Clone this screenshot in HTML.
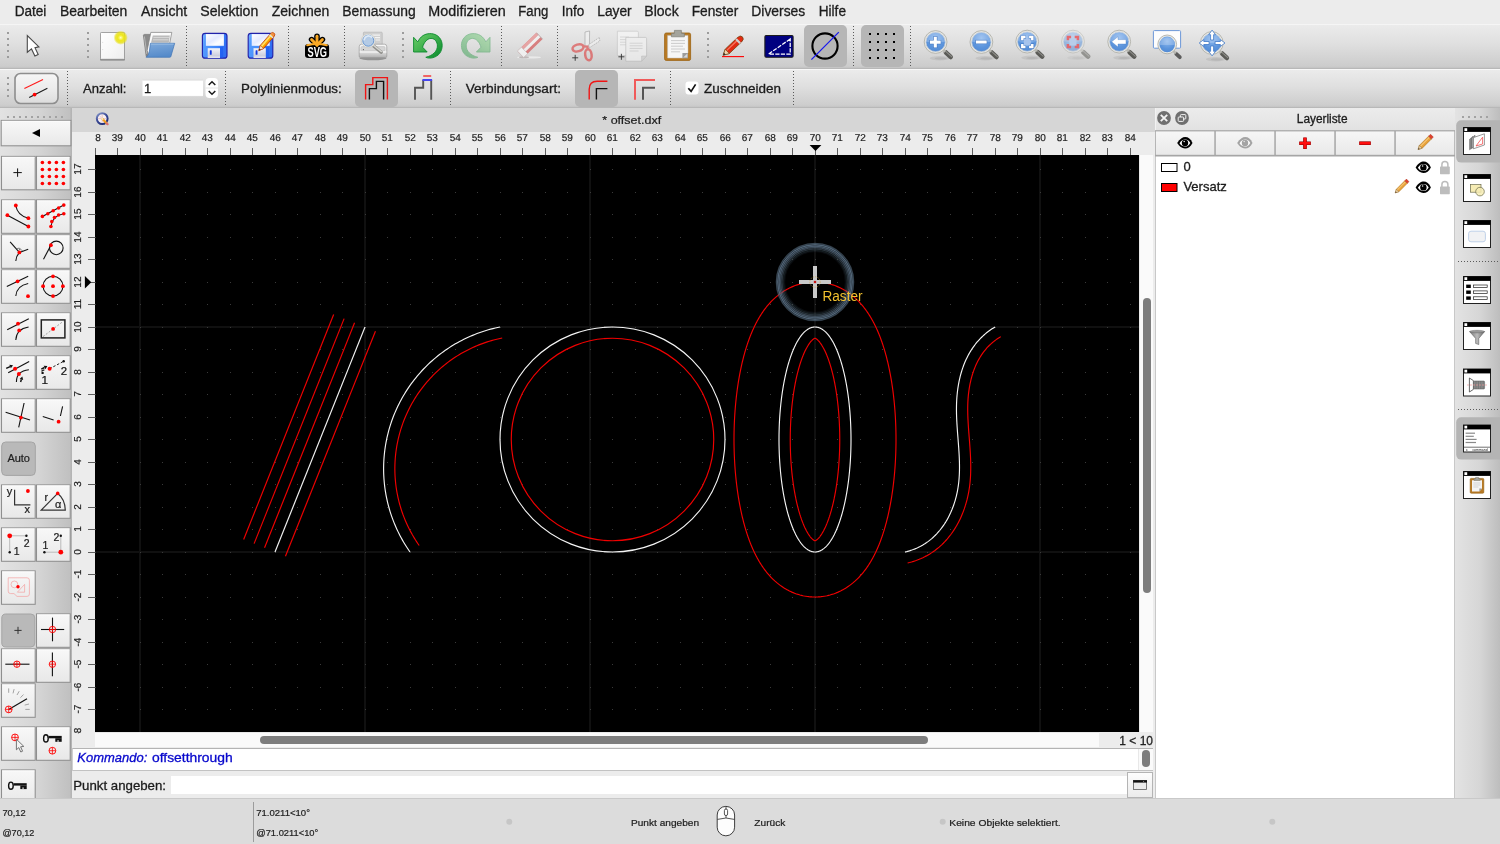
<!DOCTYPE html>
<html><head><meta charset="utf-8"><title>QCAD</title>
<style>
html,body{margin:0;padding:0}
body{width:1500px;height:844px;position:relative;overflow:hidden;background:#ececec;font-family:"Liberation Sans",sans-serif;color:#262626}
div{position:absolute;box-sizing:border-box}
svg{position:absolute;overflow:visible;will-change:transform}
#menubar{left:0;top:0;width:1500px;height:24px;background:#ececec}
#tb1{left:0;top:24px;width:1500px;height:45px;background:linear-gradient(#ebebeb,#dfdfdf 45%,#cccccc 96%,#c2c2c2);border-top:1px solid #f5f5f5;border-bottom:1px solid #b8b8b8}
#tb2{left:0;top:69px;width:1500px;height:39px;background:linear-gradient(#ebebeb,#dfdfdf 45%,#cdcdcd 95%,#c4c4c4);border-top:1px solid #f8f8f8;border-bottom:1px solid #b8b8b8}
#leftbar{left:0;top:108px;width:72px;height:690px;background:linear-gradient(90deg,#e2e2e2,#d4d4d4 55%,#bfbfbf)}
#leftedge{left:70px;top:108px;width:2px;height:690px;background:linear-gradient(90deg,#bcbcbc,#b2b2b2)}
#tabbar{left:72px;top:108px;width:1083px;height:24px;background:#d6d6d6}
#rulerbg{left:72px;top:132px;width:1083px;height:616px;background:#ececec}
#canvasbg{left:95px;top:155px;width:1044px;height:577px;background:#000}
#vscroll{left:1139px;top:155px;width:14px;height:577px;background:#fafafa;border-left:1px solid #e8e8e8}
#hscroll{left:95px;top:732px;width:1004px;height:15px;background:#fafafa;border-top:1px solid #e8e8e8}
.thumb{background:#7d7d7d;border-radius:4px}
#zoomlbl{left:1099px;top:732px;width:54px;height:16px;background:#ececec}
#cmdarea{left:72px;top:748px;width:1083px;height:50px;background:#ececec}
#cmdhist{left:72px;top:748px;width:1081px;height:23px;background:#fff;border-top:1px solid #b4b4b4;border-bottom:1px solid #c2c2c2;border-left:1px solid #cfcfcf}
#cmdhistsb{left:1138px;top:749px;width:15px;height:21px;background:#fafafa;border-left:1px solid #e8e8e8}
#cmdline{left:171px;top:776px;width:956px;height:18px;background:#fff}
#cmdbtn{left:1127px;top:772px;width:26px;height:26px;background:linear-gradient(#fdfdfd,#ebebeb);border:1px solid #b4b4b4}
#layerpanel{left:1155px;top:108px;width:300px;height:690px;background:#fff;border-left:1px solid #c8c8c8;border-right:1px solid #c8c8c8}
#layerhdr{left:1155px;top:108px;width:300px;height:24px;background:linear-gradient(#ececec,#e1e1e1);border-left:1px solid #f2f2f2}
#rightbar{left:1455px;top:108px;width:45px;height:690px;background:linear-gradient(90deg,#e3e3e3,#d6d6d6 55%,#bdbdbd)}
#statusbar{left:0;top:798px;width:1500px;height:46px;background:#dcdcdc;border-top:1px solid #c9c9c9}
</style></head>
<body>
<div id="menubar"></div>
<div id="tb1"></div>
<div id="tb2"></div>
<div id="leftbar"></div>
<div id="tabbar"></div>
<div id="leftedge"></div>
<div id="rulerbg"></div>
<div id="canvasbg"></div>
<div id="vscroll"><div class="thumb" style="left:3px;top:143px;width:8px;height:295px"></div></div>
<div id="hscroll"><div class="thumb" style="left:165px;top:3px;width:668px;height:8px"></div></div>
<div id="zoomlbl"></div>
<div id="cmdarea"></div>
<div id="cmdhist"></div>
<div id="cmdhistsb"><div class="thumb" style="left:3px;top:1px;width:8px;height:17px"></div></div>
<div id="cmdline"></div>
<div id="cmdbtn"></div>
<div id="layerpanel"></div>
<div id="layerhdr"></div>
<div id="rightbar"></div>
<div id="statusbar"></div>

<svg id="cv" style="left:95px;top:155px" width="1044" height="577" viewBox="0 0 1044 577">
<defs><clipPath id="cvclip"><rect x="0" y="0" width="1044" height="577"/></clipPath>
<radialGradient id="ring" cx="50%" cy="50%" r="50%"><stop offset="0.70" stop-color="#5f7488" stop-opacity="0"/><stop offset="0.80" stop-color="#5f7488" stop-opacity="0.45"/><stop offset="0.90" stop-color="#647a8e" stop-opacity="0.9"/><stop offset="0.985" stop-color="#5a6e80" stop-opacity="0.95"/><stop offset="1" stop-color="#5a6e80" stop-opacity="0"/></radialGradient>
</defs><g clip-path="url(#cvclip)">
<rect x="44.0" y="0" width="2" height="577" fill="#101010"/>
<rect x="269.0" y="0" width="2" height="577" fill="#101010"/>
<rect x="494.0" y="0" width="2" height="577" fill="#101010"/>
<rect x="719.0" y="0" width="2" height="577" fill="#101010"/>
<rect x="944.0" y="0" width="2" height="577" fill="#101010"/>
<rect x="0" y="396.0" width="1044" height="2" fill="#101010"/>
<rect x="0" y="171.0" width="1044" height="2" fill="#101010"/>
<path d="M0 577h1v1h-1zM0 554h1v1h-1zM0 532h1v1h-1zM0 509h1v1h-1zM0 487h1v1h-1zM0 464h1v1h-1zM0 442h1v1h-1zM0 419h1v1h-1zM0 397h1v1h-1zM0 374h1v1h-1zM0 352h1v1h-1zM0 329h1v1h-1zM0 307h1v1h-1zM0 284h1v1h-1zM0 262h1v1h-1zM0 239h1v1h-1zM0 217h1v1h-1zM0 194h1v1h-1zM0 172h1v1h-1zM0 149h1v1h-1zM0 127h1v1h-1zM0 104h1v1h-1zM0 82h1v1h-1zM0 59h1v1h-1zM0 37h1v1h-1zM0 14h1v1h-1zM22 577h1v1h-1zM22 554h1v1h-1zM22 532h1v1h-1zM22 509h1v1h-1zM22 487h1v1h-1zM22 464h1v1h-1zM22 442h1v1h-1zM22 419h1v1h-1zM22 397h1v1h-1zM22 374h1v1h-1zM22 352h1v1h-1zM22 329h1v1h-1zM22 307h1v1h-1zM22 284h1v1h-1zM22 262h1v1h-1zM22 239h1v1h-1zM22 217h1v1h-1zM22 194h1v1h-1zM22 172h1v1h-1zM22 149h1v1h-1zM22 127h1v1h-1zM22 104h1v1h-1zM22 82h1v1h-1zM22 59h1v1h-1zM22 37h1v1h-1zM22 14h1v1h-1zM45 577h1v1h-1zM45 554h1v1h-1zM45 532h1v1h-1zM45 509h1v1h-1zM45 487h1v1h-1zM45 464h1v1h-1zM45 442h1v1h-1zM45 419h1v1h-1zM45 397h1v1h-1zM45 374h1v1h-1zM45 352h1v1h-1zM45 329h1v1h-1zM45 307h1v1h-1zM45 284h1v1h-1zM45 262h1v1h-1zM45 239h1v1h-1zM45 217h1v1h-1zM45 194h1v1h-1zM45 172h1v1h-1zM45 149h1v1h-1zM45 127h1v1h-1zM45 104h1v1h-1zM45 82h1v1h-1zM45 59h1v1h-1zM45 37h1v1h-1zM45 14h1v1h-1zM67 577h1v1h-1zM67 554h1v1h-1zM67 532h1v1h-1zM67 509h1v1h-1zM67 487h1v1h-1zM67 464h1v1h-1zM67 442h1v1h-1zM67 419h1v1h-1zM67 397h1v1h-1zM67 374h1v1h-1zM67 352h1v1h-1zM67 329h1v1h-1zM67 307h1v1h-1zM67 284h1v1h-1zM67 262h1v1h-1zM67 239h1v1h-1zM67 217h1v1h-1zM67 194h1v1h-1zM67 172h1v1h-1zM67 149h1v1h-1zM67 127h1v1h-1zM67 104h1v1h-1zM67 82h1v1h-1zM67 59h1v1h-1zM67 37h1v1h-1zM67 14h1v1h-1zM90 577h1v1h-1zM90 554h1v1h-1zM90 532h1v1h-1zM90 509h1v1h-1zM90 487h1v1h-1zM90 464h1v1h-1zM90 442h1v1h-1zM90 419h1v1h-1zM90 397h1v1h-1zM90 374h1v1h-1zM90 352h1v1h-1zM90 329h1v1h-1zM90 307h1v1h-1zM90 284h1v1h-1zM90 262h1v1h-1zM90 239h1v1h-1zM90 217h1v1h-1zM90 194h1v1h-1zM90 172h1v1h-1zM90 149h1v1h-1zM90 127h1v1h-1zM90 104h1v1h-1zM90 82h1v1h-1zM90 59h1v1h-1zM90 37h1v1h-1zM90 14h1v1h-1zM112 577h1v1h-1zM112 554h1v1h-1zM112 532h1v1h-1zM112 509h1v1h-1zM112 487h1v1h-1zM112 464h1v1h-1zM112 442h1v1h-1zM112 419h1v1h-1zM112 397h1v1h-1zM112 374h1v1h-1zM112 352h1v1h-1zM112 329h1v1h-1zM112 307h1v1h-1zM112 284h1v1h-1zM112 262h1v1h-1zM112 239h1v1h-1zM112 217h1v1h-1zM112 194h1v1h-1zM112 172h1v1h-1zM112 149h1v1h-1zM112 127h1v1h-1zM112 104h1v1h-1zM112 82h1v1h-1zM112 59h1v1h-1zM112 37h1v1h-1zM112 14h1v1h-1zM135 577h1v1h-1zM135 554h1v1h-1zM135 532h1v1h-1zM135 509h1v1h-1zM135 487h1v1h-1zM135 464h1v1h-1zM135 442h1v1h-1zM135 419h1v1h-1zM135 397h1v1h-1zM135 374h1v1h-1zM135 352h1v1h-1zM135 329h1v1h-1zM135 307h1v1h-1zM135 284h1v1h-1zM135 262h1v1h-1zM135 239h1v1h-1zM135 217h1v1h-1zM135 194h1v1h-1zM135 172h1v1h-1zM135 149h1v1h-1zM135 127h1v1h-1zM135 104h1v1h-1zM135 82h1v1h-1zM135 59h1v1h-1zM135 37h1v1h-1zM135 14h1v1h-1zM157 577h1v1h-1zM157 554h1v1h-1zM157 532h1v1h-1zM157 509h1v1h-1zM157 487h1v1h-1zM157 464h1v1h-1zM157 442h1v1h-1zM157 419h1v1h-1zM157 397h1v1h-1zM157 374h1v1h-1zM157 352h1v1h-1zM157 329h1v1h-1zM157 307h1v1h-1zM157 284h1v1h-1zM157 262h1v1h-1zM157 239h1v1h-1zM157 217h1v1h-1zM157 194h1v1h-1zM157 172h1v1h-1zM157 149h1v1h-1zM157 127h1v1h-1zM157 104h1v1h-1zM157 82h1v1h-1zM157 59h1v1h-1zM157 37h1v1h-1zM157 14h1v1h-1zM180 577h1v1h-1zM180 554h1v1h-1zM180 532h1v1h-1zM180 509h1v1h-1zM180 487h1v1h-1zM180 464h1v1h-1zM180 442h1v1h-1zM180 419h1v1h-1zM180 397h1v1h-1zM180 374h1v1h-1zM180 352h1v1h-1zM180 329h1v1h-1zM180 307h1v1h-1zM180 284h1v1h-1zM180 262h1v1h-1zM180 239h1v1h-1zM180 217h1v1h-1zM180 194h1v1h-1zM180 172h1v1h-1zM180 149h1v1h-1zM180 127h1v1h-1zM180 104h1v1h-1zM180 82h1v1h-1zM180 59h1v1h-1zM180 37h1v1h-1zM180 14h1v1h-1zM202 577h1v1h-1zM202 554h1v1h-1zM202 532h1v1h-1zM202 509h1v1h-1zM202 487h1v1h-1zM202 464h1v1h-1zM202 442h1v1h-1zM202 419h1v1h-1zM202 397h1v1h-1zM202 374h1v1h-1zM202 352h1v1h-1zM202 329h1v1h-1zM202 307h1v1h-1zM202 284h1v1h-1zM202 262h1v1h-1zM202 239h1v1h-1zM202 217h1v1h-1zM202 194h1v1h-1zM202 172h1v1h-1zM202 149h1v1h-1zM202 127h1v1h-1zM202 104h1v1h-1zM202 82h1v1h-1zM202 59h1v1h-1zM202 37h1v1h-1zM202 14h1v1h-1zM225 577h1v1h-1zM225 554h1v1h-1zM225 532h1v1h-1zM225 509h1v1h-1zM225 487h1v1h-1zM225 464h1v1h-1zM225 442h1v1h-1zM225 419h1v1h-1zM225 397h1v1h-1zM225 374h1v1h-1zM225 352h1v1h-1zM225 329h1v1h-1zM225 307h1v1h-1zM225 284h1v1h-1zM225 262h1v1h-1zM225 239h1v1h-1zM225 217h1v1h-1zM225 194h1v1h-1zM225 172h1v1h-1zM225 149h1v1h-1zM225 127h1v1h-1zM225 104h1v1h-1zM225 82h1v1h-1zM225 59h1v1h-1zM225 37h1v1h-1zM225 14h1v1h-1zM247 577h1v1h-1zM247 554h1v1h-1zM247 532h1v1h-1zM247 509h1v1h-1zM247 487h1v1h-1zM247 464h1v1h-1zM247 442h1v1h-1zM247 419h1v1h-1zM247 397h1v1h-1zM247 374h1v1h-1zM247 352h1v1h-1zM247 329h1v1h-1zM247 307h1v1h-1zM247 284h1v1h-1zM247 262h1v1h-1zM247 239h1v1h-1zM247 217h1v1h-1zM247 194h1v1h-1zM247 172h1v1h-1zM247 149h1v1h-1zM247 127h1v1h-1zM247 104h1v1h-1zM247 82h1v1h-1zM247 59h1v1h-1zM247 37h1v1h-1zM247 14h1v1h-1zM270 577h1v1h-1zM270 554h1v1h-1zM270 532h1v1h-1zM270 509h1v1h-1zM270 487h1v1h-1zM270 464h1v1h-1zM270 442h1v1h-1zM270 419h1v1h-1zM270 397h1v1h-1zM270 374h1v1h-1zM270 352h1v1h-1zM270 329h1v1h-1zM270 307h1v1h-1zM270 284h1v1h-1zM270 262h1v1h-1zM270 239h1v1h-1zM270 217h1v1h-1zM270 194h1v1h-1zM270 172h1v1h-1zM270 149h1v1h-1zM270 127h1v1h-1zM270 104h1v1h-1zM270 82h1v1h-1zM270 59h1v1h-1zM270 37h1v1h-1zM270 14h1v1h-1zM292 577h1v1h-1zM292 554h1v1h-1zM292 532h1v1h-1zM292 509h1v1h-1zM292 487h1v1h-1zM292 464h1v1h-1zM292 442h1v1h-1zM292 419h1v1h-1zM292 397h1v1h-1zM292 374h1v1h-1zM292 352h1v1h-1zM292 329h1v1h-1zM292 307h1v1h-1zM292 284h1v1h-1zM292 262h1v1h-1zM292 239h1v1h-1zM292 217h1v1h-1zM292 194h1v1h-1zM292 172h1v1h-1zM292 149h1v1h-1zM292 127h1v1h-1zM292 104h1v1h-1zM292 82h1v1h-1zM292 59h1v1h-1zM292 37h1v1h-1zM292 14h1v1h-1zM315 577h1v1h-1zM315 554h1v1h-1zM315 532h1v1h-1zM315 509h1v1h-1zM315 487h1v1h-1zM315 464h1v1h-1zM315 442h1v1h-1zM315 419h1v1h-1zM315 397h1v1h-1zM315 374h1v1h-1zM315 352h1v1h-1zM315 329h1v1h-1zM315 307h1v1h-1zM315 284h1v1h-1zM315 262h1v1h-1zM315 239h1v1h-1zM315 217h1v1h-1zM315 194h1v1h-1zM315 172h1v1h-1zM315 149h1v1h-1zM315 127h1v1h-1zM315 104h1v1h-1zM315 82h1v1h-1zM315 59h1v1h-1zM315 37h1v1h-1zM315 14h1v1h-1zM337 577h1v1h-1zM337 554h1v1h-1zM337 532h1v1h-1zM337 509h1v1h-1zM337 487h1v1h-1zM337 464h1v1h-1zM337 442h1v1h-1zM337 419h1v1h-1zM337 397h1v1h-1zM337 374h1v1h-1zM337 352h1v1h-1zM337 329h1v1h-1zM337 307h1v1h-1zM337 284h1v1h-1zM337 262h1v1h-1zM337 239h1v1h-1zM337 217h1v1h-1zM337 194h1v1h-1zM337 172h1v1h-1zM337 149h1v1h-1zM337 127h1v1h-1zM337 104h1v1h-1zM337 82h1v1h-1zM337 59h1v1h-1zM337 37h1v1h-1zM337 14h1v1h-1zM360 577h1v1h-1zM360 554h1v1h-1zM360 532h1v1h-1zM360 509h1v1h-1zM360 487h1v1h-1zM360 464h1v1h-1zM360 442h1v1h-1zM360 419h1v1h-1zM360 397h1v1h-1zM360 374h1v1h-1zM360 352h1v1h-1zM360 329h1v1h-1zM360 307h1v1h-1zM360 284h1v1h-1zM360 262h1v1h-1zM360 239h1v1h-1zM360 217h1v1h-1zM360 194h1v1h-1zM360 172h1v1h-1zM360 149h1v1h-1zM360 127h1v1h-1zM360 104h1v1h-1zM360 82h1v1h-1zM360 59h1v1h-1zM360 37h1v1h-1zM360 14h1v1h-1zM382 577h1v1h-1zM382 554h1v1h-1zM382 532h1v1h-1zM382 509h1v1h-1zM382 487h1v1h-1zM382 464h1v1h-1zM382 442h1v1h-1zM382 419h1v1h-1zM382 397h1v1h-1zM382 374h1v1h-1zM382 352h1v1h-1zM382 329h1v1h-1zM382 307h1v1h-1zM382 284h1v1h-1zM382 262h1v1h-1zM382 239h1v1h-1zM382 217h1v1h-1zM382 194h1v1h-1zM382 172h1v1h-1zM382 149h1v1h-1zM382 127h1v1h-1zM382 104h1v1h-1zM382 82h1v1h-1zM382 59h1v1h-1zM382 37h1v1h-1zM382 14h1v1h-1zM405 577h1v1h-1zM405 554h1v1h-1zM405 532h1v1h-1zM405 509h1v1h-1zM405 487h1v1h-1zM405 464h1v1h-1zM405 442h1v1h-1zM405 419h1v1h-1zM405 397h1v1h-1zM405 374h1v1h-1zM405 352h1v1h-1zM405 329h1v1h-1zM405 307h1v1h-1zM405 284h1v1h-1zM405 262h1v1h-1zM405 239h1v1h-1zM405 217h1v1h-1zM405 194h1v1h-1zM405 172h1v1h-1zM405 149h1v1h-1zM405 127h1v1h-1zM405 104h1v1h-1zM405 82h1v1h-1zM405 59h1v1h-1zM405 37h1v1h-1zM405 14h1v1h-1zM427 577h1v1h-1zM427 554h1v1h-1zM427 532h1v1h-1zM427 509h1v1h-1zM427 487h1v1h-1zM427 464h1v1h-1zM427 442h1v1h-1zM427 419h1v1h-1zM427 397h1v1h-1zM427 374h1v1h-1zM427 352h1v1h-1zM427 329h1v1h-1zM427 307h1v1h-1zM427 284h1v1h-1zM427 262h1v1h-1zM427 239h1v1h-1zM427 217h1v1h-1zM427 194h1v1h-1zM427 172h1v1h-1zM427 149h1v1h-1zM427 127h1v1h-1zM427 104h1v1h-1zM427 82h1v1h-1zM427 59h1v1h-1zM427 37h1v1h-1zM427 14h1v1h-1zM450 577h1v1h-1zM450 554h1v1h-1zM450 532h1v1h-1zM450 509h1v1h-1zM450 487h1v1h-1zM450 464h1v1h-1zM450 442h1v1h-1zM450 419h1v1h-1zM450 397h1v1h-1zM450 374h1v1h-1zM450 352h1v1h-1zM450 329h1v1h-1zM450 307h1v1h-1zM450 284h1v1h-1zM450 262h1v1h-1zM450 239h1v1h-1zM450 217h1v1h-1zM450 194h1v1h-1zM450 172h1v1h-1zM450 149h1v1h-1zM450 127h1v1h-1zM450 104h1v1h-1zM450 82h1v1h-1zM450 59h1v1h-1zM450 37h1v1h-1zM450 14h1v1h-1zM472 577h1v1h-1zM472 554h1v1h-1zM472 532h1v1h-1zM472 509h1v1h-1zM472 487h1v1h-1zM472 464h1v1h-1zM472 442h1v1h-1zM472 419h1v1h-1zM472 397h1v1h-1zM472 374h1v1h-1zM472 352h1v1h-1zM472 329h1v1h-1zM472 307h1v1h-1zM472 284h1v1h-1zM472 262h1v1h-1zM472 239h1v1h-1zM472 217h1v1h-1zM472 194h1v1h-1zM472 172h1v1h-1zM472 149h1v1h-1zM472 127h1v1h-1zM472 104h1v1h-1zM472 82h1v1h-1zM472 59h1v1h-1zM472 37h1v1h-1zM472 14h1v1h-1zM495 577h1v1h-1zM495 554h1v1h-1zM495 532h1v1h-1zM495 509h1v1h-1zM495 487h1v1h-1zM495 464h1v1h-1zM495 442h1v1h-1zM495 419h1v1h-1zM495 397h1v1h-1zM495 374h1v1h-1zM495 352h1v1h-1zM495 329h1v1h-1zM495 307h1v1h-1zM495 284h1v1h-1zM495 262h1v1h-1zM495 239h1v1h-1zM495 217h1v1h-1zM495 194h1v1h-1zM495 172h1v1h-1zM495 149h1v1h-1zM495 127h1v1h-1zM495 104h1v1h-1zM495 82h1v1h-1zM495 59h1v1h-1zM495 37h1v1h-1zM495 14h1v1h-1zM517 577h1v1h-1zM517 554h1v1h-1zM517 532h1v1h-1zM517 509h1v1h-1zM517 487h1v1h-1zM517 464h1v1h-1zM517 442h1v1h-1zM517 419h1v1h-1zM517 397h1v1h-1zM517 374h1v1h-1zM517 352h1v1h-1zM517 329h1v1h-1zM517 307h1v1h-1zM517 284h1v1h-1zM517 262h1v1h-1zM517 239h1v1h-1zM517 217h1v1h-1zM517 194h1v1h-1zM517 172h1v1h-1zM517 149h1v1h-1zM517 127h1v1h-1zM517 104h1v1h-1zM517 82h1v1h-1zM517 59h1v1h-1zM517 37h1v1h-1zM517 14h1v1h-1zM540 577h1v1h-1zM540 554h1v1h-1zM540 532h1v1h-1zM540 509h1v1h-1zM540 487h1v1h-1zM540 464h1v1h-1zM540 442h1v1h-1zM540 419h1v1h-1zM540 397h1v1h-1zM540 374h1v1h-1zM540 352h1v1h-1zM540 329h1v1h-1zM540 307h1v1h-1zM540 284h1v1h-1zM540 262h1v1h-1zM540 239h1v1h-1zM540 217h1v1h-1zM540 194h1v1h-1zM540 172h1v1h-1zM540 149h1v1h-1zM540 127h1v1h-1zM540 104h1v1h-1zM540 82h1v1h-1zM540 59h1v1h-1zM540 37h1v1h-1zM540 14h1v1h-1zM562 577h1v1h-1zM562 554h1v1h-1zM562 532h1v1h-1zM562 509h1v1h-1zM562 487h1v1h-1zM562 464h1v1h-1zM562 442h1v1h-1zM562 419h1v1h-1zM562 397h1v1h-1zM562 374h1v1h-1zM562 352h1v1h-1zM562 329h1v1h-1zM562 307h1v1h-1zM562 284h1v1h-1zM562 262h1v1h-1zM562 239h1v1h-1zM562 217h1v1h-1zM562 194h1v1h-1zM562 172h1v1h-1zM562 149h1v1h-1zM562 127h1v1h-1zM562 104h1v1h-1zM562 82h1v1h-1zM562 59h1v1h-1zM562 37h1v1h-1zM562 14h1v1h-1zM585 577h1v1h-1zM585 554h1v1h-1zM585 532h1v1h-1zM585 509h1v1h-1zM585 487h1v1h-1zM585 464h1v1h-1zM585 442h1v1h-1zM585 419h1v1h-1zM585 397h1v1h-1zM585 374h1v1h-1zM585 352h1v1h-1zM585 329h1v1h-1zM585 307h1v1h-1zM585 284h1v1h-1zM585 262h1v1h-1zM585 239h1v1h-1zM585 217h1v1h-1zM585 194h1v1h-1zM585 172h1v1h-1zM585 149h1v1h-1zM585 127h1v1h-1zM585 104h1v1h-1zM585 82h1v1h-1zM585 59h1v1h-1zM585 37h1v1h-1zM585 14h1v1h-1zM607 577h1v1h-1zM607 554h1v1h-1zM607 532h1v1h-1zM607 509h1v1h-1zM607 487h1v1h-1zM607 464h1v1h-1zM607 442h1v1h-1zM607 419h1v1h-1zM607 397h1v1h-1zM607 374h1v1h-1zM607 352h1v1h-1zM607 329h1v1h-1zM607 307h1v1h-1zM607 284h1v1h-1zM607 262h1v1h-1zM607 239h1v1h-1zM607 217h1v1h-1zM607 194h1v1h-1zM607 172h1v1h-1zM607 149h1v1h-1zM607 127h1v1h-1zM607 104h1v1h-1zM607 82h1v1h-1zM607 59h1v1h-1zM607 37h1v1h-1zM607 14h1v1h-1zM630 577h1v1h-1zM630 554h1v1h-1zM630 532h1v1h-1zM630 509h1v1h-1zM630 487h1v1h-1zM630 464h1v1h-1zM630 442h1v1h-1zM630 419h1v1h-1zM630 397h1v1h-1zM630 374h1v1h-1zM630 352h1v1h-1zM630 329h1v1h-1zM630 307h1v1h-1zM630 284h1v1h-1zM630 262h1v1h-1zM630 239h1v1h-1zM630 217h1v1h-1zM630 194h1v1h-1zM630 172h1v1h-1zM630 149h1v1h-1zM630 127h1v1h-1zM630 104h1v1h-1zM630 82h1v1h-1zM630 59h1v1h-1zM630 37h1v1h-1zM630 14h1v1h-1zM652 577h1v1h-1zM652 554h1v1h-1zM652 532h1v1h-1zM652 509h1v1h-1zM652 487h1v1h-1zM652 464h1v1h-1zM652 442h1v1h-1zM652 419h1v1h-1zM652 397h1v1h-1zM652 374h1v1h-1zM652 352h1v1h-1zM652 329h1v1h-1zM652 307h1v1h-1zM652 284h1v1h-1zM652 262h1v1h-1zM652 239h1v1h-1zM652 217h1v1h-1zM652 194h1v1h-1zM652 172h1v1h-1zM652 149h1v1h-1zM652 127h1v1h-1zM652 104h1v1h-1zM652 82h1v1h-1zM652 59h1v1h-1zM652 37h1v1h-1zM652 14h1v1h-1zM675 577h1v1h-1zM675 554h1v1h-1zM675 532h1v1h-1zM675 509h1v1h-1zM675 487h1v1h-1zM675 464h1v1h-1zM675 442h1v1h-1zM675 419h1v1h-1zM675 397h1v1h-1zM675 374h1v1h-1zM675 352h1v1h-1zM675 329h1v1h-1zM675 307h1v1h-1zM675 284h1v1h-1zM675 262h1v1h-1zM675 239h1v1h-1zM675 217h1v1h-1zM675 194h1v1h-1zM675 172h1v1h-1zM675 149h1v1h-1zM675 127h1v1h-1zM675 104h1v1h-1zM675 82h1v1h-1zM675 59h1v1h-1zM675 37h1v1h-1zM675 14h1v1h-1zM697 577h1v1h-1zM697 554h1v1h-1zM697 532h1v1h-1zM697 509h1v1h-1zM697 487h1v1h-1zM697 464h1v1h-1zM697 442h1v1h-1zM697 419h1v1h-1zM697 397h1v1h-1zM697 374h1v1h-1zM697 352h1v1h-1zM697 329h1v1h-1zM697 307h1v1h-1zM697 284h1v1h-1zM697 262h1v1h-1zM697 239h1v1h-1zM697 217h1v1h-1zM697 194h1v1h-1zM697 172h1v1h-1zM697 149h1v1h-1zM697 127h1v1h-1zM697 104h1v1h-1zM697 82h1v1h-1zM697 59h1v1h-1zM697 37h1v1h-1zM697 14h1v1h-1zM720 577h1v1h-1zM720 554h1v1h-1zM720 532h1v1h-1zM720 509h1v1h-1zM720 487h1v1h-1zM720 464h1v1h-1zM720 442h1v1h-1zM720 419h1v1h-1zM720 397h1v1h-1zM720 374h1v1h-1zM720 352h1v1h-1zM720 329h1v1h-1zM720 307h1v1h-1zM720 284h1v1h-1zM720 262h1v1h-1zM720 239h1v1h-1zM720 217h1v1h-1zM720 194h1v1h-1zM720 172h1v1h-1zM720 149h1v1h-1zM720 127h1v1h-1zM720 104h1v1h-1zM720 82h1v1h-1zM720 59h1v1h-1zM720 37h1v1h-1zM720 14h1v1h-1zM742 577h1v1h-1zM742 554h1v1h-1zM742 532h1v1h-1zM742 509h1v1h-1zM742 487h1v1h-1zM742 464h1v1h-1zM742 442h1v1h-1zM742 419h1v1h-1zM742 397h1v1h-1zM742 374h1v1h-1zM742 352h1v1h-1zM742 329h1v1h-1zM742 307h1v1h-1zM742 284h1v1h-1zM742 262h1v1h-1zM742 239h1v1h-1zM742 217h1v1h-1zM742 194h1v1h-1zM742 172h1v1h-1zM742 149h1v1h-1zM742 127h1v1h-1zM742 104h1v1h-1zM742 82h1v1h-1zM742 59h1v1h-1zM742 37h1v1h-1zM742 14h1v1h-1zM765 577h1v1h-1zM765 554h1v1h-1zM765 532h1v1h-1zM765 509h1v1h-1zM765 487h1v1h-1zM765 464h1v1h-1zM765 442h1v1h-1zM765 419h1v1h-1zM765 397h1v1h-1zM765 374h1v1h-1zM765 352h1v1h-1zM765 329h1v1h-1zM765 307h1v1h-1zM765 284h1v1h-1zM765 262h1v1h-1zM765 239h1v1h-1zM765 217h1v1h-1zM765 194h1v1h-1zM765 172h1v1h-1zM765 149h1v1h-1zM765 127h1v1h-1zM765 104h1v1h-1zM765 82h1v1h-1zM765 59h1v1h-1zM765 37h1v1h-1zM765 14h1v1h-1zM787 577h1v1h-1zM787 554h1v1h-1zM787 532h1v1h-1zM787 509h1v1h-1zM787 487h1v1h-1zM787 464h1v1h-1zM787 442h1v1h-1zM787 419h1v1h-1zM787 397h1v1h-1zM787 374h1v1h-1zM787 352h1v1h-1zM787 329h1v1h-1zM787 307h1v1h-1zM787 284h1v1h-1zM787 262h1v1h-1zM787 239h1v1h-1zM787 217h1v1h-1zM787 194h1v1h-1zM787 172h1v1h-1zM787 149h1v1h-1zM787 127h1v1h-1zM787 104h1v1h-1zM787 82h1v1h-1zM787 59h1v1h-1zM787 37h1v1h-1zM787 14h1v1h-1zM810 577h1v1h-1zM810 554h1v1h-1zM810 532h1v1h-1zM810 509h1v1h-1zM810 487h1v1h-1zM810 464h1v1h-1zM810 442h1v1h-1zM810 419h1v1h-1zM810 397h1v1h-1zM810 374h1v1h-1zM810 352h1v1h-1zM810 329h1v1h-1zM810 307h1v1h-1zM810 284h1v1h-1zM810 262h1v1h-1zM810 239h1v1h-1zM810 217h1v1h-1zM810 194h1v1h-1zM810 172h1v1h-1zM810 149h1v1h-1zM810 127h1v1h-1zM810 104h1v1h-1zM810 82h1v1h-1zM810 59h1v1h-1zM810 37h1v1h-1zM810 14h1v1h-1zM832 577h1v1h-1zM832 554h1v1h-1zM832 532h1v1h-1zM832 509h1v1h-1zM832 487h1v1h-1zM832 464h1v1h-1zM832 442h1v1h-1zM832 419h1v1h-1zM832 397h1v1h-1zM832 374h1v1h-1zM832 352h1v1h-1zM832 329h1v1h-1zM832 307h1v1h-1zM832 284h1v1h-1zM832 262h1v1h-1zM832 239h1v1h-1zM832 217h1v1h-1zM832 194h1v1h-1zM832 172h1v1h-1zM832 149h1v1h-1zM832 127h1v1h-1zM832 104h1v1h-1zM832 82h1v1h-1zM832 59h1v1h-1zM832 37h1v1h-1zM832 14h1v1h-1zM855 577h1v1h-1zM855 554h1v1h-1zM855 532h1v1h-1zM855 509h1v1h-1zM855 487h1v1h-1zM855 464h1v1h-1zM855 442h1v1h-1zM855 419h1v1h-1zM855 397h1v1h-1zM855 374h1v1h-1zM855 352h1v1h-1zM855 329h1v1h-1zM855 307h1v1h-1zM855 284h1v1h-1zM855 262h1v1h-1zM855 239h1v1h-1zM855 217h1v1h-1zM855 194h1v1h-1zM855 172h1v1h-1zM855 149h1v1h-1zM855 127h1v1h-1zM855 104h1v1h-1zM855 82h1v1h-1zM855 59h1v1h-1zM855 37h1v1h-1zM855 14h1v1h-1zM877 577h1v1h-1zM877 554h1v1h-1zM877 532h1v1h-1zM877 509h1v1h-1zM877 487h1v1h-1zM877 464h1v1h-1zM877 442h1v1h-1zM877 419h1v1h-1zM877 397h1v1h-1zM877 374h1v1h-1zM877 352h1v1h-1zM877 329h1v1h-1zM877 307h1v1h-1zM877 284h1v1h-1zM877 262h1v1h-1zM877 239h1v1h-1zM877 217h1v1h-1zM877 194h1v1h-1zM877 172h1v1h-1zM877 149h1v1h-1zM877 127h1v1h-1zM877 104h1v1h-1zM877 82h1v1h-1zM877 59h1v1h-1zM877 37h1v1h-1zM877 14h1v1h-1zM900 577h1v1h-1zM900 554h1v1h-1zM900 532h1v1h-1zM900 509h1v1h-1zM900 487h1v1h-1zM900 464h1v1h-1zM900 442h1v1h-1zM900 419h1v1h-1zM900 397h1v1h-1zM900 374h1v1h-1zM900 352h1v1h-1zM900 329h1v1h-1zM900 307h1v1h-1zM900 284h1v1h-1zM900 262h1v1h-1zM900 239h1v1h-1zM900 217h1v1h-1zM900 194h1v1h-1zM900 172h1v1h-1zM900 149h1v1h-1zM900 127h1v1h-1zM900 104h1v1h-1zM900 82h1v1h-1zM900 59h1v1h-1zM900 37h1v1h-1zM900 14h1v1h-1zM922 577h1v1h-1zM922 554h1v1h-1zM922 532h1v1h-1zM922 509h1v1h-1zM922 487h1v1h-1zM922 464h1v1h-1zM922 442h1v1h-1zM922 419h1v1h-1zM922 397h1v1h-1zM922 374h1v1h-1zM922 352h1v1h-1zM922 329h1v1h-1zM922 307h1v1h-1zM922 284h1v1h-1zM922 262h1v1h-1zM922 239h1v1h-1zM922 217h1v1h-1zM922 194h1v1h-1zM922 172h1v1h-1zM922 149h1v1h-1zM922 127h1v1h-1zM922 104h1v1h-1zM922 82h1v1h-1zM922 59h1v1h-1zM922 37h1v1h-1zM922 14h1v1h-1zM945 577h1v1h-1zM945 554h1v1h-1zM945 532h1v1h-1zM945 509h1v1h-1zM945 487h1v1h-1zM945 464h1v1h-1zM945 442h1v1h-1zM945 419h1v1h-1zM945 397h1v1h-1zM945 374h1v1h-1zM945 352h1v1h-1zM945 329h1v1h-1zM945 307h1v1h-1zM945 284h1v1h-1zM945 262h1v1h-1zM945 239h1v1h-1zM945 217h1v1h-1zM945 194h1v1h-1zM945 172h1v1h-1zM945 149h1v1h-1zM945 127h1v1h-1zM945 104h1v1h-1zM945 82h1v1h-1zM945 59h1v1h-1zM945 37h1v1h-1zM945 14h1v1h-1zM967 577h1v1h-1zM967 554h1v1h-1zM967 532h1v1h-1zM967 509h1v1h-1zM967 487h1v1h-1zM967 464h1v1h-1zM967 442h1v1h-1zM967 419h1v1h-1zM967 397h1v1h-1zM967 374h1v1h-1zM967 352h1v1h-1zM967 329h1v1h-1zM967 307h1v1h-1zM967 284h1v1h-1zM967 262h1v1h-1zM967 239h1v1h-1zM967 217h1v1h-1zM967 194h1v1h-1zM967 172h1v1h-1zM967 149h1v1h-1zM967 127h1v1h-1zM967 104h1v1h-1zM967 82h1v1h-1zM967 59h1v1h-1zM967 37h1v1h-1zM967 14h1v1h-1zM990 577h1v1h-1zM990 554h1v1h-1zM990 532h1v1h-1zM990 509h1v1h-1zM990 487h1v1h-1zM990 464h1v1h-1zM990 442h1v1h-1zM990 419h1v1h-1zM990 397h1v1h-1zM990 374h1v1h-1zM990 352h1v1h-1zM990 329h1v1h-1zM990 307h1v1h-1zM990 284h1v1h-1zM990 262h1v1h-1zM990 239h1v1h-1zM990 217h1v1h-1zM990 194h1v1h-1zM990 172h1v1h-1zM990 149h1v1h-1zM990 127h1v1h-1zM990 104h1v1h-1zM990 82h1v1h-1zM990 59h1v1h-1zM990 37h1v1h-1zM990 14h1v1h-1zM1012 577h1v1h-1zM1012 554h1v1h-1zM1012 532h1v1h-1zM1012 509h1v1h-1zM1012 487h1v1h-1zM1012 464h1v1h-1zM1012 442h1v1h-1zM1012 419h1v1h-1zM1012 397h1v1h-1zM1012 374h1v1h-1zM1012 352h1v1h-1zM1012 329h1v1h-1zM1012 307h1v1h-1zM1012 284h1v1h-1zM1012 262h1v1h-1zM1012 239h1v1h-1zM1012 217h1v1h-1zM1012 194h1v1h-1zM1012 172h1v1h-1zM1012 149h1v1h-1zM1012 127h1v1h-1zM1012 104h1v1h-1zM1012 82h1v1h-1zM1012 59h1v1h-1zM1012 37h1v1h-1zM1012 14h1v1h-1zM1035 577h1v1h-1zM1035 554h1v1h-1zM1035 532h1v1h-1zM1035 509h1v1h-1zM1035 487h1v1h-1zM1035 464h1v1h-1zM1035 442h1v1h-1zM1035 419h1v1h-1zM1035 397h1v1h-1zM1035 374h1v1h-1zM1035 352h1v1h-1zM1035 329h1v1h-1zM1035 307h1v1h-1zM1035 284h1v1h-1zM1035 262h1v1h-1zM1035 239h1v1h-1zM1035 217h1v1h-1zM1035 194h1v1h-1zM1035 172h1v1h-1zM1035 149h1v1h-1zM1035 127h1v1h-1zM1035 104h1v1h-1zM1035 82h1v1h-1zM1035 59h1v1h-1zM1035 37h1v1h-1zM1035 14h1v1h-1z" fill="#3a3a3a" shape-rendering="crispEdges"/>
<path d="M270.00 172.00 L180.00 397.00" stroke="#f4f4f4" fill="none" stroke-width="1.15" stroke-linecap="butt"/>
<path d="M280.45 176.18 L190.45 401.18" stroke="#f00000" fill="none" stroke-width="1.15" stroke-linecap="butt"/>
<path d="M259.55 167.82 L169.55 392.82" stroke="#f00000" fill="none" stroke-width="1.15" stroke-linecap="butt"/>
<path d="M249.11 163.64 L159.11 388.64" stroke="#f00000" fill="none" stroke-width="1.15" stroke-linecap="butt"/>
<path d="M238.66 159.47 L148.66 384.47" stroke="#f00000" fill="none" stroke-width="1.15" stroke-linecap="butt"/>
<path d="M405.00 172.00 L402.65 172.49 L400.32 173.01 L397.99 173.57 L395.67 174.17 L393.36 174.81 L391.07 175.49 L388.78 176.21 L386.51 176.96 L384.25 177.75 L382.00 178.58 L379.77 179.45 L377.55 180.35 L375.34 181.29 L373.16 182.27 L370.99 183.28 L368.83 184.33 L366.70 185.41 L364.58 186.53 L362.48 187.68 L360.40 188.87 L358.34 190.09 L356.30 191.35 L354.28 192.64 L352.29 193.96 L350.31 195.32 L348.36 196.71 L346.43 198.13 L344.53 199.58 L342.65 201.06 L340.79 202.58 L338.96 204.12 L337.16 205.70 L335.38 207.30 L333.63 208.94 L331.91 210.60 L330.21 212.29 L328.55 214.01 L326.91 215.76 L325.30 217.53 L323.72 219.33 L322.17 221.16 L320.65 223.01 L319.16 224.89 L317.70 226.79 L316.28 228.71 L314.89 230.66 L313.52 232.63 L312.20 234.63 L310.90 236.64 L309.64 238.68 L308.41 240.73 L307.22 242.81 L306.06 244.91 L304.94 247.02 L303.85 249.16 L302.80 251.31 L301.78 253.48 L300.80 255.66 L299.86 257.86 L298.95 260.08 L298.08 262.31 L297.24 264.56 L296.45 266.81 L295.69 269.09 L294.97 271.37 L294.28 273.67 L293.64 275.97 L293.03 278.29 L292.46 280.62 L291.93 282.95 L291.44 285.30 L290.99 287.65 L290.58 290.01 L290.20 292.37 L289.87 294.74 L289.57 297.12 L289.32 299.50 L289.10 301.89 L288.92 304.28 L288.79 306.67 L288.69 309.06 L288.63 311.45 L288.61 313.85 L288.63 316.24 L288.69 318.64 L288.80 321.03 L288.94 323.42 L289.12 325.81 L289.34 328.20 L289.59 330.58 L289.89 332.95 L290.23 335.32 L290.61 337.69 L291.02 340.05 L291.48 342.40 L291.97 344.74 L292.51 347.08 L293.08 349.40 L293.69 351.72 L294.34 354.03 L295.02 356.32 L295.75 358.60 L296.51 360.87 L297.31 363.13 L298.15 365.38 L299.02 367.61 L299.93 369.82 L300.88 372.02 L301.86 374.20 L302.88 376.37 L303.94 378.52 L305.03 380.65 L306.16 382.77 L307.32 384.86 L308.51 386.94 L309.74 388.99 L311.01 391.03 L312.31 393.04 L313.64 395.03 L315.00 397.00" stroke="#f4f4f4" fill="none" stroke-width="1.15" stroke-linecap="butt"/>
<path d="M407.19 183.03 L405.03 183.48 L402.87 183.97 L400.72 184.49 L398.59 185.04 L396.46 185.63 L394.34 186.26 L392.23 186.92 L390.14 187.61 L388.05 188.34 L385.98 189.10 L383.92 189.90 L381.87 190.74 L379.84 191.60 L377.83 192.50 L375.82 193.44 L373.84 194.40 L371.87 195.40 L369.92 196.43 L367.98 197.50 L366.06 198.59 L364.16 199.72 L362.28 200.88 L360.42 202.07 L358.58 203.29 L356.76 204.54 L354.96 205.82 L353.18 207.13 L351.43 208.47 L349.69 209.84 L347.98 211.23 L346.29 212.66 L344.63 214.11 L342.99 215.59 L341.38 217.10 L339.79 218.63 L338.22 220.19 L336.69 221.78 L335.18 223.39 L333.69 225.02 L332.24 226.68 L330.81 228.37 L329.41 230.08 L328.03 231.81 L326.69 233.56 L325.37 235.33 L324.09 237.13 L322.84 238.95 L321.61 240.79 L320.42 242.64 L319.25 244.52 L318.12 246.42 L317.02 248.33 L315.95 250.27 L314.92 252.22 L313.91 254.19 L312.94 256.17 L312.01 258.17 L311.10 260.18 L310.23 262.21 L309.39 264.26 L308.59 266.31 L307.82 268.39 L307.09 270.47 L306.39 272.56 L305.72 274.67 L305.09 276.79 L304.50 278.91 L303.94 281.05 L303.41 283.19 L302.92 285.35 L302.47 287.51 L302.05 289.68 L301.67 291.85 L301.33 294.04 L301.02 296.22 L300.75 298.42 L300.51 300.61 L300.31 302.81 L300.15 305.01 L300.02 307.22 L299.93 309.43 L299.88 311.63 L299.86 313.84 L299.88 316.05 L299.94 318.26 L300.03 320.46 L300.16 322.67 L300.33 324.87 L300.53 327.07 L300.77 329.27 L301.04 331.46 L301.36 333.65 L301.70 335.83 L302.09 338.00 L302.51 340.17 L302.96 342.33 L303.45 344.48 L303.98 346.63 L304.54 348.76 L305.14 350.89 L305.78 353.01 L306.44 355.11 L307.15 357.21 L307.88 359.29 L308.66 361.36 L309.46 363.41 L310.30 365.46 L311.18 367.48 L312.08 369.50 L313.02 371.50 L314.00 373.48 L315.00 375.44 L316.04 377.39 L317.11 379.33 L318.22 381.24 L319.35 383.13 L320.51 385.01 L321.71 386.87 L322.94 388.70 L324.20 390.52" stroke="#f00000" fill="none" stroke-width="1.15" stroke-linecap="butt"/>
<circle cx="517.50" cy="284.50" r="112.50" stroke="#f4f4f4" fill="none" stroke-width="1.15" stroke-linecap="butt"/>
<circle cx="517.50" cy="284.50" r="101.25" stroke="#f00000" fill="none" stroke-width="1.15" stroke-linecap="butt"/>
<path d="M756.00 284.50 L756.00 283.52 L755.99 282.54 L755.99 281.56 L755.98 280.57 L755.97 279.59 L755.95 278.61 L755.93 277.63 L755.91 276.65 L755.89 275.67 L755.86 274.69 L755.83 273.72 L755.80 272.74 L755.77 271.76 L755.73 270.79 L755.69 269.82 L755.65 268.84 L755.60 267.87 L755.56 266.90 L755.51 265.93 L755.45 264.96 L755.40 264.00 L755.34 263.03 L755.28 262.07 L755.21 261.11 L755.15 260.15 L755.08 259.19 L755.01 258.24 L754.93 257.28 L754.85 256.33 L754.77 255.38 L754.69 254.44 L754.61 253.49 L754.52 252.55 L754.43 251.61 L754.33 250.67 L754.24 249.74 L754.14 248.80 L754.04 247.87 L753.94 246.95 L753.83 246.02 L753.72 245.10 L753.61 244.18 L753.50 243.27 L753.38 242.36 L753.26 241.45 L753.14 240.54 L753.01 239.64 L752.89 238.74 L752.76 237.85 L752.63 236.96 L752.49 236.07 L752.36 235.18 L752.22 234.30 L752.08 233.43 L751.93 232.55 L751.79 231.68 L751.64 230.82 L751.49 229.96 L751.33 229.10 L751.18 228.25 L751.02 227.40 L750.86 226.56 L750.70 225.72 L750.53 224.88 L750.36 224.05 L750.19 223.23 L750.02 222.41 L749.85 221.59 L749.67 220.78 L749.49 219.97 L749.31 219.17 L749.12 218.37 L748.94 217.58 L748.75 216.80 L748.56 216.01 L748.37 215.24 L748.17 214.47 L747.98 213.70 L747.78 212.94 L747.58 212.19 L747.37 211.44 L747.17 210.69 L746.96 209.96 L746.75 209.22 L746.54 208.50 L746.33 207.78 L746.11 207.06 L745.90 206.35 L745.68 205.65 L745.46 204.95 L745.23 204.26 L745.01 203.57 L744.78 202.90 L744.55 202.22 L744.32 201.56 L744.09 200.90 L743.85 200.24 L743.62 199.60 L743.38 198.95 L743.14 198.32 L742.90 197.69 L742.66 197.07 L742.41 196.46 L742.16 195.85 L741.92 195.25 L741.67 194.65 L741.41 194.07 L741.16 193.49 L740.91 192.91 L740.65 192.35 L740.39 191.79 L740.13 191.23 L739.87 190.69 L739.61 190.15 L739.34 189.62 L739.08 189.09 L738.81 188.58 L738.54 188.07 L738.27 187.57 L738.00 187.07 L737.73 186.58 L737.45 186.11 L737.18 185.63 L736.90 185.17 L736.62 184.71 L736.34 184.26 L736.06 183.82 L735.78 183.39 L735.50 182.96 L735.21 182.54 L734.93 182.13 L734.64 181.73 L734.35 181.33 L734.07 180.94 L733.78 180.56 L733.49 180.19 L733.19 179.83 L732.90 179.47 L732.61 179.12 L732.31 178.78 L732.02 178.45 L731.72 178.13 L731.42 177.81 L731.12 177.51 L730.83 177.21 L730.53 176.92 L730.22 176.63 L729.92 176.36 L729.62 176.09 L729.32 175.83 L729.01 175.58 L728.71 175.34 L728.40 175.11 L728.10 174.88 L727.79 174.67 L727.48 174.46 L727.18 174.26 L726.87 174.07 L726.56 173.88 L726.25 173.71 L725.94 173.54 L725.63 173.39 L725.32 173.24 L725.01 173.09 L724.70 172.96 L724.39 172.84 L724.08 172.72 L723.76 172.62 L723.45 172.52 L723.14 172.43 L722.82 172.35 L722.51 172.27 L722.20 172.21 L721.88 172.15 L721.57 172.11 L721.26 172.07 L720.94 172.04 L720.63 172.02 L720.31 172.00 L720.00 172.00 L719.69 172.00 L719.37 172.02 L719.06 172.04 L718.74 172.07 L718.43 172.11 L718.12 172.15 L717.80 172.21 L717.49 172.27 L717.18 172.35 L716.86 172.43 L716.55 172.52 L716.24 172.62 L715.92 172.72 L715.61 172.84 L715.30 172.96 L714.99 173.09 L714.68 173.24 L714.37 173.39 L714.06 173.54 L713.75 173.71 L713.44 173.88 L713.13 174.07 L712.82 174.26 L712.52 174.46 L712.21 174.67 L711.90 174.88 L711.60 175.11 L711.29 175.34 L710.99 175.58 L710.68 175.83 L710.38 176.09 L710.08 176.36 L709.78 176.63 L709.47 176.92 L709.17 177.21 L708.88 177.51 L708.58 177.81 L708.28 178.13 L707.98 178.45 L707.69 178.78 L707.39 179.12 L707.10 179.47 L706.81 179.83 L706.51 180.19 L706.22 180.56 L705.93 180.94 L705.65 181.33 L705.36 181.73 L705.07 182.13 L704.79 182.54 L704.50 182.96 L704.22 183.39 L703.94 183.82 L703.66 184.26 L703.38 184.71 L703.10 185.17 L702.82 185.63 L702.55 186.11 L702.27 186.58 L702.00 187.07 L701.73 187.57 L701.46 188.07 L701.19 188.58 L700.92 189.09 L700.66 189.62 L700.39 190.15 L700.13 190.69 L699.87 191.23 L699.61 191.79 L699.35 192.35 L699.09 192.91 L698.84 193.49 L698.59 194.07 L698.33 194.65 L698.08 195.25 L697.84 195.85 L697.59 196.46 L697.34 197.07 L697.10 197.69 L696.86 198.32 L696.62 198.95 L696.38 199.60 L696.15 200.24 L695.91 200.90 L695.68 201.56 L695.45 202.22 L695.22 202.90 L694.99 203.57 L694.77 204.26 L694.54 204.95 L694.32 205.65 L694.10 206.35 L693.89 207.06 L693.67 207.78 L693.46 208.50 L693.25 209.22 L693.04 209.96 L692.83 210.69 L692.63 211.44 L692.42 212.19 L692.22 212.94 L692.02 213.70 L691.83 214.47 L691.63 215.24 L691.44 216.01 L691.25 216.80 L691.06 217.58 L690.88 218.37 L690.69 219.17 L690.51 219.97 L690.33 220.78 L690.15 221.59 L689.98 222.41 L689.81 223.23 L689.64 224.05 L689.47 224.88 L689.30 225.72 L689.14 226.56 L688.98 227.40 L688.82 228.25 L688.67 229.10 L688.51 229.96 L688.36 230.82 L688.21 231.68 L688.07 232.55 L687.92 233.43 L687.78 234.30 L687.64 235.18 L687.51 236.07 L687.37 236.96 L687.24 237.85 L687.11 238.74 L686.99 239.64 L686.86 240.54 L686.74 241.45 L686.62 242.36 L686.50 243.27 L686.39 244.18 L686.28 245.10 L686.17 246.02 L686.06 246.95 L685.96 247.87 L685.86 248.80 L685.76 249.74 L685.67 250.67 L685.57 251.61 L685.48 252.55 L685.39 253.49 L685.31 254.44 L685.23 255.38 L685.15 256.33 L685.07 257.28 L684.99 258.24 L684.92 259.19 L684.85 260.15 L684.79 261.11 L684.72 262.07 L684.66 263.03 L684.60 264.00 L684.55 264.96 L684.49 265.93 L684.44 266.90 L684.40 267.87 L684.35 268.84 L684.31 269.82 L684.27 270.79 L684.23 271.76 L684.20 272.74 L684.17 273.72 L684.14 274.69 L684.11 275.67 L684.09 276.65 L684.07 277.63 L684.05 278.61 L684.03 279.59 L684.02 280.57 L684.01 281.56 L684.01 282.54 L684.00 283.52 L684.00 284.50 L684.00 285.48 L684.01 286.46 L684.01 287.44 L684.02 288.43 L684.03 289.41 L684.05 290.39 L684.07 291.37 L684.09 292.35 L684.11 293.33 L684.14 294.31 L684.17 295.28 L684.20 296.26 L684.23 297.24 L684.27 298.21 L684.31 299.18 L684.35 300.16 L684.40 301.13 L684.44 302.10 L684.49 303.07 L684.55 304.04 L684.60 305.00 L684.66 305.97 L684.72 306.93 L684.79 307.89 L684.85 308.85 L684.92 309.81 L684.99 310.76 L685.07 311.72 L685.15 312.67 L685.23 313.62 L685.31 314.56 L685.39 315.51 L685.48 316.45 L685.57 317.39 L685.67 318.33 L685.76 319.26 L685.86 320.20 L685.96 321.13 L686.06 322.05 L686.17 322.98 L686.28 323.90 L686.39 324.82 L686.50 325.73 L686.62 326.64 L686.74 327.55 L686.86 328.46 L686.99 329.36 L687.11 330.26 L687.24 331.15 L687.37 332.04 L687.51 332.93 L687.64 333.82 L687.78 334.70 L687.92 335.57 L688.07 336.45 L688.21 337.32 L688.36 338.18 L688.51 339.04 L688.67 339.90 L688.82 340.75 L688.98 341.60 L689.14 342.44 L689.30 343.28 L689.47 344.12 L689.64 344.95 L689.81 345.77 L689.98 346.59 L690.15 347.41 L690.33 348.22 L690.51 349.03 L690.69 349.83 L690.88 350.63 L691.06 351.42 L691.25 352.20 L691.44 352.99 L691.63 353.76 L691.83 354.53 L692.02 355.30 L692.22 356.06 L692.42 356.81 L692.63 357.56 L692.83 358.31 L693.04 359.04 L693.25 359.78 L693.46 360.50 L693.67 361.22 L693.89 361.94 L694.10 362.65 L694.32 363.35 L694.54 364.05 L694.77 364.74 L694.99 365.43 L695.22 366.10 L695.45 366.78 L695.68 367.44 L695.91 368.10 L696.15 368.76 L696.38 369.40 L696.62 370.05 L696.86 370.68 L697.10 371.31 L697.34 371.93 L697.59 372.54 L697.84 373.15 L698.08 373.75 L698.33 374.35 L698.59 374.93 L698.84 375.51 L699.09 376.09 L699.35 376.65 L699.61 377.21 L699.87 377.77 L700.13 378.31 L700.39 378.85 L700.66 379.38 L700.92 379.91 L701.19 380.42 L701.46 380.93 L701.73 381.43 L702.00 381.93 L702.27 382.42 L702.55 382.89 L702.82 383.37 L703.10 383.83 L703.38 384.29 L703.66 384.74 L703.94 385.18 L704.22 385.61 L704.50 386.04 L704.79 386.46 L705.07 386.87 L705.36 387.27 L705.65 387.67 L705.93 388.06 L706.22 388.44 L706.51 388.81 L706.81 389.17 L707.10 389.53 L707.39 389.88 L707.69 390.22 L707.98 390.55 L708.28 390.87 L708.58 391.19 L708.88 391.49 L709.17 391.79 L709.47 392.08 L709.78 392.37 L710.08 392.64 L710.38 392.91 L710.68 393.17 L710.99 393.42 L711.29 393.66 L711.60 393.89 L711.90 394.12 L712.21 394.33 L712.52 394.54 L712.82 394.74 L713.13 394.93 L713.44 395.12 L713.75 395.29 L714.06 395.46 L714.37 395.61 L714.68 395.76 L714.99 395.91 L715.30 396.04 L715.61 396.16 L715.92 396.28 L716.24 396.38 L716.55 396.48 L716.86 396.57 L717.18 396.65 L717.49 396.73 L717.80 396.79 L718.12 396.85 L718.43 396.89 L718.74 396.93 L719.06 396.96 L719.37 396.98 L719.69 397.00 L720.00 397.00 L720.31 397.00 L720.63 396.98 L720.94 396.96 L721.26 396.93 L721.57 396.89 L721.88 396.85 L722.20 396.79 L722.51 396.73 L722.82 396.65 L723.14 396.57 L723.45 396.48 L723.76 396.38 L724.08 396.28 L724.39 396.16 L724.70 396.04 L725.01 395.91 L725.32 395.76 L725.63 395.61 L725.94 395.46 L726.25 395.29 L726.56 395.12 L726.87 394.93 L727.18 394.74 L727.48 394.54 L727.79 394.33 L728.10 394.12 L728.40 393.89 L728.71 393.66 L729.01 393.42 L729.32 393.17 L729.62 392.91 L729.92 392.64 L730.22 392.37 L730.53 392.08 L730.83 391.79 L731.12 391.49 L731.42 391.19 L731.72 390.87 L732.02 390.55 L732.31 390.22 L732.61 389.88 L732.90 389.53 L733.19 389.17 L733.49 388.81 L733.78 388.44 L734.07 388.06 L734.35 387.67 L734.64 387.27 L734.93 386.87 L735.21 386.46 L735.50 386.04 L735.78 385.61 L736.06 385.18 L736.34 384.74 L736.62 384.29 L736.90 383.83 L737.18 383.37 L737.45 382.89 L737.73 382.42 L738.00 381.93 L738.27 381.43 L738.54 380.93 L738.81 380.42 L739.08 379.91 L739.34 379.38 L739.61 378.85 L739.87 378.31 L740.13 377.77 L740.39 377.21 L740.65 376.65 L740.91 376.09 L741.16 375.51 L741.41 374.93 L741.67 374.35 L741.92 373.75 L742.16 373.15 L742.41 372.54 L742.66 371.93 L742.90 371.31 L743.14 370.68 L743.38 370.05 L743.62 369.40 L743.85 368.76 L744.09 368.10 L744.32 367.44 L744.55 366.78 L744.78 366.10 L745.01 365.43 L745.23 364.74 L745.46 364.05 L745.68 363.35 L745.90 362.65 L746.11 361.94 L746.33 361.22 L746.54 360.50 L746.75 359.78 L746.96 359.04 L747.17 358.31 L747.37 357.56 L747.58 356.81 L747.78 356.06 L747.98 355.30 L748.17 354.53 L748.37 353.76 L748.56 352.99 L748.75 352.20 L748.94 351.42 L749.12 350.63 L749.31 349.83 L749.49 349.03 L749.67 348.22 L749.85 347.41 L750.02 346.59 L750.19 345.77 L750.36 344.95 L750.53 344.12 L750.70 343.28 L750.86 342.44 L751.02 341.60 L751.18 340.75 L751.33 339.90 L751.49 339.04 L751.64 338.18 L751.79 337.32 L751.93 336.45 L752.08 335.57 L752.22 334.70 L752.36 333.82 L752.49 332.93 L752.63 332.04 L752.76 331.15 L752.89 330.26 L753.01 329.36 L753.14 328.46 L753.26 327.55 L753.38 326.64 L753.50 325.73 L753.61 324.82 L753.72 323.90 L753.83 322.98 L753.94 322.05 L754.04 321.13 L754.14 320.20 L754.24 319.26 L754.33 318.33 L754.43 317.39 L754.52 316.45 L754.61 315.51 L754.69 314.56 L754.77 313.62 L754.85 312.67 L754.93 311.72 L755.01 310.76 L755.08 309.81 L755.15 308.85 L755.21 307.89 L755.28 306.93 L755.34 305.97 L755.40 305.00 L755.45 304.04 L755.51 303.07 L755.56 302.10 L755.60 301.13 L755.65 300.16 L755.69 299.18 L755.73 298.21 L755.77 297.24 L755.80 296.26 L755.83 295.28 L755.86 294.31 L755.89 293.33 L755.91 292.35 L755.93 291.37 L755.95 290.39 L755.97 289.41 L755.98 288.43 L755.99 287.44 L755.99 286.46 L756.00 285.48 Z" stroke="#f4f4f4" fill="none" stroke-width="1.15" stroke-linecap="butt"/>
<path d="M744.75 284.50 L744.75 283.55 L744.74 282.60 L744.74 281.65 L744.73 280.70 L744.72 279.75 L744.70 278.80 L744.69 277.85 L744.67 276.90 L744.64 275.96 L744.62 275.01 L744.59 274.06 L744.56 273.12 L744.53 272.17 L744.49 271.23 L744.45 270.29 L744.41 269.35 L744.37 268.41 L744.32 267.47 L744.27 266.53 L744.22 265.60 L744.17 264.66 L744.11 263.73 L744.05 262.80 L743.99 261.87 L743.92 260.95 L743.86 260.02 L743.79 259.10 L743.72 258.18 L743.64 257.26 L743.56 256.34 L743.48 255.43 L743.40 254.52 L743.32 253.61 L743.23 252.70 L743.14 251.80 L743.05 250.90 L742.95 250.00 L742.86 249.11 L742.76 248.21 L742.65 247.32 L742.55 246.44 L742.44 245.56 L742.33 244.68 L742.22 243.80 L742.11 242.93 L741.99 242.06 L741.87 241.19 L741.75 240.33 L741.63 239.47 L741.50 238.62 L741.37 237.76 L741.24 236.92 L741.11 236.08 L740.97 235.24 L740.84 234.40 L740.70 233.57 L740.55 232.75 L740.41 231.92 L740.26 231.11 L740.11 230.29 L739.96 229.49 L739.81 228.68 L739.66 227.88 L739.50 227.09 L739.34 226.30 L739.18 225.52 L739.01 224.74 L738.85 223.96 L738.68 223.20 L738.51 222.43 L738.34 221.67 L738.17 220.92 L737.99 220.17 L737.81 219.43 L737.64 218.70 L737.45 217.97 L737.27 217.24 L737.09 216.52 L736.90 215.81 L736.71 215.10 L736.52 214.40 L736.33 213.71 L736.14 213.02 L735.94 212.34 L735.75 211.66 L735.55 210.99 L735.35 210.33 L735.15 209.67 L734.95 209.02 L734.74 208.38 L734.54 207.74 L734.33 207.11 L734.12 206.49 L733.91 205.87 L733.70 205.27 L733.49 204.66 L733.28 204.07 L733.06 203.48 L732.85 202.90 L732.63 202.33 L732.41 201.76 L732.19 201.21 L731.97 200.66 L731.75 200.11 L731.53 199.58 L731.31 199.05 L731.09 198.53 L730.86 198.02 L730.64 197.52 L730.42 197.02 L730.19 196.53 L729.97 196.06 L729.74 195.58 L729.52 195.12 L729.29 194.67 L729.06 194.22 L728.84 193.79 L728.61 193.36 L728.39 192.94 L728.16 192.53 L727.94 192.12 L727.71 191.73 L727.49 191.35 L727.26 190.97 L727.04 190.60 L726.82 190.25 L726.60 189.90 L726.38 189.56 L726.16 189.23 L725.94 188.91 L725.72 188.59 L725.51 188.29 L725.29 188.00 L725.08 187.72 L724.87 187.44 L724.67 187.18 L724.46 186.92 L724.26 186.68 L724.06 186.44 L723.86 186.21 L723.67 186.00 L723.48 185.79 L723.29 185.59 L723.11 185.40 L722.93 185.22 L722.75 185.05 L722.58 184.89 L722.42 184.74 L722.25 184.59 L722.10 184.46 L721.94 184.33 L721.79 184.22 L721.65 184.11 L721.52 184.01 L721.39 183.91 L721.26 183.83 L721.14 183.75 L721.03 183.68 L720.92 183.62 L720.82 183.56 L720.73 183.51 L720.64 183.47 L720.56 183.43 L720.49 183.40 L720.42 183.37 L720.36 183.34 L720.30 183.32 L720.25 183.30 L720.21 183.29 L720.17 183.28 L720.14 183.27 L720.11 183.26 L720.09 183.26 L720.07 183.26 L720.05 183.25 L720.04 183.25 L720.02 183.25 L720.02 183.25 L720.01 183.25 L720.00 183.25 L719.99 183.25 L719.98 183.25 L719.98 183.25 L719.96 183.25 L719.95 183.25 L719.93 183.26 L719.91 183.26 L719.89 183.26 L719.86 183.27 L719.83 183.28 L719.79 183.29 L719.75 183.30 L719.70 183.32 L719.64 183.34 L719.58 183.37 L719.51 183.40 L719.44 183.43 L719.36 183.47 L719.27 183.51 L719.18 183.56 L719.08 183.62 L718.97 183.68 L718.86 183.75 L718.74 183.83 L718.61 183.91 L718.48 184.01 L718.35 184.11 L718.21 184.22 L718.06 184.33 L717.90 184.46 L717.75 184.59 L717.58 184.74 L717.42 184.89 L717.25 185.05 L717.07 185.22 L716.89 185.40 L716.71 185.59 L716.52 185.79 L716.33 186.00 L716.14 186.21 L715.94 186.44 L715.74 186.68 L715.54 186.92 L715.33 187.18 L715.13 187.44 L714.92 187.72 L714.71 188.00 L714.49 188.29 L714.28 188.59 L714.06 188.91 L713.84 189.23 L713.62 189.56 L713.40 189.90 L713.18 190.25 L712.96 190.60 L712.74 190.97 L712.51 191.35 L712.29 191.73 L712.06 192.12 L711.84 192.53 L711.61 192.94 L711.39 193.36 L711.16 193.79 L710.94 194.22 L710.71 194.67 L710.48 195.12 L710.26 195.58 L710.03 196.06 L709.81 196.53 L709.58 197.02 L709.36 197.52 L709.14 198.02 L708.91 198.53 L708.69 199.05 L708.47 199.58 L708.25 200.11 L708.03 200.66 L707.81 201.21 L707.59 201.76 L707.37 202.33 L707.15 202.90 L706.94 203.48 L706.72 204.07 L706.51 204.66 L706.30 205.27 L706.09 205.87 L705.88 206.49 L705.67 207.11 L705.46 207.74 L705.26 208.38 L705.05 209.02 L704.85 209.67 L704.65 210.33 L704.45 210.99 L704.25 211.66 L704.06 212.34 L703.86 213.02 L703.67 213.71 L703.48 214.40 L703.29 215.10 L703.10 215.81 L702.91 216.52 L702.73 217.24 L702.55 217.97 L702.36 218.70 L702.19 219.43 L702.01 220.17 L701.83 220.92 L701.66 221.67 L701.49 222.43 L701.32 223.20 L701.15 223.96 L700.99 224.74 L700.82 225.52 L700.66 226.30 L700.50 227.09 L700.34 227.88 L700.19 228.68 L700.04 229.49 L699.89 230.29 L699.74 231.11 L699.59 231.92 L699.45 232.75 L699.30 233.57 L699.16 234.40 L699.03 235.24 L698.89 236.08 L698.76 236.92 L698.63 237.76 L698.50 238.62 L698.37 239.47 L698.25 240.33 L698.13 241.19 L698.01 242.06 L697.89 242.93 L697.78 243.80 L697.67 244.68 L697.56 245.56 L697.45 246.44 L697.35 247.32 L697.24 248.21 L697.14 249.11 L697.05 250.00 L696.95 250.90 L696.86 251.80 L696.77 252.70 L696.68 253.61 L696.60 254.52 L696.52 255.43 L696.44 256.34 L696.36 257.26 L696.28 258.18 L696.21 259.10 L696.14 260.02 L696.08 260.95 L696.01 261.87 L695.95 262.80 L695.89 263.73 L695.83 264.66 L695.78 265.60 L695.73 266.53 L695.68 267.47 L695.63 268.41 L695.59 269.35 L695.55 270.29 L695.51 271.23 L695.47 272.17 L695.44 273.12 L695.41 274.06 L695.38 275.01 L695.36 275.96 L695.33 276.90 L695.31 277.85 L695.30 278.80 L695.28 279.75 L695.27 280.70 L695.26 281.65 L695.26 282.60 L695.25 283.55 L695.25 284.50 L695.25 285.45 L695.26 286.40 L695.26 287.35 L695.27 288.30 L695.28 289.25 L695.30 290.20 L695.31 291.15 L695.33 292.10 L695.36 293.04 L695.38 293.99 L695.41 294.94 L695.44 295.88 L695.47 296.83 L695.51 297.77 L695.55 298.71 L695.59 299.65 L695.63 300.59 L695.68 301.53 L695.73 302.47 L695.78 303.40 L695.83 304.34 L695.89 305.27 L695.95 306.20 L696.01 307.13 L696.08 308.05 L696.14 308.98 L696.21 309.90 L696.28 310.82 L696.36 311.74 L696.44 312.66 L696.52 313.57 L696.60 314.48 L696.68 315.39 L696.77 316.30 L696.86 317.20 L696.95 318.10 L697.05 319.00 L697.14 319.89 L697.24 320.79 L697.35 321.68 L697.45 322.56 L697.56 323.44 L697.67 324.32 L697.78 325.20 L697.89 326.07 L698.01 326.94 L698.13 327.81 L698.25 328.67 L698.37 329.53 L698.50 330.38 L698.63 331.24 L698.76 332.08 L698.89 332.92 L699.03 333.76 L699.16 334.60 L699.30 335.43 L699.45 336.25 L699.59 337.08 L699.74 337.89 L699.89 338.71 L700.04 339.51 L700.19 340.32 L700.34 341.12 L700.50 341.91 L700.66 342.70 L700.82 343.48 L700.99 344.26 L701.15 345.04 L701.32 345.80 L701.49 346.57 L701.66 347.33 L701.83 348.08 L702.01 348.83 L702.19 349.57 L702.36 350.30 L702.55 351.03 L702.73 351.76 L702.91 352.48 L703.10 353.19 L703.29 353.90 L703.48 354.60 L703.67 355.29 L703.86 355.98 L704.06 356.66 L704.25 357.34 L704.45 358.01 L704.65 358.67 L704.85 359.33 L705.05 359.98 L705.26 360.62 L705.46 361.26 L705.67 361.89 L705.88 362.51 L706.09 363.13 L706.30 363.73 L706.51 364.34 L706.72 364.93 L706.94 365.52 L707.15 366.10 L707.37 366.67 L707.59 367.24 L707.81 367.79 L708.03 368.34 L708.25 368.89 L708.47 369.42 L708.69 369.95 L708.91 370.47 L709.14 370.98 L709.36 371.48 L709.58 371.98 L709.81 372.47 L710.03 372.94 L710.26 373.42 L710.48 373.88 L710.71 374.33 L710.94 374.78 L711.16 375.21 L711.39 375.64 L711.61 376.06 L711.84 376.47 L712.06 376.88 L712.29 377.27 L712.51 377.65 L712.74 378.03 L712.96 378.40 L713.18 378.75 L713.40 379.10 L713.62 379.44 L713.84 379.77 L714.06 380.09 L714.28 380.41 L714.49 380.71 L714.71 381.00 L714.92 381.28 L715.13 381.56 L715.33 381.82 L715.54 382.08 L715.74 382.32 L715.94 382.56 L716.14 382.79 L716.33 383.00 L716.52 383.21 L716.71 383.41 L716.89 383.60 L717.07 383.78 L717.25 383.95 L717.42 384.11 L717.58 384.26 L717.75 384.41 L717.90 384.54 L718.06 384.67 L718.21 384.78 L718.35 384.89 L718.48 384.99 L718.61 385.09 L718.74 385.17 L718.86 385.25 L718.97 385.32 L719.08 385.38 L719.18 385.44 L719.27 385.49 L719.36 385.53 L719.44 385.57 L719.51 385.60 L719.58 385.63 L719.64 385.66 L719.70 385.68 L719.75 385.70 L719.79 385.71 L719.83 385.72 L719.86 385.73 L719.89 385.74 L719.91 385.74 L719.93 385.74 L719.95 385.75 L719.96 385.75 L719.98 385.75 L719.98 385.75 L719.99 385.75 L720.00 385.75 L720.01 385.75 L720.02 385.75 L720.02 385.75 L720.04 385.75 L720.05 385.75 L720.07 385.74 L720.09 385.74 L720.11 385.74 L720.14 385.73 L720.17 385.72 L720.21 385.71 L720.25 385.70 L720.30 385.68 L720.36 385.66 L720.42 385.63 L720.49 385.60 L720.56 385.57 L720.64 385.53 L720.73 385.49 L720.82 385.44 L720.92 385.38 L721.03 385.32 L721.14 385.25 L721.26 385.17 L721.39 385.09 L721.52 384.99 L721.65 384.89 L721.79 384.78 L721.94 384.67 L722.10 384.54 L722.25 384.41 L722.42 384.26 L722.58 384.11 L722.75 383.95 L722.93 383.78 L723.11 383.60 L723.29 383.41 L723.48 383.21 L723.67 383.00 L723.86 382.79 L724.06 382.56 L724.26 382.32 L724.46 382.08 L724.67 381.82 L724.87 381.56 L725.08 381.28 L725.29 381.00 L725.51 380.71 L725.72 380.41 L725.94 380.09 L726.16 379.77 L726.38 379.44 L726.60 379.10 L726.82 378.75 L727.04 378.40 L727.26 378.03 L727.49 377.65 L727.71 377.27 L727.94 376.88 L728.16 376.47 L728.39 376.06 L728.61 375.64 L728.84 375.21 L729.06 374.78 L729.29 374.33 L729.52 373.88 L729.74 373.42 L729.97 372.94 L730.19 372.47 L730.42 371.98 L730.64 371.48 L730.86 370.98 L731.09 370.47 L731.31 369.95 L731.53 369.42 L731.75 368.89 L731.97 368.34 L732.19 367.79 L732.41 367.24 L732.63 366.67 L732.85 366.10 L733.06 365.52 L733.28 364.93 L733.49 364.34 L733.70 363.73 L733.91 363.13 L734.12 362.51 L734.33 361.89 L734.54 361.26 L734.74 360.62 L734.95 359.98 L735.15 359.33 L735.35 358.67 L735.55 358.01 L735.75 357.34 L735.94 356.66 L736.14 355.98 L736.33 355.29 L736.52 354.60 L736.71 353.90 L736.90 353.19 L737.09 352.48 L737.27 351.76 L737.45 351.03 L737.64 350.30 L737.81 349.57 L737.99 348.83 L738.17 348.08 L738.34 347.33 L738.51 346.57 L738.68 345.80 L738.85 345.04 L739.01 344.26 L739.18 343.48 L739.34 342.70 L739.50 341.91 L739.66 341.12 L739.81 340.32 L739.96 339.51 L740.11 338.71 L740.26 337.89 L740.41 337.08 L740.55 336.25 L740.70 335.43 L740.84 334.60 L740.97 333.76 L741.11 332.92 L741.24 332.08 L741.37 331.24 L741.50 330.38 L741.63 329.53 L741.75 328.67 L741.87 327.81 L741.99 326.94 L742.11 326.07 L742.22 325.20 L742.33 324.32 L742.44 323.44 L742.55 322.56 L742.65 321.68 L742.76 320.79 L742.86 319.89 L742.95 319.00 L743.05 318.10 L743.14 317.20 L743.23 316.30 L743.32 315.39 L743.40 314.48 L743.48 313.57 L743.56 312.66 L743.64 311.74 L743.72 310.82 L743.79 309.90 L743.86 308.98 L743.92 308.05 L743.99 307.13 L744.05 306.20 L744.11 305.27 L744.17 304.34 L744.22 303.40 L744.27 302.47 L744.32 301.53 L744.37 300.59 L744.41 299.65 L744.45 298.71 L744.49 297.77 L744.53 296.83 L744.56 295.88 L744.59 294.94 L744.62 293.99 L744.64 293.04 L744.67 292.10 L744.69 291.15 L744.70 290.20 L744.72 289.25 L744.73 288.30 L744.74 287.35 L744.74 286.40 L744.75 285.45 Z" stroke="#f00000" fill="none" stroke-width="1.15" stroke-linecap="butt" stroke-linejoin="bevel"/>
<path d="M801.00 284.50 L801.00 283.39 L800.99 282.29 L800.99 281.18 L800.98 280.07 L800.96 278.96 L800.94 277.86 L800.92 276.75 L800.90 275.65 L800.87 274.54 L800.85 273.44 L800.81 272.33 L800.78 271.23 L800.74 270.13 L800.70 269.02 L800.65 267.92 L800.60 266.82 L800.55 265.72 L800.50 264.62 L800.44 263.53 L800.38 262.43 L800.32 261.33 L800.25 260.24 L800.18 259.15 L800.11 258.06 L800.03 256.97 L799.96 255.88 L799.87 254.79 L799.79 253.70 L799.70 252.62 L799.61 251.54 L799.51 250.46 L799.42 249.38 L799.32 248.30 L799.21 247.23 L799.11 246.15 L799.00 245.08 L798.88 244.01 L798.77 242.95 L798.65 241.88 L798.53 240.82 L798.40 239.76 L798.27 238.70 L798.14 237.64 L798.01 236.59 L797.87 235.54 L797.73 234.49 L797.58 233.44 L797.44 232.39 L797.29 231.35 L797.13 230.31 L796.98 229.28 L796.82 228.24 L796.66 227.21 L796.49 226.18 L796.32 225.16 L796.15 224.14 L795.97 223.12 L795.79 222.10 L795.61 221.09 L795.43 220.07 L795.24 219.07 L795.05 218.06 L794.85 217.06 L794.66 216.06 L794.46 215.06 L794.25 214.07 L794.04 213.08 L793.83 212.10 L793.62 211.11 L793.40 210.13 L793.18 209.16 L792.96 208.18 L792.73 207.21 L792.50 206.25 L792.26 205.28 L792.02 204.32 L791.78 203.37 L791.54 202.41 L791.29 201.46 L791.04 200.52 L790.78 199.57 L790.52 198.63 L790.26 197.70 L789.99 196.76 L789.72 195.83 L789.45 194.91 L789.17 193.98 L788.89 193.06 L788.60 192.15 L788.31 191.24 L788.02 190.33 L787.72 189.42 L787.42 188.52 L787.12 187.62 L786.81 186.72 L786.49 185.83 L786.17 184.94 L785.85 184.05 L785.52 183.17 L785.19 182.29 L784.85 181.41 L784.51 180.53 L784.16 179.66 L783.81 178.79 L783.45 177.93 L783.09 177.06 L782.72 176.20 L782.34 175.35 L781.96 174.49 L781.58 173.64 L781.19 172.79 L780.79 171.94 L780.38 171.10 L779.97 170.26 L779.55 169.42 L779.13 168.58 L778.70 167.75 L778.26 166.92 L777.81 166.09 L777.36 165.26 L776.90 164.43 L776.43 163.61 L775.95 162.78 L775.46 161.96 L774.96 161.15 L774.45 160.33 L773.93 159.51 L773.41 158.70 L772.87 157.89 L772.32 157.08 L771.76 156.27 L771.18 155.46 L770.60 154.66 L770.00 153.85 L769.39 153.05 L768.76 152.25 L768.12 151.45 L767.47 150.66 L766.80 149.86 L766.11 149.07 L765.40 148.28 L764.68 147.50 L763.94 146.71 L763.19 145.93 L762.41 145.15 L761.61 144.38 L760.79 143.61 L759.95 142.84 L759.09 142.09 L758.21 141.33 L757.30 140.58 L756.37 139.84 L755.41 139.11 L754.43 138.39 L753.42 137.68 L752.38 136.97 L751.32 136.28 L750.23 135.61 L749.11 134.94 L747.97 134.30 L746.79 133.67 L745.59 133.05 L744.36 132.46 L743.11 131.89 L741.82 131.35 L740.51 130.83 L739.17 130.33 L737.81 129.86 L736.42 129.43 L735.01 129.02 L733.57 128.65 L732.12 128.31 L730.65 128.01 L729.16 127.75 L727.65 127.52 L726.14 127.33 L724.61 127.19 L723.08 127.08 L721.54 127.02 L720.00 127.00 L718.46 127.02 L716.92 127.08 L715.39 127.19 L713.86 127.33 L712.35 127.52 L710.84 127.75 L709.35 128.01 L707.88 128.31 L706.43 128.65 L704.99 129.02 L703.58 129.43 L702.19 129.86 L700.83 130.33 L699.49 130.83 L698.18 131.35 L696.89 131.89 L695.64 132.46 L694.41 133.05 L693.21 133.67 L692.03 134.30 L690.89 134.94 L689.77 135.61 L688.68 136.28 L687.62 136.97 L686.58 137.68 L685.57 138.39 L684.59 139.11 L683.63 139.84 L682.70 140.58 L681.79 141.33 L680.91 142.09 L680.05 142.84 L679.21 143.61 L678.39 144.38 L677.59 145.15 L676.81 145.93 L676.06 146.71 L675.32 147.50 L674.60 148.28 L673.89 149.07 L673.20 149.86 L672.53 150.66 L671.88 151.45 L671.24 152.25 L670.61 153.05 L670.00 153.85 L669.40 154.66 L668.82 155.46 L668.24 156.27 L667.68 157.08 L667.13 157.89 L666.59 158.70 L666.07 159.51 L665.55 160.33 L665.04 161.15 L664.54 161.96 L664.05 162.78 L663.57 163.61 L663.10 164.43 L662.64 165.26 L662.19 166.09 L661.74 166.92 L661.30 167.75 L660.87 168.58 L660.45 169.42 L660.03 170.26 L659.62 171.10 L659.21 171.94 L658.81 172.79 L658.42 173.64 L658.04 174.49 L657.66 175.35 L657.28 176.20 L656.91 177.06 L656.55 177.93 L656.19 178.79 L655.84 179.66 L655.49 180.53 L655.15 181.41 L654.81 182.29 L654.48 183.17 L654.15 184.05 L653.83 184.94 L653.51 185.83 L653.19 186.72 L652.88 187.62 L652.58 188.52 L652.28 189.42 L651.98 190.33 L651.69 191.24 L651.40 192.15 L651.11 193.06 L650.83 193.98 L650.55 194.91 L650.28 195.83 L650.01 196.76 L649.74 197.70 L649.48 198.63 L649.22 199.57 L648.96 200.52 L648.71 201.46 L648.46 202.41 L648.22 203.37 L647.98 204.32 L647.74 205.28 L647.50 206.25 L647.27 207.21 L647.04 208.18 L646.82 209.16 L646.60 210.13 L646.38 211.11 L646.17 212.10 L645.96 213.08 L645.75 214.07 L645.54 215.06 L645.34 216.06 L645.15 217.06 L644.95 218.06 L644.76 219.07 L644.57 220.07 L644.39 221.09 L644.21 222.10 L644.03 223.12 L643.85 224.14 L643.68 225.16 L643.51 226.18 L643.34 227.21 L643.18 228.24 L643.02 229.28 L642.87 230.31 L642.71 231.35 L642.56 232.39 L642.42 233.44 L642.27 234.49 L642.13 235.54 L641.99 236.59 L641.86 237.64 L641.73 238.70 L641.60 239.76 L641.47 240.82 L641.35 241.88 L641.23 242.95 L641.12 244.01 L641.00 245.08 L640.89 246.15 L640.79 247.23 L640.68 248.30 L640.58 249.38 L640.49 250.46 L640.39 251.54 L640.30 252.62 L640.21 253.70 L640.13 254.79 L640.04 255.88 L639.97 256.97 L639.89 258.06 L639.82 259.15 L639.75 260.24 L639.68 261.33 L639.62 262.43 L639.56 263.53 L639.50 264.62 L639.45 265.72 L639.40 266.82 L639.35 267.92 L639.30 269.02 L639.26 270.13 L639.22 271.23 L639.19 272.33 L639.15 273.44 L639.13 274.54 L639.10 275.65 L639.08 276.75 L639.06 277.86 L639.04 278.96 L639.02 280.07 L639.01 281.18 L639.01 282.29 L639.00 283.39 L639.00 284.50 L639.00 285.61 L639.01 286.71 L639.01 287.82 L639.02 288.93 L639.04 290.04 L639.06 291.14 L639.08 292.25 L639.10 293.35 L639.13 294.46 L639.15 295.56 L639.19 296.67 L639.22 297.77 L639.26 298.87 L639.30 299.98 L639.35 301.08 L639.40 302.18 L639.45 303.28 L639.50 304.38 L639.56 305.47 L639.62 306.57 L639.68 307.67 L639.75 308.76 L639.82 309.85 L639.89 310.94 L639.97 312.03 L640.04 313.12 L640.13 314.21 L640.21 315.30 L640.30 316.38 L640.39 317.46 L640.49 318.54 L640.58 319.62 L640.68 320.70 L640.79 321.77 L640.89 322.85 L641.00 323.92 L641.12 324.99 L641.23 326.05 L641.35 327.12 L641.47 328.18 L641.60 329.24 L641.73 330.30 L641.86 331.36 L641.99 332.41 L642.13 333.46 L642.27 334.51 L642.42 335.56 L642.56 336.61 L642.71 337.65 L642.87 338.69 L643.02 339.72 L643.18 340.76 L643.34 341.79 L643.51 342.82 L643.68 343.84 L643.85 344.86 L644.03 345.88 L644.21 346.90 L644.39 347.91 L644.57 348.93 L644.76 349.93 L644.95 350.94 L645.15 351.94 L645.34 352.94 L645.54 353.94 L645.75 354.93 L645.96 355.92 L646.17 356.90 L646.38 357.89 L646.60 358.87 L646.82 359.84 L647.04 360.82 L647.27 361.79 L647.50 362.75 L647.74 363.72 L647.98 364.68 L648.22 365.63 L648.46 366.59 L648.71 367.54 L648.96 368.48 L649.22 369.43 L649.48 370.37 L649.74 371.30 L650.01 372.24 L650.28 373.17 L650.55 374.09 L650.83 375.02 L651.11 375.94 L651.40 376.85 L651.69 377.76 L651.98 378.67 L652.28 379.58 L652.58 380.48 L652.88 381.38 L653.19 382.28 L653.51 383.17 L653.83 384.06 L654.15 384.95 L654.48 385.83 L654.81 386.71 L655.15 387.59 L655.49 388.47 L655.84 389.34 L656.19 390.21 L656.55 391.07 L656.91 391.94 L657.28 392.80 L657.66 393.65 L658.04 394.51 L658.42 395.36 L658.81 396.21 L659.21 397.06 L659.62 397.90 L660.03 398.74 L660.45 399.58 L660.87 400.42 L661.30 401.25 L661.74 402.08 L662.19 402.91 L662.64 403.74 L663.10 404.57 L663.57 405.39 L664.05 406.22 L664.54 407.04 L665.04 407.85 L665.55 408.67 L666.07 409.49 L666.59 410.30 L667.13 411.11 L667.68 411.92 L668.24 412.73 L668.82 413.54 L669.40 414.34 L670.00 415.15 L670.61 415.95 L671.24 416.75 L671.88 417.55 L672.53 418.34 L673.20 419.14 L673.89 419.93 L674.60 420.72 L675.32 421.50 L676.06 422.29 L676.81 423.07 L677.59 423.85 L678.39 424.62 L679.21 425.39 L680.05 426.16 L680.91 426.91 L681.79 427.67 L682.70 428.42 L683.63 429.16 L684.59 429.89 L685.57 430.61 L686.58 431.32 L687.62 432.03 L688.68 432.72 L689.77 433.39 L690.89 434.06 L692.03 434.70 L693.21 435.33 L694.41 435.95 L695.64 436.54 L696.89 437.11 L698.18 437.65 L699.49 438.17 L700.83 438.67 L702.19 439.14 L703.58 439.57 L704.99 439.98 L706.43 440.35 L707.88 440.69 L709.35 440.99 L710.84 441.25 L712.35 441.48 L713.86 441.67 L715.39 441.81 L716.92 441.92 L718.46 441.98 L720.00 442.00 L721.54 441.98 L723.08 441.92 L724.61 441.81 L726.14 441.67 L727.65 441.48 L729.16 441.25 L730.65 440.99 L732.12 440.69 L733.57 440.35 L735.01 439.98 L736.42 439.57 L737.81 439.14 L739.17 438.67 L740.51 438.17 L741.82 437.65 L743.11 437.11 L744.36 436.54 L745.59 435.95 L746.79 435.33 L747.97 434.70 L749.11 434.06 L750.23 433.39 L751.32 432.72 L752.38 432.03 L753.42 431.32 L754.43 430.61 L755.41 429.89 L756.37 429.16 L757.30 428.42 L758.21 427.67 L759.09 426.91 L759.95 426.16 L760.79 425.39 L761.61 424.62 L762.41 423.85 L763.19 423.07 L763.94 422.29 L764.68 421.50 L765.40 420.72 L766.11 419.93 L766.80 419.14 L767.47 418.34 L768.12 417.55 L768.76 416.75 L769.39 415.95 L770.00 415.15 L770.60 414.34 L771.18 413.54 L771.76 412.73 L772.32 411.92 L772.87 411.11 L773.41 410.30 L773.93 409.49 L774.45 408.67 L774.96 407.85 L775.46 407.04 L775.95 406.22 L776.43 405.39 L776.90 404.57 L777.36 403.74 L777.81 402.91 L778.26 402.08 L778.70 401.25 L779.13 400.42 L779.55 399.58 L779.97 398.74 L780.38 397.90 L780.79 397.06 L781.19 396.21 L781.58 395.36 L781.96 394.51 L782.34 393.65 L782.72 392.80 L783.09 391.94 L783.45 391.07 L783.81 390.21 L784.16 389.34 L784.51 388.47 L784.85 387.59 L785.19 386.71 L785.52 385.83 L785.85 384.95 L786.17 384.06 L786.49 383.17 L786.81 382.28 L787.12 381.38 L787.42 380.48 L787.72 379.58 L788.02 378.67 L788.31 377.76 L788.60 376.85 L788.89 375.94 L789.17 375.02 L789.45 374.09 L789.72 373.17 L789.99 372.24 L790.26 371.30 L790.52 370.37 L790.78 369.43 L791.04 368.48 L791.29 367.54 L791.54 366.59 L791.78 365.63 L792.02 364.68 L792.26 363.72 L792.50 362.75 L792.73 361.79 L792.96 360.82 L793.18 359.84 L793.40 358.87 L793.62 357.89 L793.83 356.90 L794.04 355.92 L794.25 354.93 L794.46 353.94 L794.66 352.94 L794.85 351.94 L795.05 350.94 L795.24 349.93 L795.43 348.93 L795.61 347.91 L795.79 346.90 L795.97 345.88 L796.15 344.86 L796.32 343.84 L796.49 342.82 L796.66 341.79 L796.82 340.76 L796.98 339.72 L797.13 338.69 L797.29 337.65 L797.44 336.61 L797.58 335.56 L797.73 334.51 L797.87 333.46 L798.01 332.41 L798.14 331.36 L798.27 330.30 L798.40 329.24 L798.53 328.18 L798.65 327.12 L798.77 326.05 L798.88 324.99 L799.00 323.92 L799.11 322.85 L799.21 321.77 L799.32 320.70 L799.42 319.62 L799.51 318.54 L799.61 317.46 L799.70 316.38 L799.79 315.30 L799.87 314.21 L799.96 313.12 L800.03 312.03 L800.11 310.94 L800.18 309.85 L800.25 308.76 L800.32 307.67 L800.38 306.57 L800.44 305.47 L800.50 304.38 L800.55 303.28 L800.60 302.18 L800.65 301.08 L800.70 299.98 L800.74 298.87 L800.78 297.77 L800.81 296.67 L800.85 295.56 L800.87 294.46 L800.90 293.35 L800.92 292.25 L800.94 291.14 L800.96 290.04 L800.98 288.93 L800.99 287.82 L800.99 286.71 L801.00 285.61 Z" stroke="#f00000" fill="none" stroke-width="1.15" stroke-linecap="butt"/>
<path d="M900.00 172.00 L898.51 172.90 L897.05 173.83 L895.63 174.79 L894.25 175.78 L892.89 176.79 L891.58 177.82 L890.29 178.89 L889.04 179.97 L887.82 181.08 L886.63 182.22 L885.47 183.38 L884.35 184.56 L883.25 185.76 L882.19 186.98 L881.16 188.23 L880.16 189.49 L879.19 190.78 L878.25 192.08 L877.34 193.40 L876.45 194.75 L875.60 196.11 L874.77 197.48 L873.98 198.88 L873.21 200.28 L872.47 201.71 L871.75 203.15 L871.07 204.61 L870.41 206.07 L869.77 207.56 L869.17 209.05 L868.58 210.56 L868.03 212.08 L867.50 213.61 L866.99 215.15 L866.51 216.71 L866.05 218.27 L865.61 219.84 L865.20 221.42 L864.82 223.01 L864.45 224.61 L864.11 226.21 L863.79 227.82 L863.50 229.44 L863.22 231.06 L862.97 232.69 L862.73 234.32 L862.52 235.95 L862.33 237.59 L862.16 239.23 L862.01 240.88 L861.87 242.52 L861.76 244.17 L861.67 245.82 L861.59 247.47 L861.54 249.12 L861.50 250.77 L861.47 252.41 L861.46 254.06 L861.47 255.71 L861.49 257.36 L861.52 259.01 L861.57 260.66 L861.63 262.31 L861.69 263.95 L861.77 265.60 L861.86 267.25 L861.95 268.89 L862.05 270.54 L862.16 272.19 L862.27 273.83 L862.39 275.48 L862.51 277.12 L862.63 278.77 L862.76 280.41 L862.89 282.06 L863.02 283.70 L863.15 285.34 L863.27 286.98 L863.40 288.62 L863.52 290.26 L863.64 291.90 L863.76 293.54 L863.86 295.18 L863.97 296.81 L864.07 298.45 L864.15 300.09 L864.23 301.72 L864.31 303.35 L864.37 304.98 L864.42 306.61 L864.45 308.24 L864.48 309.87 L864.49 311.50 L864.49 313.13 L864.47 314.75 L864.44 316.38 L864.39 318.00 L864.32 319.62 L864.23 321.24 L864.13 322.86 L864.00 324.47 L863.85 326.09 L863.68 327.70 L863.49 329.32 L863.28 330.93 L863.04 332.54 L862.78 334.14 L862.49 335.75 L862.17 337.35 L861.83 338.95 L861.46 340.55 L861.07 342.14 L860.65 343.72 L860.20 345.30 L859.73 346.87 L859.23 348.43 L858.71 349.99 L858.16 351.53 L857.58 353.06 L856.98 354.58 L856.34 356.09 L855.69 357.59 L855.00 359.07 L854.29 360.54 L853.55 361.99 L852.78 363.43 L851.99 364.85 L851.17 366.25 L850.32 367.63 L849.45 369.00 L848.54 370.34 L847.61 371.66 L846.66 372.96 L845.67 374.24 L844.66 375.50 L843.61 376.73 L842.54 377.94 L841.45 379.12 L840.32 380.27 L839.16 381.40 L837.98 382.50 L836.77 383.57 L835.53 384.61 L834.26 385.62 L832.96 386.60 L831.64 387.54 L830.28 388.46 L828.90 389.34 L827.48 390.19 L826.04 391.00 L824.57 391.77 L823.07 392.51 L821.54 393.21 L819.98 393.87 L818.39 394.50 L816.77 395.08 L815.12 395.62 L813.45 396.12 L811.74 396.58 L810.00 397.00" stroke="#f4f4f4" fill="none" stroke-width="1.15" stroke-linecap="butt"/>
<path d="M905.83 181.62 L904.46 182.45 L903.23 183.24 L902.04 184.04 L900.87 184.87 L899.74 185.72 L898.63 186.58 L897.56 187.47 L896.51 188.38 L895.49 189.31 L894.49 190.26 L893.52 191.23 L892.58 192.22 L891.66 193.23 L890.77 194.26 L889.90 195.31 L889.06 196.37 L888.24 197.46 L887.44 198.56 L886.67 199.69 L885.92 200.83 L885.19 201.99 L884.48 203.17 L883.80 204.36 L883.14 205.57 L882.50 206.80 L881.88 208.05 L881.28 209.31 L880.71 210.59 L880.16 211.89 L879.62 213.20 L879.11 214.52 L878.62 215.86 L878.15 217.21 L877.71 218.58 L877.28 219.96 L876.87 221.35 L876.48 222.75 L876.11 224.17 L875.77 225.59 L875.44 227.03 L875.13 228.48 L874.84 229.93 L874.57 231.40 L874.32 232.87 L874.09 234.35 L873.88 235.84 L873.69 237.33 L873.51 238.83 L873.35 240.33 L873.22 241.84 L873.09 243.36 L872.99 244.88 L872.90 246.40 L872.83 247.92 L872.78 249.45 L872.74 250.98 L872.72 252.52 L872.71 254.07 L872.72 255.62 L872.74 257.18 L872.77 258.74 L872.81 260.31 L872.87 261.88 L872.93 263.46 L873.01 265.05 L873.09 266.64 L873.18 268.23 L873.28 269.83 L873.38 271.44 L873.49 273.05 L873.61 274.66 L873.73 276.29 L873.85 277.91 L873.98 279.54 L874.10 281.18 L874.23 282.82 L874.36 284.47 L874.49 286.12 L874.62 287.77 L874.74 289.43 L874.86 291.10 L874.98 292.77 L875.09 294.45 L875.20 296.13 L875.30 297.81 L875.39 299.50 L875.47 301.20 L875.55 302.90 L875.61 304.60 L875.66 306.31 L875.70 308.03 L875.73 309.74 L875.74 311.47 L875.74 313.20 L875.72 314.93 L875.68 316.67 L875.63 318.41 L875.56 320.16 L875.46 321.91 L875.35 323.66 L875.21 325.42 L875.05 327.18 L874.87 328.95 L874.65 330.72 L874.42 332.50 L874.15 334.28 L873.86 336.06 L873.54 337.84 L873.19 339.61 L872.81 341.39 L872.40 343.16 L871.97 344.93 L871.50 346.69 L871.00 348.45 L870.48 350.20 L869.92 351.94 L869.34 353.68 L868.72 355.41 L868.07 357.12 L867.39 358.83 L866.68 360.53 L865.94 362.21 L865.17 363.89 L864.37 365.54 L863.53 367.19 L862.66 368.82 L861.76 370.43 L860.82 372.03 L859.85 373.61 L858.85 375.17 L857.81 376.71 L856.74 378.24 L855.64 379.74 L854.50 381.21 L853.33 382.67 L852.12 384.10 L850.87 385.50 L849.59 386.88 L848.27 388.23 L846.92 389.55 L845.53 390.83 L844.11 392.09 L842.65 393.32 L841.15 394.51 L839.62 395.67 L838.05 396.79 L836.45 397.87 L834.81 398.91 L833.13 399.91 L831.42 400.88 L829.68 401.80 L827.90 402.67 L826.08 403.50 L824.23 404.29 L822.35 405.03 L820.44 405.72 L818.49 406.36 L816.52 406.95 L814.51 407.49 L812.62 407.94" stroke="#f00000" fill="none" stroke-width="1.15" stroke-linecap="butt"/>
<circle cx="720.0" cy="127.0" r="38.6" fill="none" stroke="#4a5c6d" stroke-width="1.5" stroke-opacity="0.48"/>
<circle cx="720.0" cy="127.0" r="38.6" fill="none" stroke="#6a849c" stroke-width="0.7" stroke-opacity="0.48"/>
<circle cx="720.0" cy="127.0" r="37.2" fill="none" stroke="#4a5c6d" stroke-width="1.5" stroke-opacity="0.78"/>
<circle cx="720.0" cy="127.0" r="37.2" fill="none" stroke="#6a849c" stroke-width="0.7" stroke-opacity="0.78"/>
<circle cx="720.0" cy="127.0" r="35.8" fill="none" stroke="#4a5c6d" stroke-width="1.5" stroke-opacity="0.68"/>
<circle cx="720.0" cy="127.0" r="35.8" fill="none" stroke="#6a849c" stroke-width="0.7" stroke-opacity="0.68"/>
<circle cx="720.0" cy="127.0" r="34.4" fill="none" stroke="#4a5c6d" stroke-width="1.5" stroke-opacity="0.5"/>
<circle cx="720.0" cy="127.0" r="34.4" fill="none" stroke="#6a849c" stroke-width="0.7" stroke-opacity="0.5"/>
<circle cx="720.0" cy="127.0" r="33.0" fill="none" stroke="#4a5c6d" stroke-width="1.5" stroke-opacity="0.32"/>
<circle cx="720.0" cy="127.0" r="33.0" fill="none" stroke="#6a849c" stroke-width="0.7" stroke-opacity="0.32"/>
<circle cx="720.0" cy="127.0" r="31.6" fill="none" stroke="#4a5c6d" stroke-width="1.5" stroke-opacity="0.17"/>
<circle cx="720.0" cy="127.0" r="31.6" fill="none" stroke="#6a849c" stroke-width="0.7" stroke-opacity="0.17"/>
<circle cx="720.0" cy="127.0" r="30.4" fill="none" stroke="#4a5c6d" stroke-width="1.5" stroke-opacity="0.07"/>
<circle cx="720.0" cy="127.0" r="30.4" fill="none" stroke="#6a849c" stroke-width="0.7" stroke-opacity="0.07"/>
<rect x="704.0" y="125.0" width="32" height="4" fill="#c9c9c9"/>
<rect x="718.0" y="111.0" width="4" height="32" fill="#c9c9c9"/>
<circle cx="720.0" cy="127.0" r="5.2" fill="none" stroke="#c8962c" stroke-width="0.6" stroke-dasharray="1.2 1.2"/>
<circle cx="720.0" cy="127.0" r="1.3" fill="#c81414"/>
<text x="727.5" y="145.5" font-size="14" fill="#f2c12e" textLength="40" lengthAdjust="spacingAndGlyphs">Raster</text>
</g></svg>
<svg id="top" style="left:0;top:0" width="1500" height="160" viewBox="0 0 1500 160">
<text x="14.70" y="15.80" font-size="14" fill="#1c1c1c" stroke="#1c1c1c" stroke-width="0.3" textLength="31.70" lengthAdjust="spacingAndGlyphs" >Datei</text>
<text x="60.00" y="15.80" font-size="14" fill="#1c1c1c" stroke="#1c1c1c" stroke-width="0.3" textLength="67.30" lengthAdjust="spacingAndGlyphs" >Bearbeiten</text>
<text x="141.00" y="15.80" font-size="14" fill="#1c1c1c" stroke="#1c1c1c" stroke-width="0.3" textLength="46.30" lengthAdjust="spacingAndGlyphs" >Ansicht</text>
<text x="200.30" y="15.80" font-size="14" fill="#1c1c1c" stroke="#1c1c1c" stroke-width="0.3" textLength="58.00" lengthAdjust="spacingAndGlyphs" >Selektion</text>
<text x="271.70" y="15.80" font-size="14" fill="#1c1c1c" stroke="#1c1c1c" stroke-width="0.3" textLength="57.60" lengthAdjust="spacingAndGlyphs" >Zeichnen</text>
<text x="342.30" y="15.80" font-size="14" fill="#1c1c1c" stroke="#1c1c1c" stroke-width="0.3" textLength="73.39" lengthAdjust="spacingAndGlyphs" >Bemassung</text>
<text x="428.30" y="15.80" font-size="14" fill="#1c1c1c" stroke="#1c1c1c" stroke-width="0.3" textLength="77.41" lengthAdjust="spacingAndGlyphs" >Modifizieren</text>
<text x="518.30" y="15.80" font-size="14" fill="#1c1c1c" stroke="#1c1c1c" stroke-width="0.3" textLength="30.00" lengthAdjust="spacingAndGlyphs" >Fang</text>
<text x="561.70" y="15.80" font-size="14" fill="#1c1c1c" stroke="#1c1c1c" stroke-width="0.3" textLength="22.59" lengthAdjust="spacingAndGlyphs" >Info</text>
<text x="597.30" y="15.80" font-size="14" fill="#1c1c1c" stroke="#1c1c1c" stroke-width="0.3" textLength="34.40" lengthAdjust="spacingAndGlyphs" >Layer</text>
<text x="644.30" y="15.80" font-size="14" fill="#1c1c1c" stroke="#1c1c1c" stroke-width="0.3" textLength="34.37" lengthAdjust="spacingAndGlyphs" >Block</text>
<text x="691.70" y="15.80" font-size="14" fill="#1c1c1c" stroke="#1c1c1c" stroke-width="0.3" textLength="46.59" lengthAdjust="spacingAndGlyphs" >Fenster</text>
<text x="751.30" y="15.80" font-size="14" fill="#1c1c1c" stroke="#1c1c1c" stroke-width="0.3" textLength="54.00" lengthAdjust="spacingAndGlyphs" >Diverses</text>
<text x="818.70" y="15.80" font-size="14" fill="#1c1c1c" stroke="#1c1c1c" stroke-width="0.3" textLength="27.31" lengthAdjust="spacingAndGlyphs" >Hilfe</text>
<rect x="7" y="32" width="2" height="2" fill="#9c9c9c"/><rect x="7" y="38" width="2" height="2" fill="#9c9c9c"/><rect x="7" y="44" width="2" height="2" fill="#9c9c9c"/><rect x="7" y="50" width="2" height="2" fill="#9c9c9c"/><rect x="7" y="56" width="2" height="2" fill="#9c9c9c"/>
<rect x="87" y="32" width="2" height="2" fill="#9c9c9c"/><rect x="87" y="38" width="2" height="2" fill="#9c9c9c"/><rect x="87" y="44" width="2" height="2" fill="#9c9c9c"/><rect x="87" y="50" width="2" height="2" fill="#9c9c9c"/><rect x="87" y="56" width="2" height="2" fill="#9c9c9c"/>
<rect x="402" y="32" width="2" height="2" fill="#9c9c9c"/><rect x="402" y="38" width="2" height="2" fill="#9c9c9c"/><rect x="402" y="44" width="2" height="2" fill="#9c9c9c"/><rect x="402" y="50" width="2" height="2" fill="#9c9c9c"/><rect x="402" y="56" width="2" height="2" fill="#9c9c9c"/>
<rect x="707" y="32" width="2" height="2" fill="#9c9c9c"/><rect x="707" y="38" width="2" height="2" fill="#9c9c9c"/><rect x="707" y="44" width="2" height="2" fill="#9c9c9c"/><rect x="707" y="50" width="2" height="2" fill="#9c9c9c"/><rect x="707" y="56" width="2" height="2" fill="#9c9c9c"/>
<path d="M186.5 26V67" stroke="#5a5a5a" stroke-width="1" stroke-dasharray="1 2" shape-rendering="crispEdges"/>
<path d="M288.5 26V67" stroke="#5a5a5a" stroke-width="1" stroke-dasharray="1 2" shape-rendering="crispEdges"/>
<path d="M344.5 26V67" stroke="#5a5a5a" stroke-width="1" stroke-dasharray="1 2" shape-rendering="crispEdges"/>
<path d="M501.5 26V67" stroke="#5a5a5a" stroke-width="1" stroke-dasharray="1 2" shape-rendering="crispEdges"/>
<path d="M557.5 26V67" stroke="#5a5a5a" stroke-width="1" stroke-dasharray="1 2" shape-rendering="crispEdges"/>
<path d="M853.5 26V67" stroke="#5a5a5a" stroke-width="1" stroke-dasharray="1 2" shape-rendering="crispEdges"/>
<path d="M910.5 26V67" stroke="#5a5a5a" stroke-width="1" stroke-dasharray="1 2" shape-rendering="crispEdges"/>
<rect x="804" y="25" width="43" height="42" rx="5" fill="#b6b6b6"/>
<rect x="861" y="25" width="43" height="42" rx="5" fill="#b6b6b6"/>
<defs>
<linearGradient id="gpaper" x1="0" y1="0" x2="1" y2="1"><stop offset="0" stop-color="#ffffff"/><stop offset="0.6" stop-color="#f6f6f6"/><stop offset="1" stop-color="#ededed"/></linearGradient>
<radialGradient id="gglow"><stop offset="0" stop-color="#ffffe0"/><stop offset="0.14" stop-color="#fbf77a"/><stop offset="0.4" stop-color="#efe81c"/><stop offset="0.72" stop-color="#e8e010" stop-opacity="0.8"/><stop offset="1" stop-color="#e6dc00" stop-opacity="0"/></radialGradient>
<linearGradient id="gfold" x1="0" y1="0" x2="0.3" y2="1"><stop offset="0" stop-color="#80abdc"/><stop offset="1" stop-color="#568bca"/></linearGradient>
<linearGradient id="gflop" x1="0" y1="0" x2="1" y2="0.25"><stop offset="0" stop-color="#86bcff"/><stop offset="0.16" stop-color="#559cff"/><stop offset="0.7" stop-color="#3f86fa"/><stop offset="1" stop-color="#2f6ef2"/></linearGradient><linearGradient id="gshut" x1="0" y1="0" x2="0" y2="1"><stop offset="0" stop-color="#f4f4fa"/><stop offset="0.75" stop-color="#cfcfde"/><stop offset="1" stop-color="#e6e6f0"/></linearGradient>
<linearGradient id="gflab" x1="0" y1="0" x2="1" y2="1"><stop offset="0" stop-color="#ffffff"/><stop offset="0.45" stop-color="#e4eaff"/><stop offset="0.7" stop-color="#fbfcff"/><stop offset="1" stop-color="#eef2ff"/></linearGradient>
<linearGradient id="ggreen" x1="0" y1="0" x2="1" y2="1"><stop offset="0" stop-color="#6fd06a"/><stop offset="1" stop-color="#078a2c"/></linearGradient>
<linearGradient id="gprn" x1="0" y1="0" x2="0" y2="1"><stop offset="0" stop-color="#fafafa"/><stop offset="0.55" stop-color="#e2e2e2"/><stop offset="1" stop-color="#b0b0b0"/></linearGradient>
<radialGradient id="glens" cx="0.5" cy="0.3" r="0.8"><stop offset="0" stop-color="#8db8ee"/><stop offset="0.6" stop-color="#5b94dc"/><stop offset="1" stop-color="#4f86d0"/></radialGradient>
<linearGradient id="gpencil" x1="0" y1="0" x2="0" y2="1"><stop offset="0" stop-color="#ffd640"/><stop offset="0.5" stop-color="#ffb400"/><stop offset="1" stop-color="#f07c00"/></linearGradient>
</defs>
<path d="M27.3 35.6L27.3 52.3L31.5 48.9L34.9 56.1L38.2 54.5L35 47.7L38.9 46.9Z" fill="#fff" stroke="#4a4a4a" stroke-width="1.1" stroke-linejoin="miter"/>
<rect x="100.2" y="58.6" width="24.6" height="2" rx="0.9" fill="#7a7a7a"/>
<rect x="100.5" y="32.5" width="24" height="26.8" rx="0.8" fill="url(#gpaper)" stroke="#8e8e8e" stroke-width="0.8"/>
<path d="M102 42.4h1.2M102 49.6h1.2" stroke="#cfcfcf" stroke-width="0.6"/>
<circle cx="120.7" cy="37.7" r="7.2" fill="url(#gglow)"/>
<path d="M143.4 35.6Q143.4 34.4 144.6 34.4L151 34.4L151.6 36L149 56.6L146.2 56.6Z" fill="#8a8a8a" stroke="#6a6a6a" stroke-width="0.6"/>
<path d="M144.4 36.4L146.8 54" stroke="#c0c0c0" stroke-width="0.8"/>
<path d="M150.8 32.4L171.8 32.4L169.6 43.6L148.6 55.6L147.2 50.4Z" fill="#fbfbfb" stroke="#7e7e7e" stroke-width="0.7" stroke-linejoin="round"/>
<path d="M152.8 35.6L169.8 35.6L168.8 42.8L151 42.8Z" fill="#b9b9b9"/>
<path d="M153.4 37.4h15.6M153 39.8h15.4" stroke="#dcdcdc" stroke-width="0.9"/>
<path d="M150.4 43.3L174.7 43.3L170.9 56.4Q170.6 57.3 169.6 57.3L146.2 57.3Q148.8 55.4 149.4 51Z" fill="url(#gfold)" stroke="#3f72b4" stroke-width="0.7" stroke-linejoin="round"/>
<path d="M151 44.1L173.6 44.1" stroke="#a6c6ea" stroke-width="0.8"/>
<rect x="202.4" y="33.3" width="24.6" height="24.9" rx="2.8" fill="url(#gflop)" stroke="#2222aa" stroke-width="1.15"/><rect x="205.9" y="34.1" width="18" height="11.7" fill="url(#gflab)"/><rect x="219.9" y="46.8" width="3.2" height="10.9" fill="#1f5cf2" opacity="0.75"/><rect x="207.7" y="48.2" width="12.3" height="9.8" fill="url(#gshut)"/><rect x="209.8" y="50.2" width="1.9" height="4.6" rx="0.5" fill="#1236e0"/>
<rect x="248.2" y="33.3" width="24.6" height="24.9" rx="2.8" fill="url(#gflop)" stroke="#2222aa" stroke-width="1.15"/><rect x="251.7" y="34.1" width="18" height="11.7" fill="url(#gflab)"/><rect x="265.7" y="46.8" width="3.2" height="10.9" fill="#1f5cf2" opacity="0.75"/><rect x="253.5" y="48.2" width="12.3" height="9.8" fill="url(#gshut)"/><rect x="255.6" y="50.2" width="1.9" height="4.6" rx="0.5" fill="#1236e0"/>
<g transform="translate(258.8 50.6) rotate(-49)"><path d="M0 0L4.8 -2.3L20.4 -2.3Q23.2 -2.3 23.2 0Q23.2 2.3 20.4 2.3L4.8 2.3Z" fill="url(#gpencil)" stroke="#b2300c" stroke-width="0.7" stroke-linejoin="round"/><path d="M4.8 -0.7H18.6" stroke="#ffe27a" stroke-width="1.1"/><path d="M0 0L4.8 -2.3L4.8 2.3Z" fill="#f6e6c8" stroke="#b2300c" stroke-width="0.5"/><path d="M0 0L2 -1L2 1Z" fill="#2a2a2a"/><path d="M19 -2.2V2.2" stroke="#e4e4e4" stroke-width="1.5"/><path d="M20.4 -1.9Q22.6 -1.9 22.6 0Q22.6 1.9 20.4 1.9Z" fill="#f28a4a"/></g>
<g stroke="#000" stroke-width="5.6" stroke-linecap="round"><path d="M317 45L317 36.2"/><path d="M317 45L311.6 39.6"/><path d="M317 45L322.4 39.6"/></g>
<rect x="305" y="43.9" width="24.1" height="14" rx="3.2" fill="#000"/>
<g stroke="#f9a825" stroke-width="2.9" stroke-linecap="round"><path d="M317 45L317 36.2"/><path d="M317 45L311.6 39.6"/><path d="M317 45L322.4 39.6"/></g>
<path d="M307.2 45.2Q317 43 326.8 45.2" stroke="#f9a825" stroke-width="2" fill="none" stroke-linecap="round"/>
<text x="307.50" y="56.90" font-size="13.8" fill="#fff" font-weight="bold" textLength="19.50" lengthAdjust="spacingAndGlyphs" >SVG</text>
<rect x="363.4" y="32.2" width="18.8" height="13" rx="0.8" fill="#d0d0d0" stroke="#b4b4b4" stroke-width="0.7"/>
<path d="M372 35.2h8M372 37.6h8M374 40h6" stroke="#f2f2f2" stroke-width="1.2"/>
<ellipse cx="373" cy="58.3" rx="13.4" ry="1.9" fill="#000" opacity="0.3"/>
<path d="M361.6 44.2L384.4 44.2Q386.8 44.2 386.8 46.8L386.8 56.2Q386.8 57.6 385.4 57.6L360.6 57.6Q359.2 57.6 359.2 56.2L359.2 46.8Q359.2 44.2 361.6 44.2Z" fill="url(#gprn)" stroke="#9a9a9a" stroke-width="0.7"/>
<rect x="361" y="46.6" width="24" height="4.2" rx="1" fill="#d6d6d6" stroke="#b8b8b8" stroke-width="0.5"/><circle cx="363.4" cy="49.6" r="0.6" fill="#555"/>
<path d="M359.6 52h26.8" stroke="#fdfdfd" stroke-width="0.9"/>
<path d="M373.4 45.8L381.2 52.2" stroke="#8e8e8a" stroke-width="3.4" stroke-linecap="round"/>
<path d="M373.6 45.4L381.4 51.6" stroke="#d4d4d0" stroke-width="1.4" stroke-linecap="round"/>
<circle cx="368.3" cy="40.7" r="7" fill="#ececea" stroke="#c4c4be" stroke-width="0.6"/>
<circle cx="368.3" cy="40.7" r="5.5" fill="#b4cbe6" stroke="#5a8ccc" stroke-width="0.9"/>
<path d="M364.2 39.6a4.4 4.4 0 0 1 7.4-2.4" stroke="#dde9f6" stroke-width="1.8" fill="none" stroke-linecap="round"/>
<path d="M413.6 37.3 L413.6 52 L427.2 52 L422.6 47.2 C424 42.4 427 38.6 431 38.4 C435 38.4 437.4 42 437.4 46 C437.4 51 433 55.6 425.8 57.3 C430 59.2 436 57.6 439.5 53.6 C443 49 443.2 42 439.4 37.6 C435.6 33 428 32.4 423 35.6 C420.6 37.2 419 39.4 417.8 41.9 Z" fill="url(#ggreen)" stroke="#0c8a2e" stroke-width="0.9" stroke-linejoin="round"/>
<g transform="translate(903.6 0) scale(-1 1)" opacity="0.42"><path d="M413.6 37.3 L413.6 52 L427.2 52 L422.6 47.2 C424 42.4 427 38.6 431 38.4 C435 38.4 437.4 42 437.4 46 C437.4 51 433 55.6 425.8 57.3 C430 59.2 436 57.6 439.5 53.6 C443 49 443.2 42 439.4 37.6 C435.6 33 428 32.4 423 35.6 C420.6 37.2 419 39.4 417.8 41.9 Z" fill="url(#ggreen)" stroke="#0c8a2e" stroke-width="0.9" stroke-linejoin="round"/></g>
<g opacity="0.72"><ellipse cx="529" cy="57.4" rx="12" ry="1.1" fill="#fff" opacity="0.7"/><ellipse cx="524" cy="57.2" rx="5" ry="1" fill="#7a6a6a" opacity="0.5"/><g transform="translate(520.5 54.3) rotate(-44)"><rect x="0" y="-4.5" width="26.6" height="9" rx="0.8" fill="#d45a5a"/><rect x="5.4" y="-4.5" width="21.2" height="3" fill="#e88e8e"/><rect x="5.4" y="-1.5" width="21.2" height="3" fill="#f4f4f4"/><rect x="0" y="-4.5" width="5.6" height="9" fill="#f8f8f8" stroke="#b4b4b4" stroke-width="0.5"/><path d="M26.4 -4.4V4.4" stroke="#9a9a9a" stroke-width="0.8"/></g></g>
<g opacity="0.66"><path d="M585 46.6L585 32L589.6 31L589.4 46Z" fill="#f2f2f2" stroke="#8a8a8a" stroke-width="0.7"/><path d="M588.6 44.8L599.4 37.4L599.8 41L589.6 47.6Z" fill="#f2f2f2" stroke="#8a8a8a" stroke-width="0.7" stroke-dasharray="1.4 0.8"/><ellipse cx="578" cy="47.9" rx="5.6" ry="3.4" transform="rotate(-16 578 47.9)" fill="none" stroke="#dc4a4a" stroke-width="2.5"/><ellipse cx="588.4" cy="54.8" rx="3.2" ry="5.6" transform="rotate(-8 588.4 54.8)" fill="none" stroke="#dc4a4a" stroke-width="2.5"/><path d="M583.2 46.4L587.4 46.6L587.8 49.8" stroke="#dc4a4a" stroke-width="2.4" fill="none"/></g>
<path d="M572.2 57.8h6M575.2 54.8v6" stroke="#333" stroke-width="0.9"/>
<g opacity="0.6"><path d="M617.4 31.2L637.2 31.2Q638.4 31.2 638.4 32.4L638.4 55.6L617.4 55.6Z" fill="#f8f8f8" stroke="#b4b4b4" stroke-width="0.7"/><path d="M620 37h9M620 39.6h9M620 42.2h9M620 44.8h6" stroke="#c8c8c8" stroke-width="0.9"/><path d="M625.8 37.4L645.4 37.4Q646.6 37.4 646.6 38.6L646.6 56L641.6 61.2L625.8 61.2Z" fill="#f6f6f6" stroke="#a8a8a8" stroke-width="0.7"/><path d="M646.6 56L641.6 56L641.6 61.2Z" fill="#d0d0d0" stroke="#a8a8a8" stroke-width="0.5"/><path d="M629.6 43.2h13M629.6 45.8h13M629.6 48.4h13M629.6 51h9" stroke="#c4c4c4" stroke-width="0.9"/></g>
<path d="M618.4 56.8h6M621.4 53.8v6" stroke="#333" stroke-width="0.9"/>
<rect x="664.6" y="33" width="26" height="27.4" rx="1.6" fill="#b87a24" stroke="#9a6210" stroke-width="0.8"/>
<path d="M667.6 35.4L688 35.4L688 53L683 58L667.6 58Z" fill="#f6f6f6" stroke="#c0c0c0" stroke-width="0.5"/>
<path d="M688 53L682.4 53L682.4 58.4L688 58.4Z" fill="#9c9c9c"/><path d="M683.2 57.6L687.4 53.6L687.4 57.6Z" fill="#d8d8d8"/>
<path d="M671 40.6h14M671 43.4h14M671 46.2h12M671 49h14M671 51.8h9" stroke="#c6c6c6" stroke-width="0.9"/>
<path d="M671.4 36.8L671.4 33.6L674.4 33.2L674.4 30.4L681.4 30.4L681.4 33.2L684.4 33.6L684.4 36.8Z" fill="#a4a49c" stroke="#7e7e76" stroke-width="0.7"/>
<path d="M722 56.6h22" stroke="#f00" stroke-width="1.1"/>
<g transform="translate(723.2 55.2) rotate(-43.5)"><path d="M0 0L5.6 -3L22.4 -3Q26.6 -3 26.6 0Q26.6 3 22.4 3L5.6 3Z" fill="#e22a12" stroke="#6e4410" stroke-width="0.7"/><path d="M5.6 -1h15" stroke="#f47a60" stroke-width="1.3"/><path d="M0 0L5.6 -3L5.6 3Z" fill="#f2d6ae" stroke="#6e4410" stroke-width="0.6"/><path d="M0 0L2.2 -1.2L2.2 1.2Z" fill="#222"/><rect x="19.4" y="-3" width="2.2" height="6" fill="#cfcfcf"/></g>
<rect x="764.9" y="35.5" width="28.2" height="21.7" rx="1.2" fill="#000080" stroke="#1c1c1c" stroke-width="1.1"/>
<path d="M790.2 39L768.6 54L790.2 54Z" fill="none" stroke="#fff" stroke-width="1.25" stroke-dasharray="4.2 1.3"/>
<circle cx="825" cy="46" r="12.6" fill="none" stroke="#000" stroke-width="2.1"/>
<path d="M811.4 59.6L838.8 32.2" stroke="#1414f0" stroke-width="1.2"/>
<path d="M869 33h2v2h-2zM869 41h2v2h-2zM869 49h2v2h-2zM869 57h2v2h-2zM877 33h2v2h-2zM877 41h2v2h-2zM877 49h2v2h-2zM877 57h2v2h-2zM885 33h2v2h-2zM885 41h2v2h-2zM885 49h2v2h-2zM885 57h2v2h-2zM893 33h2v2h-2zM893 41h2v2h-2zM893 49h2v2h-2zM893 57h2v2h-2z" fill="#000"/>
<g><ellipse cx="939.6" cy="58.2" rx="10" ry="2.2" fill="#000" opacity="0.07"/><ellipse cx="940.6" cy="58.4" rx="6" ry="1.2" fill="#000" opacity="0.07"/><path d="M946.0 52.6L950.6 56.9" stroke="#5b5b57" stroke-width="4.7" stroke-linecap="round"/><path d="M946.0 51.6L951.6 56.6" stroke="#8f8f8a" stroke-width="1.1" stroke-linecap="round" stroke-dasharray="1.2 1"/><path d="M942.6 49.4L945.2 51.8" stroke="#b9b9b3" stroke-width="2.8"/><circle cx="935.6" cy="42.0" r="11.4" fill="#e9e9e4" stroke="#a9a9a2" stroke-width="0.8"/><circle cx="935.6" cy="42.0" r="9.7" fill="url(#glens)" stroke="#c9cfd6" stroke-width="0.7"/><path d="M925.9 42.0a9.7 9.7 0 0 1 19.4 0z" fill="#fff" opacity="0.18"/></g>
<path d="M929.4 42.1h11.8M935.3 36.2v11.8" stroke="#3f73bd" stroke-width="4.2"/><path d="M929.9 42.1h10.8M935.3 36.7v10.8" stroke="#fff" stroke-width="3.1"/>
<g><ellipse cx="985.4" cy="58.2" rx="10" ry="2.2" fill="#000" opacity="0.07"/><ellipse cx="986.4" cy="58.4" rx="6" ry="1.2" fill="#000" opacity="0.07"/><path d="M991.8 52.6L996.4 56.9" stroke="#5b5b57" stroke-width="4.7" stroke-linecap="round"/><path d="M991.8 51.6L997.4 56.6" stroke="#8f8f8a" stroke-width="1.1" stroke-linecap="round" stroke-dasharray="1.2 1"/><path d="M988.4 49.4L991.0 51.8" stroke="#b9b9b3" stroke-width="2.8"/><circle cx="981.4" cy="42.0" r="11.4" fill="#e9e9e4" stroke="#a9a9a2" stroke-width="0.8"/><circle cx="981.4" cy="42.0" r="9.7" fill="url(#glens)" stroke="#c9cfd6" stroke-width="0.7"/><path d="M971.7 42.0a9.7 9.7 0 0 1 19.4 0z" fill="#fff" opacity="0.18"/></g>
<path d="M975.4 42h11.8" stroke="#3f73bd" stroke-width="4.2"/><path d="M975.9 42h10.8" stroke="#fff" stroke-width="3.1"/>
<g><ellipse cx="1031.2" cy="57.8" rx="10" ry="2.2" fill="#000" opacity="0.07"/><ellipse cx="1032.2" cy="58.0" rx="6" ry="1.2" fill="#000" opacity="0.07"/><path d="M1037.6 52.2L1042.2 56.5" stroke="#5b5b57" stroke-width="4.7" stroke-linecap="round"/><path d="M1037.6 51.2L1043.2 56.2" stroke="#8f8f8a" stroke-width="1.1" stroke-linecap="round" stroke-dasharray="1.2 1"/><path d="M1034.2 49.0L1036.8 51.4" stroke="#b9b9b3" stroke-width="2.8"/><circle cx="1027.2" cy="41.6" r="11.4" fill="#e9e9e4" stroke="#a9a9a2" stroke-width="0.8"/><circle cx="1027.2" cy="41.6" r="9.7" fill="url(#glens)" stroke="#c9cfd6" stroke-width="0.7"/><path d="M1017.5 41.6a9.7 9.7 0 0 1 19.4 0z" fill="#fff" opacity="0.18"/></g>
<rect x="1023.8" y="38.6" width="7" height="7" fill="#a6c3ec"/>
<path d="M1022.3 40.6v-3.5h3.5M1028.8 37.1h3.5v3.5M1032.3 43.6v3.5h-3.5M1025.8 47.1h-3.5v-3.5" fill="none" stroke="#3f73bd" stroke-width="3.4"/>
<path d="M1022.3 40.3v-3.2h3.2M1029.1 37.1h3.2v3.2M1032.3 43.9v3.2h-3.2M1025.5 47.1h-3.2v-3.2" fill="none" stroke="#fff" stroke-width="2.5"/>
<g opacity="0.55"><ellipse cx="1077.0" cy="57.8" rx="10" ry="2.2" fill="#000" opacity="0.07"/><ellipse cx="1078.0" cy="58.0" rx="6" ry="1.2" fill="#000" opacity="0.07"/><path d="M1083.4 52.2L1088.0 56.5" stroke="#5b5b57" stroke-width="4.7" stroke-linecap="round"/><path d="M1083.4 51.2L1089.0 56.2" stroke="#8f8f8a" stroke-width="1.1" stroke-linecap="round" stroke-dasharray="1.2 1"/><path d="M1080.0 49.0L1082.6 51.4" stroke="#b9b9b3" stroke-width="2.8"/><circle cx="1073.0" cy="41.6" r="11.4" fill="#e9e9e4" stroke="#a9a9a2" stroke-width="0.8"/><circle cx="1073.0" cy="41.6" r="9.7" fill="url(#glens)" stroke="#c9cfd6" stroke-width="0.7"/><path d="M1063.3 41.6a9.7 9.7 0 0 1 19.4 0z" fill="#fff" opacity="0.18"/></g>
<rect x="1069.4" y="38.6" width="7" height="7" fill="#b8cdea"/>
<path d="M1067.9 40.3v-3.2h3.2M1074.7 37.1h3.2v3.2M1077.9 43.9v3.2h-3.2M1071.1 47.1h-3.2v-3.2" fill="none" stroke="#ee5a5a" stroke-width="2.5" opacity="0.85"/>
<g><ellipse cx="1123.2" cy="57.8" rx="10" ry="2.2" fill="#000" opacity="0.07"/><ellipse cx="1124.2" cy="58.0" rx="6" ry="1.2" fill="#000" opacity="0.07"/><path d="M1129.6 52.2L1134.2 56.5" stroke="#5b5b57" stroke-width="4.7" stroke-linecap="round"/><path d="M1129.6 51.2L1135.2 56.2" stroke="#8f8f8a" stroke-width="1.1" stroke-linecap="round" stroke-dasharray="1.2 1"/><path d="M1126.2 49.0L1128.8 51.4" stroke="#b9b9b3" stroke-width="2.8"/><circle cx="1119.2" cy="41.6" r="11.4" fill="#e9e9e4" stroke="#a9a9a2" stroke-width="0.8"/><circle cx="1119.2" cy="41.6" r="9.7" fill="url(#glens)" stroke="#c9cfd6" stroke-width="0.7"/><path d="M1109.5 41.6a9.7 9.7 0 0 1 19.4 0z" fill="#fff" opacity="0.18"/></g>
<path d="M1111.6 41.8L1118 36.6L1118 39.6L1126 39.6L1126 44L1118 44L1118 47Z" fill="#fff" stroke="#4a7fc6" stroke-width="0.4"/>
<rect x="1153.4" y="30.6" width="27.2" height="17.6" rx="1" fill="#fdfdfd" stroke="#6d98d8" stroke-width="1"/>
<g transform="translate(0 0)">
<path d="M1176.2 53.8L1179.8 57.2" stroke="#5c5c5c" stroke-width="3.8" stroke-linecap="round"/>
<path d="M1173.2 50.8L1175.8 53.4" stroke="#b9b9b3" stroke-width="2.4"/>
<circle cx="1167.2" cy="44.4" r="9.4" fill="#e9e9e4" stroke="#a9a9a2" stroke-width="0.8"/>
<circle cx="1167.2" cy="44.4" r="7.8" fill="url(#glens)"/>
<path d="M1159.4 45.0a7.8 7.8 0 0 1 15.6 0z" fill="#fff" opacity="0.22"/>
</g>
<g><ellipse cx="1215.8" cy="59.2" rx="10" ry="2.2" fill="#000" opacity="0.07"/><ellipse cx="1216.8" cy="59.4" rx="6" ry="1.2" fill="#000" opacity="0.07"/><path d="M1222.2 53.6L1226.8 57.9" stroke="#5b5b57" stroke-width="4.7" stroke-linecap="round"/><path d="M1222.2 52.6L1227.8 57.6" stroke="#8f8f8a" stroke-width="1.1" stroke-linecap="round" stroke-dasharray="1.2 1"/><path d="M1218.8 50.4L1221.4 52.8" stroke="#b9b9b3" stroke-width="2.8"/><circle cx="1211.8" cy="43.0" r="11.4" fill="#e9e9e4" stroke="#a9a9a2" stroke-width="0.8"/><circle cx="1211.8" cy="43.0" r="9.7" fill="url(#glens)" stroke="#c9cfd6" stroke-width="0.7"/><path d="M1202.1 43.0a9.7 9.7 0 0 1 19.4 0z" fill="#fff" opacity="0.18"/></g>
<path d="M1210.6 40.0L1210.6 34.7L1208.7 34.7L1212.1 30.1L1215.5 34.7L1213.6 34.7L1213.6 40.0ZM1215.1 41.5L1220.4 41.5L1220.4 39.6L1225.0 43.0L1220.4 46.4L1220.4 44.5L1215.1 44.5ZM1213.6 46.0L1213.6 51.3L1215.5 51.3L1212.1 55.9L1208.7 51.3L1210.6 51.3L1210.6 46.0ZM1209.1 44.5L1203.8 44.5L1203.8 46.4L1199.2 43.0L1203.8 39.6L1203.8 41.5L1209.1 41.5Z" fill="#fff" stroke="#3f78c8" stroke-width="0.8" stroke-linejoin="round"/>
<rect x="7" y="77" width="2" height="2" fill="#9c9c9c"/><rect x="7" y="83" width="2" height="2" fill="#9c9c9c"/><rect x="7" y="89" width="2" height="2" fill="#9c9c9c"/><rect x="7" y="95" width="2" height="2" fill="#9c9c9c"/>
<path d="M67.5 71V106" stroke="#5a5a5a" stroke-width="1" stroke-dasharray="1 2" shape-rendering="crispEdges"/>
<path d="M225.5 71V106" stroke="#5a5a5a" stroke-width="1" stroke-dasharray="1 2" shape-rendering="crispEdges"/>
<path d="M450.5 71V106" stroke="#5a5a5a" stroke-width="1" stroke-dasharray="1 2" shape-rendering="crispEdges"/>
<path d="M670.5 71V106" stroke="#5a5a5a" stroke-width="1" stroke-dasharray="1 2" shape-rendering="crispEdges"/>
<path d="M793.5 71V106" stroke="#5a5a5a" stroke-width="1" stroke-dasharray="1 2" shape-rendering="crispEdges"/>
<defs><linearGradient id="btng" x1="0" y1="0" x2="0" y2="1"><stop offset="0" stop-color="#f6f6f6"/><stop offset="0.5" stop-color="#ececec"/><stop offset="1" stop-color="#dcdcdc"/></linearGradient></defs>
<rect x="15" y="73.5" width="43" height="30" rx="5.5" fill="url(#btng)" stroke="#8e8e8e" stroke-width="1.6"/>
<text x="83.00" y="93.40" font-size="13" fill="#1c1c1c" stroke="#1c1c1c" stroke-width="0.3" textLength="43.50" lengthAdjust="spacingAndGlyphs" >Anzahl:</text>
<rect x="142.5" y="80" width="60.5" height="16.5" fill="#fff"/>
<text x="144.00" y="92.50" font-size="13" fill="#1c1c1c" stroke="#1c1c1c" stroke-width="0.3" >1</text>
<rect x="205.5" y="78" width="12.5" height="20" rx="4" fill="#fff"/>
<path d="M205.5 88h12.5" stroke="#e4e4e4" stroke-width="1"/>
<path d="M208.7 85l3.3-3.3 3.3 3.3M208.7 91l3.3 3.3 3.3-3.3" fill="none" stroke="#1c1c1c" stroke-width="1.5"/>
<path d="M142.5 80.2h60.5" stroke="#cfcfcf" stroke-width="0.6"/><path d="M142.5 96.4h60.5" stroke="#c4c4c4" stroke-width="0.5"/>
<text x="241.00" y="93.40" font-size="13" fill="#1c1c1c" stroke="#1c1c1c" stroke-width="0.3" textLength="100.69" lengthAdjust="spacingAndGlyphs" >Polylinienmodus:</text>
<rect x="355" y="70" width="43" height="37" rx="5" fill="#b6b6b6"/>
<text x="465.70" y="93.40" font-size="13" fill="#1c1c1c" stroke="#1c1c1c" stroke-width="0.3" textLength="95.30" lengthAdjust="spacingAndGlyphs" >Verbindungsart:</text>
<rect x="575" y="70" width="43" height="37" rx="5" fill="#b6b6b6"/>
<rect x="685.5" y="81.5" width="13" height="13" rx="3" fill="#fff"/>
<path d="M688.3 88.2l2.8 3.2 4.5-7" fill="none" stroke="#111" stroke-width="1.7"/>
<text x="704.00" y="93.40" font-size="13" fill="#1c1c1c" stroke="#1c1c1c" stroke-width="0.3" textLength="77.00" lengthAdjust="spacingAndGlyphs" >Zuschneiden</text>
<path d="M24.4 88.6L43 79.4" stroke="#ff1a1a" stroke-width="1.1"/>
<path d="M29.2 97.4L47.4 88.2" stroke="#1a1a1a" stroke-width="1.1"/>
<circle cx="34.6" cy="94.6" r="1.9" fill="#f00"/>
<path d="M365.6 99.6V84.6H372.8V77.6H387.4V99.6" fill="none" stroke="#f01414" stroke-width="1.4"/>
<path d="M369.4 99.6V88.6H376.4V81.4H383.6V99.6" fill="none" stroke="#111" stroke-width="1.4"/>
<path d="M415 99.8V87.8H423.2V80M431.2 80V99.8" fill="none" stroke="#555" stroke-width="1.9"/>
<path d="M422.4 80H432.1" stroke="#4646f0" stroke-width="2"/>
<path d="M423.2 76H431.2" stroke="#f06464" stroke-width="2"/>
<path d="M589.2 99.6V89.2Q589.2 81.2 597.2 81.2H607.4" fill="none" stroke="#f01414" stroke-width="1.4"/>
<path d="M596.4 99.6V88.6H607.4" fill="none" stroke="#111" stroke-width="1.4"/>
<path d="M635 99.8V80H655" fill="none" stroke="#f05a5a" stroke-width="2"/>
<path d="M643 99.8V87.8H655" fill="none" stroke="#555" stroke-width="2"/>
<text x="602.30" y="123.80" font-size="11.5" fill="#1c1c1c" stroke="#1c1c1c" stroke-width="0.22" textLength="58.97" lengthAdjust="spacingAndGlyphs" >* offset.dxf</text>
<defs><linearGradient id="gtab" x1="0" y1="0" x2="0.6" y2="1"><stop offset="0" stop-color="#8c9ccc"/><stop offset="0.5" stop-color="#3c4c98"/><stop offset="1" stop-color="#222f78"/></linearGradient></defs>
<circle cx="102.2" cy="118.6" r="5.4" fill="#f6f0f2" stroke="url(#gtab)" stroke-width="2"/>
<path d="M98.2 118.6h8M102.2 114.6v8M99.6 116l5.2 5.2" stroke="#e0a8b0" stroke-width="0.6"/>
<path d="M102.6 119L106.8 123.4" stroke="#f0a020" stroke-width="2.2" stroke-linecap="round"/>
<path d="M106.8 123.4L107.6 124.2" stroke="#d87070" stroke-width="2.2" stroke-linecap="round"/>
<path d="M101.8 118.2L102.8 119.2" stroke="#f8ecc0" stroke-width="1.4" stroke-linecap="round"/>
<clipPath id="rclip"><rect x="95" y="132" width="1044" height="23"/></clipPath><g clip-path="url(#rclip)">
<rect x="95" y="148" width="1" height="7" fill="#5e5e5e"/>
<text x="89.74" y="141.00" font-size="10" fill="#1c1c1c" stroke="#1c1c1c" stroke-width="0.2" letter-spacing="0.0" text-rendering="geometricPrecision" >38</text>
<rect x="117" y="148" width="1" height="7" fill="#5e5e5e"/>
<text x="111.74" y="141.00" font-size="10" fill="#1c1c1c" stroke="#1c1c1c" stroke-width="0.2" letter-spacing="0.0" text-rendering="geometricPrecision" >39</text>
<rect x="140" y="148" width="1" height="7" fill="#5e5e5e"/>
<text x="134.74" y="141.00" font-size="10" fill="#1c1c1c" stroke="#1c1c1c" stroke-width="0.2" letter-spacing="0.0" text-rendering="geometricPrecision" >40</text>
<rect x="162" y="148" width="1" height="7" fill="#5e5e5e"/>
<text x="156.74" y="141.00" font-size="10" fill="#1c1c1c" stroke="#1c1c1c" stroke-width="0.2" letter-spacing="0.0" text-rendering="geometricPrecision" >41</text>
<rect x="185" y="148" width="1" height="7" fill="#5e5e5e"/>
<text x="179.74" y="141.00" font-size="10" fill="#1c1c1c" stroke="#1c1c1c" stroke-width="0.2" letter-spacing="0.0" text-rendering="geometricPrecision" >42</text>
<rect x="207" y="148" width="1" height="7" fill="#5e5e5e"/>
<text x="201.74" y="141.00" font-size="10" fill="#1c1c1c" stroke="#1c1c1c" stroke-width="0.2" letter-spacing="0.0" text-rendering="geometricPrecision" >43</text>
<rect x="230" y="148" width="1" height="7" fill="#5e5e5e"/>
<text x="224.74" y="141.00" font-size="10" fill="#1c1c1c" stroke="#1c1c1c" stroke-width="0.2" letter-spacing="0.0" text-rendering="geometricPrecision" >44</text>
<rect x="252" y="148" width="1" height="7" fill="#5e5e5e"/>
<text x="246.74" y="141.00" font-size="10" fill="#1c1c1c" stroke="#1c1c1c" stroke-width="0.2" letter-spacing="0.0" text-rendering="geometricPrecision" >45</text>
<rect x="275" y="148" width="1" height="7" fill="#5e5e5e"/>
<text x="269.74" y="141.00" font-size="10" fill="#1c1c1c" stroke="#1c1c1c" stroke-width="0.2" letter-spacing="0.0" text-rendering="geometricPrecision" >46</text>
<rect x="297" y="148" width="1" height="7" fill="#5e5e5e"/>
<text x="291.74" y="141.00" font-size="10" fill="#1c1c1c" stroke="#1c1c1c" stroke-width="0.2" letter-spacing="0.0" text-rendering="geometricPrecision" >47</text>
<rect x="320" y="148" width="1" height="7" fill="#5e5e5e"/>
<text x="314.74" y="141.00" font-size="10" fill="#1c1c1c" stroke="#1c1c1c" stroke-width="0.2" letter-spacing="0.0" text-rendering="geometricPrecision" >48</text>
<rect x="342" y="148" width="1" height="7" fill="#5e5e5e"/>
<text x="336.74" y="141.00" font-size="10" fill="#1c1c1c" stroke="#1c1c1c" stroke-width="0.2" letter-spacing="0.0" text-rendering="geometricPrecision" >49</text>
<rect x="365" y="148" width="1" height="7" fill="#5e5e5e"/>
<text x="359.74" y="141.00" font-size="10" fill="#1c1c1c" stroke="#1c1c1c" stroke-width="0.2" letter-spacing="0.0" text-rendering="geometricPrecision" >50</text>
<rect x="387" y="148" width="1" height="7" fill="#5e5e5e"/>
<text x="381.74" y="141.00" font-size="10" fill="#1c1c1c" stroke="#1c1c1c" stroke-width="0.2" letter-spacing="0.0" text-rendering="geometricPrecision" >51</text>
<rect x="410" y="148" width="1" height="7" fill="#5e5e5e"/>
<text x="404.74" y="141.00" font-size="10" fill="#1c1c1c" stroke="#1c1c1c" stroke-width="0.2" letter-spacing="0.0" text-rendering="geometricPrecision" >52</text>
<rect x="432" y="148" width="1" height="7" fill="#5e5e5e"/>
<text x="426.74" y="141.00" font-size="10" fill="#1c1c1c" stroke="#1c1c1c" stroke-width="0.2" letter-spacing="0.0" text-rendering="geometricPrecision" >53</text>
<rect x="455" y="148" width="1" height="7" fill="#5e5e5e"/>
<text x="449.74" y="141.00" font-size="10" fill="#1c1c1c" stroke="#1c1c1c" stroke-width="0.2" letter-spacing="0.0" text-rendering="geometricPrecision" >54</text>
<rect x="477" y="148" width="1" height="7" fill="#5e5e5e"/>
<text x="471.74" y="141.00" font-size="10" fill="#1c1c1c" stroke="#1c1c1c" stroke-width="0.2" letter-spacing="0.0" text-rendering="geometricPrecision" >55</text>
<rect x="500" y="148" width="1" height="7" fill="#5e5e5e"/>
<text x="494.74" y="141.00" font-size="10" fill="#1c1c1c" stroke="#1c1c1c" stroke-width="0.2" letter-spacing="0.0" text-rendering="geometricPrecision" >56</text>
<rect x="522" y="148" width="1" height="7" fill="#5e5e5e"/>
<text x="516.74" y="141.00" font-size="10" fill="#1c1c1c" stroke="#1c1c1c" stroke-width="0.2" letter-spacing="0.0" text-rendering="geometricPrecision" >57</text>
<rect x="545" y="148" width="1" height="7" fill="#5e5e5e"/>
<text x="539.74" y="141.00" font-size="10" fill="#1c1c1c" stroke="#1c1c1c" stroke-width="0.2" letter-spacing="0.0" text-rendering="geometricPrecision" >58</text>
<rect x="567" y="148" width="1" height="7" fill="#5e5e5e"/>
<text x="561.74" y="141.00" font-size="10" fill="#1c1c1c" stroke="#1c1c1c" stroke-width="0.2" letter-spacing="0.0" text-rendering="geometricPrecision" >59</text>
<rect x="590" y="148" width="1" height="7" fill="#5e5e5e"/>
<text x="584.74" y="141.00" font-size="10" fill="#1c1c1c" stroke="#1c1c1c" stroke-width="0.2" letter-spacing="0.0" text-rendering="geometricPrecision" >60</text>
<rect x="612" y="148" width="1" height="7" fill="#5e5e5e"/>
<text x="606.74" y="141.00" font-size="10" fill="#1c1c1c" stroke="#1c1c1c" stroke-width="0.2" letter-spacing="0.0" text-rendering="geometricPrecision" >61</text>
<rect x="635" y="148" width="1" height="7" fill="#5e5e5e"/>
<text x="629.74" y="141.00" font-size="10" fill="#1c1c1c" stroke="#1c1c1c" stroke-width="0.2" letter-spacing="0.0" text-rendering="geometricPrecision" >62</text>
<rect x="657" y="148" width="1" height="7" fill="#5e5e5e"/>
<text x="651.74" y="141.00" font-size="10" fill="#1c1c1c" stroke="#1c1c1c" stroke-width="0.2" letter-spacing="0.0" text-rendering="geometricPrecision" >63</text>
<rect x="680" y="148" width="1" height="7" fill="#5e5e5e"/>
<text x="674.74" y="141.00" font-size="10" fill="#1c1c1c" stroke="#1c1c1c" stroke-width="0.2" letter-spacing="0.0" text-rendering="geometricPrecision" >64</text>
<rect x="702" y="148" width="1" height="7" fill="#5e5e5e"/>
<text x="696.74" y="141.00" font-size="10" fill="#1c1c1c" stroke="#1c1c1c" stroke-width="0.2" letter-spacing="0.0" text-rendering="geometricPrecision" >65</text>
<rect x="725" y="148" width="1" height="7" fill="#5e5e5e"/>
<text x="719.74" y="141.00" font-size="10" fill="#1c1c1c" stroke="#1c1c1c" stroke-width="0.2" letter-spacing="0.0" text-rendering="geometricPrecision" >66</text>
<rect x="747" y="148" width="1" height="7" fill="#5e5e5e"/>
<text x="741.74" y="141.00" font-size="10" fill="#1c1c1c" stroke="#1c1c1c" stroke-width="0.2" letter-spacing="0.0" text-rendering="geometricPrecision" >67</text>
<rect x="770" y="148" width="1" height="7" fill="#5e5e5e"/>
<text x="764.74" y="141.00" font-size="10" fill="#1c1c1c" stroke="#1c1c1c" stroke-width="0.2" letter-spacing="0.0" text-rendering="geometricPrecision" >68</text>
<rect x="792" y="148" width="1" height="7" fill="#5e5e5e"/>
<text x="786.74" y="141.00" font-size="10" fill="#1c1c1c" stroke="#1c1c1c" stroke-width="0.2" letter-spacing="0.0" text-rendering="geometricPrecision" >69</text>
<rect x="815" y="148" width="1" height="7" fill="#5e5e5e"/>
<text x="809.74" y="141.00" font-size="10" fill="#1c1c1c" stroke="#1c1c1c" stroke-width="0.2" letter-spacing="0.0" text-rendering="geometricPrecision" >70</text>
<rect x="837" y="148" width="1" height="7" fill="#5e5e5e"/>
<text x="831.74" y="141.00" font-size="10" fill="#1c1c1c" stroke="#1c1c1c" stroke-width="0.2" letter-spacing="0.0" text-rendering="geometricPrecision" >71</text>
<rect x="860" y="148" width="1" height="7" fill="#5e5e5e"/>
<text x="854.74" y="141.00" font-size="10" fill="#1c1c1c" stroke="#1c1c1c" stroke-width="0.2" letter-spacing="0.0" text-rendering="geometricPrecision" >72</text>
<rect x="882" y="148" width="1" height="7" fill="#5e5e5e"/>
<text x="876.74" y="141.00" font-size="10" fill="#1c1c1c" stroke="#1c1c1c" stroke-width="0.2" letter-spacing="0.0" text-rendering="geometricPrecision" >73</text>
<rect x="905" y="148" width="1" height="7" fill="#5e5e5e"/>
<text x="899.74" y="141.00" font-size="10" fill="#1c1c1c" stroke="#1c1c1c" stroke-width="0.2" letter-spacing="0.0" text-rendering="geometricPrecision" >74</text>
<rect x="927" y="148" width="1" height="7" fill="#5e5e5e"/>
<text x="921.74" y="141.00" font-size="10" fill="#1c1c1c" stroke="#1c1c1c" stroke-width="0.2" letter-spacing="0.0" text-rendering="geometricPrecision" >75</text>
<rect x="950" y="148" width="1" height="7" fill="#5e5e5e"/>
<text x="944.74" y="141.00" font-size="10" fill="#1c1c1c" stroke="#1c1c1c" stroke-width="0.2" letter-spacing="0.0" text-rendering="geometricPrecision" >76</text>
<rect x="972" y="148" width="1" height="7" fill="#5e5e5e"/>
<text x="966.74" y="141.00" font-size="10" fill="#1c1c1c" stroke="#1c1c1c" stroke-width="0.2" letter-spacing="0.0" text-rendering="geometricPrecision" >77</text>
<rect x="995" y="148" width="1" height="7" fill="#5e5e5e"/>
<text x="989.74" y="141.00" font-size="10" fill="#1c1c1c" stroke="#1c1c1c" stroke-width="0.2" letter-spacing="0.0" text-rendering="geometricPrecision" >78</text>
<rect x="1017" y="148" width="1" height="7" fill="#5e5e5e"/>
<text x="1011.74" y="141.00" font-size="10" fill="#1c1c1c" stroke="#1c1c1c" stroke-width="0.2" letter-spacing="0.0" text-rendering="geometricPrecision" >79</text>
<rect x="1040" y="148" width="1" height="7" fill="#5e5e5e"/>
<text x="1034.74" y="141.00" font-size="10" fill="#1c1c1c" stroke="#1c1c1c" stroke-width="0.2" letter-spacing="0.0" text-rendering="geometricPrecision" >80</text>
<rect x="1062" y="148" width="1" height="7" fill="#5e5e5e"/>
<text x="1056.74" y="141.00" font-size="10" fill="#1c1c1c" stroke="#1c1c1c" stroke-width="0.2" letter-spacing="0.0" text-rendering="geometricPrecision" >81</text>
<rect x="1085" y="148" width="1" height="7" fill="#5e5e5e"/>
<text x="1079.74" y="141.00" font-size="10" fill="#1c1c1c" stroke="#1c1c1c" stroke-width="0.2" letter-spacing="0.0" text-rendering="geometricPrecision" >82</text>
<rect x="1107" y="148" width="1" height="7" fill="#5e5e5e"/>
<text x="1101.74" y="141.00" font-size="10" fill="#1c1c1c" stroke="#1c1c1c" stroke-width="0.2" letter-spacing="0.0" text-rendering="geometricPrecision" >83</text>
<rect x="1130" y="148" width="1" height="7" fill="#5e5e5e"/>
<text x="1124.74" y="141.00" font-size="10" fill="#1c1c1c" stroke="#1c1c1c" stroke-width="0.2" letter-spacing="0.0" text-rendering="geometricPrecision" >84</text>
</g>
<path d="M809.6 144.9h11.8l-5.9 6z" fill="#000"/>
</svg>
<svg id="lrul" style="left:72px;top:155px" width="23" height="580" viewBox="72 155 23 580"><clipPath id="lclip"><rect x="72" y="155" width="23" height="578.6"/></clipPath><g clip-path="url(#lclip)">
<g transform="translate(81.3 732.1) rotate(-90)"><text x="-4.45" y="0.00" font-size="10" fill="#1c1c1c" stroke="#1c1c1c" stroke-width="0.2" letter-spacing="0.0" text-rendering="geometricPrecision" >-8</text></g>
<rect x="88" y="709" width="7" height="1" fill="#5e5e5e"/>
<g transform="translate(81.3 709.1) rotate(-90)"><text x="-4.45" y="0.00" font-size="10" fill="#1c1c1c" stroke="#1c1c1c" stroke-width="0.2" letter-spacing="0.0" text-rendering="geometricPrecision" >-7</text></g>
<rect x="88" y="687" width="7" height="1" fill="#5e5e5e"/>
<g transform="translate(81.3 687.1) rotate(-90)"><text x="-4.45" y="0.00" font-size="10" fill="#1c1c1c" stroke="#1c1c1c" stroke-width="0.2" letter-spacing="0.0" text-rendering="geometricPrecision" >-6</text></g>
<rect x="88" y="664" width="7" height="1" fill="#5e5e5e"/>
<g transform="translate(81.3 664.1) rotate(-90)"><text x="-4.45" y="0.00" font-size="10" fill="#1c1c1c" stroke="#1c1c1c" stroke-width="0.2" letter-spacing="0.0" text-rendering="geometricPrecision" >-5</text></g>
<rect x="88" y="642" width="7" height="1" fill="#5e5e5e"/>
<g transform="translate(81.3 642.1) rotate(-90)"><text x="-4.45" y="0.00" font-size="10" fill="#1c1c1c" stroke="#1c1c1c" stroke-width="0.2" letter-spacing="0.0" text-rendering="geometricPrecision" >-4</text></g>
<rect x="88" y="619" width="7" height="1" fill="#5e5e5e"/>
<g transform="translate(81.3 619.1) rotate(-90)"><text x="-4.45" y="0.00" font-size="10" fill="#1c1c1c" stroke="#1c1c1c" stroke-width="0.2" letter-spacing="0.0" text-rendering="geometricPrecision" >-3</text></g>
<rect x="88" y="597" width="7" height="1" fill="#5e5e5e"/>
<g transform="translate(81.3 597.1) rotate(-90)"><text x="-4.45" y="0.00" font-size="10" fill="#1c1c1c" stroke="#1c1c1c" stroke-width="0.2" letter-spacing="0.0" text-rendering="geometricPrecision" >-2</text></g>
<rect x="88" y="574" width="7" height="1" fill="#5e5e5e"/>
<g transform="translate(81.3 574.1) rotate(-90)"><text x="-4.45" y="0.00" font-size="10" fill="#1c1c1c" stroke="#1c1c1c" stroke-width="0.2" letter-spacing="0.0" text-rendering="geometricPrecision" >-1</text></g>
<rect x="88" y="552" width="7" height="1" fill="#5e5e5e"/>
<g transform="translate(81.3 552.1) rotate(-90)"><text x="-2.78" y="0.00" font-size="10" fill="#1c1c1c" stroke="#1c1c1c" stroke-width="0.2" letter-spacing="0.0" text-rendering="geometricPrecision" >0</text></g>
<rect x="88" y="529" width="7" height="1" fill="#5e5e5e"/>
<g transform="translate(81.3 529.1) rotate(-90)"><text x="-2.78" y="0.00" font-size="10" fill="#1c1c1c" stroke="#1c1c1c" stroke-width="0.2" letter-spacing="0.0" text-rendering="geometricPrecision" >1</text></g>
<rect x="88" y="507" width="7" height="1" fill="#5e5e5e"/>
<g transform="translate(81.3 507.1) rotate(-90)"><text x="-2.78" y="0.00" font-size="10" fill="#1c1c1c" stroke="#1c1c1c" stroke-width="0.2" letter-spacing="0.0" text-rendering="geometricPrecision" >2</text></g>
<rect x="88" y="484" width="7" height="1" fill="#5e5e5e"/>
<g transform="translate(81.3 484.1) rotate(-90)"><text x="-2.78" y="0.00" font-size="10" fill="#1c1c1c" stroke="#1c1c1c" stroke-width="0.2" letter-spacing="0.0" text-rendering="geometricPrecision" >3</text></g>
<rect x="88" y="462" width="7" height="1" fill="#5e5e5e"/>
<g transform="translate(81.3 462.1) rotate(-90)"><text x="-2.78" y="0.00" font-size="10" fill="#1c1c1c" stroke="#1c1c1c" stroke-width="0.2" letter-spacing="0.0" text-rendering="geometricPrecision" >4</text></g>
<rect x="88" y="439" width="7" height="1" fill="#5e5e5e"/>
<g transform="translate(81.3 439.1) rotate(-90)"><text x="-2.78" y="0.00" font-size="10" fill="#1c1c1c" stroke="#1c1c1c" stroke-width="0.2" letter-spacing="0.0" text-rendering="geometricPrecision" >5</text></g>
<rect x="88" y="417" width="7" height="1" fill="#5e5e5e"/>
<g transform="translate(81.3 417.1) rotate(-90)"><text x="-2.78" y="0.00" font-size="10" fill="#1c1c1c" stroke="#1c1c1c" stroke-width="0.2" letter-spacing="0.0" text-rendering="geometricPrecision" >6</text></g>
<rect x="88" y="394" width="7" height="1" fill="#5e5e5e"/>
<g transform="translate(81.3 394.1) rotate(-90)"><text x="-2.78" y="0.00" font-size="10" fill="#1c1c1c" stroke="#1c1c1c" stroke-width="0.2" letter-spacing="0.0" text-rendering="geometricPrecision" >7</text></g>
<rect x="88" y="372" width="7" height="1" fill="#5e5e5e"/>
<g transform="translate(81.3 372.1) rotate(-90)"><text x="-2.78" y="0.00" font-size="10" fill="#1c1c1c" stroke="#1c1c1c" stroke-width="0.2" letter-spacing="0.0" text-rendering="geometricPrecision" >8</text></g>
<rect x="88" y="349" width="7" height="1" fill="#5e5e5e"/>
<g transform="translate(81.3 349.1) rotate(-90)"><text x="-2.78" y="0.00" font-size="10" fill="#1c1c1c" stroke="#1c1c1c" stroke-width="0.2" letter-spacing="0.0" text-rendering="geometricPrecision" >9</text></g>
<rect x="88" y="327" width="7" height="1" fill="#5e5e5e"/>
<g transform="translate(81.3 327.1) rotate(-90)"><text x="-5.56" y="0.00" font-size="10" fill="#1c1c1c" stroke="#1c1c1c" stroke-width="0.2" letter-spacing="0.0" text-rendering="geometricPrecision" >10</text></g>
<rect x="88" y="304" width="7" height="1" fill="#5e5e5e"/>
<g transform="translate(81.3 304.1) rotate(-90)"><text x="-5.19" y="0.00" font-size="10" fill="#1c1c1c" stroke="#1c1c1c" stroke-width="0.2" letter-spacing="0.0" text-rendering="geometricPrecision" >11</text></g>
<rect x="88" y="282" width="7" height="1" fill="#5e5e5e"/>
<g transform="translate(81.3 282.1) rotate(-90)"><text x="-5.56" y="0.00" font-size="10" fill="#1c1c1c" stroke="#1c1c1c" stroke-width="0.2" letter-spacing="0.0" text-rendering="geometricPrecision" >12</text></g>
<rect x="88" y="259" width="7" height="1" fill="#5e5e5e"/>
<g transform="translate(81.3 259.1) rotate(-90)"><text x="-5.56" y="0.00" font-size="10" fill="#1c1c1c" stroke="#1c1c1c" stroke-width="0.2" letter-spacing="0.0" text-rendering="geometricPrecision" >13</text></g>
<rect x="88" y="237" width="7" height="1" fill="#5e5e5e"/>
<g transform="translate(81.3 237.1) rotate(-90)"><text x="-5.56" y="0.00" font-size="10" fill="#1c1c1c" stroke="#1c1c1c" stroke-width="0.2" letter-spacing="0.0" text-rendering="geometricPrecision" >14</text></g>
<rect x="88" y="214" width="7" height="1" fill="#5e5e5e"/>
<g transform="translate(81.3 214.1) rotate(-90)"><text x="-5.56" y="0.00" font-size="10" fill="#1c1c1c" stroke="#1c1c1c" stroke-width="0.2" letter-spacing="0.0" text-rendering="geometricPrecision" >15</text></g>
<rect x="88" y="192" width="7" height="1" fill="#5e5e5e"/>
<g transform="translate(81.3 192.1) rotate(-90)"><text x="-5.56" y="0.00" font-size="10" fill="#1c1c1c" stroke="#1c1c1c" stroke-width="0.2" letter-spacing="0.0" text-rendering="geometricPrecision" >16</text></g>
<rect x="88" y="169" width="7" height="1" fill="#5e5e5e"/>
<g transform="translate(81.3 169.1) rotate(-90)"><text x="-5.56" y="0.00" font-size="10" fill="#1c1c1c" stroke="#1c1c1c" stroke-width="0.2" letter-spacing="0.0" text-rendering="geometricPrecision" >17</text></g>
</g>
<path d="M84.9 276.0v12.4l6.4-6.2z" fill="#000"/>
</svg>
<svg id="left" style="left:0;top:108px" width="72" height="690" viewBox="0 108 72 690">
<defs><linearGradient id="lbg" x1="0" y1="0" x2="0" y2="1"><stop offset="0" stop-color="#f8f8f8"/><stop offset="0.5" stop-color="#f0f0f0"/><stop offset="1" stop-color="#e8e8e8"/></linearGradient><clipPath id="leftclip"><rect x="0" y="108" width="72" height="690"/></clipPath></defs><g clip-path="url(#leftclip)">
<rect x="7" y="116" width="2" height="2" fill="#a2a2a2"/><rect x="13" y="116" width="2" height="2" fill="#a2a2a2"/><rect x="19" y="116" width="2" height="2" fill="#a2a2a2"/><rect x="25" y="116" width="2" height="2" fill="#a2a2a2"/><rect x="31" y="116" width="2" height="2" fill="#a2a2a2"/><rect x="37" y="116" width="2" height="2" fill="#a2a2a2"/><rect x="43" y="116" width="2" height="2" fill="#a2a2a2"/><rect x="49" y="116" width="2" height="2" fill="#a2a2a2"/><rect x="55" y="116" width="2" height="2" fill="#a2a2a2"/><rect x="61" y="116" width="2" height="2" fill="#a2a2a2"/>
<rect x="1.20" y="120.40" width="69.7" height="25.4" fill="url(#lbg)" stroke="#8f8f8f" stroke-width="1.05"/><path d="M1.8 121.3h68.4" stroke="#fdfdfd" stroke-width="0.9"/>
<path d="M32 133L40 129.1L40 137Z" fill="#000"/>
<rect x="1.50" y="156.40" width="33.7" height="33.4" fill="url(#lbg)" stroke="#8f8f8f" stroke-width="1.05"/><path d="M2.1 157.3h32.4" stroke="#fdfdfd" stroke-width="0.9"/>
<rect x="36.50" y="156.40" width="33.7" height="33.4" fill="url(#lbg)" stroke="#8f8f8f" stroke-width="1.05"/><path d="M37.1 157.3h32.4" stroke="#fdfdfd" stroke-width="0.9"/>
<path d="M13.4 172.6h8.4M17.6 168.4v8.4" stroke="#111" stroke-width="1"/>
<circle cx="42.4" cy="162.5" r="1.8" fill="#f00"/>
<circle cx="42.4" cy="169.5" r="1.8" fill="#f00"/>
<circle cx="42.4" cy="176.5" r="1.8" fill="#f00"/>
<circle cx="42.4" cy="183.5" r="1.8" fill="#f00"/>
<circle cx="49.4" cy="162.5" r="1.8" fill="#f00"/>
<circle cx="49.4" cy="169.5" r="1.8" fill="#f00"/>
<circle cx="49.4" cy="176.5" r="1.8" fill="#f00"/>
<circle cx="49.4" cy="183.5" r="1.8" fill="#f00"/>
<circle cx="56.4" cy="162.5" r="1.8" fill="#f00"/>
<circle cx="56.4" cy="169.5" r="1.8" fill="#f00"/>
<circle cx="56.4" cy="176.5" r="1.8" fill="#f00"/>
<circle cx="56.4" cy="183.5" r="1.8" fill="#f00"/>
<circle cx="63.4" cy="162.5" r="1.8" fill="#f00"/>
<circle cx="63.4" cy="169.5" r="1.8" fill="#f00"/>
<circle cx="63.4" cy="176.5" r="1.8" fill="#f00"/>
<circle cx="63.4" cy="183.5" r="1.8" fill="#f00"/>
<rect x="1.50" y="199.90" width="33.7" height="33.4" fill="url(#lbg)" stroke="#8f8f8f" stroke-width="1.05"/><path d="M2.1 200.8h32.4" stroke="#fdfdfd" stroke-width="0.9"/>
<rect x="36.50" y="199.90" width="33.7" height="33.4" fill="url(#lbg)" stroke="#8f8f8f" stroke-width="1.05"/><path d="M37.1 200.8h32.4" stroke="#fdfdfd" stroke-width="0.9"/>
<path d="M15.8 205.5Q17.4 215.6 28.4 218.2" stroke="#111" stroke-width="1.1" fill="none" />
<path d="M7.4 215.2L28.4 226.5" stroke="#111" stroke-width="1.1" fill="none" />
<circle cx="15.8" cy="205.5" r="1.9" fill="#f00"/>
<circle cx="7.4" cy="215.2" r="1.9" fill="#f00"/>
<circle cx="28.4" cy="218.2" r="1.9" fill="#f00"/>
<circle cx="28.4" cy="226.5" r="1.9" fill="#f00"/>
<path d="M42.4 216.4L63.8 205.1" stroke="#111" stroke-width="1.1" fill="none" />
<path d="M50.9 226.5Q52.4 215.2 63.8 213.7" stroke="#111" stroke-width="1.1" fill="none" />
<circle cx="42.4" cy="216.4" r="1.8" fill="#f00"/>
<circle cx="47.8" cy="213.7" r="1.8" fill="#f00"/>
<circle cx="53.2" cy="210.8" r="1.8" fill="#f00"/>
<circle cx="58.6" cy="208.0" r="1.8" fill="#f00"/>
<circle cx="63.8" cy="205.1" r="1.8" fill="#f00"/>
<circle cx="50.9" cy="226.5" r="1.8" fill="#f00"/>
<circle cx="51.8" cy="221.6" r="1.8" fill="#f00"/>
<circle cx="54.5" cy="217.5" r="1.8" fill="#f00"/>
<circle cx="58.6" cy="215.0" r="1.8" fill="#f00"/>
<circle cx="63.8" cy="213.7" r="1.8" fill="#f00"/>
<rect x="1.50" y="234.90" width="33.7" height="33.4" fill="url(#lbg)" stroke="#8f8f8f" stroke-width="1.05"/><path d="M2.1 235.8h32.4" stroke="#fdfdfd" stroke-width="0.9"/>
<rect x="36.50" y="234.90" width="33.7" height="33.4" fill="url(#lbg)" stroke="#8f8f8f" stroke-width="1.05"/><path d="M37.1 235.8h32.4" stroke="#fdfdfd" stroke-width="0.9"/>
<path d="M10.1 241.8L19.4 252.4" stroke="#111" stroke-width="1.1" fill="none" />
<path d="M19.4 252.4L28.2 249.3" stroke="#111" stroke-width="1.1" fill="none" />
<path d="M19.4 252.4Q16.2 256 15.8 261" stroke="#111" stroke-width="1.1" fill="none" />
<path d="M16.6 249.2Q19.2 246.4 22.6 251.2" stroke="#333" stroke-width="0.6" fill="none" />
<circle cx="19.6" cy="249.2" r="0.5" fill="#333"/>
<circle cx="19.4" cy="252.4" r="1.9" fill="#f00"/>
<circle cx="56.3" cy="247.9" r="6.8" fill="none" stroke="#111" stroke-width="1.1"/>
<path d="M43.5 259.2L50.9 245.2" stroke="#111" stroke-width="1.1" fill="none" />
<circle cx="50.9" cy="245.2" r="1.9" fill="#f00"/>
<rect x="1.50" y="269.90" width="33.7" height="33.4" fill="url(#lbg)" stroke="#8f8f8f" stroke-width="1.05"/><path d="M2.1 270.8h32.4" stroke="#fdfdfd" stroke-width="0.9"/>
<rect x="36.50" y="269.90" width="33.7" height="33.4" fill="url(#lbg)" stroke="#8f8f8f" stroke-width="1.05"/><path d="M37.1 270.8h32.4" stroke="#fdfdfd" stroke-width="0.9"/>
<path d="M6.8 286.5L28.2 276.3" stroke="#111" stroke-width="1.1" fill="none" />
<circle cx="17.6" cy="281.3" r="1.9" fill="#f00"/>
<path d="M15.8 296Q16.8 285.6 28.2 283.5" stroke="#111" stroke-width="1.1" fill="none" />
<circle cx="28.0" cy="296.2" r="1.9" fill="#f00"/>
<circle cx="53" cy="286.2" r="9.9" fill="none" stroke="#111" stroke-width="1.1"/>
<circle cx="53.0" cy="286.2" r="1.9" fill="#f00"/>
<circle cx="53.0" cy="276.3" r="1.9" fill="#f00"/>
<circle cx="53.0" cy="296.1" r="1.9" fill="#f00"/>
<circle cx="43.1" cy="286.2" r="1.9" fill="#f00"/>
<circle cx="62.9" cy="286.2" r="1.9" fill="#f00"/>
<rect x="1.50" y="312.90" width="33.7" height="33.4" fill="url(#lbg)" stroke="#8f8f8f" stroke-width="1.05"/><path d="M2.1 313.8h32.4" stroke="#fdfdfd" stroke-width="0.9"/>
<rect x="36.50" y="312.90" width="33.7" height="33.4" fill="url(#lbg)" stroke="#8f8f8f" stroke-width="1.05"/><path d="M37.1 313.8h32.4" stroke="#fdfdfd" stroke-width="0.9"/>
<path d="M7.2 329.7L28.8 318.7" stroke="#111" stroke-width="1.1" fill="none" />
<circle cx="18.0" cy="323.7" r="1.9" fill="#f00"/>
<path d="M15.8 340Q16.4 329 28.6 327" stroke="#111" stroke-width="1.1" fill="none" />
<circle cx="19.2" cy="330.4" r="1.9" fill="#f00"/>
<rect x="41.3" y="319.9" width="23.6" height="18" fill="none" stroke="#222" stroke-width="1.5"/>
<path d="M43.0 336.6L63.4 321.2" stroke="#8a8a8a" stroke-width="0.8" fill="none" stroke-dasharray="2 1.6"/>
<circle cx="53.1" cy="328.9" r="1.9" fill="#f00"/>
<rect x="1.50" y="355.90" width="33.7" height="33.4" fill="url(#lbg)" stroke="#8f8f8f" stroke-width="1.05"/><path d="M2.1 356.8h32.4" stroke="#fdfdfd" stroke-width="0.9"/>
<rect x="36.50" y="355.90" width="33.7" height="33.4" fill="url(#lbg)" stroke="#8f8f8f" stroke-width="1.05"/><path d="M37.1 356.8h32.4" stroke="#fdfdfd" stroke-width="0.9"/>
<path d="M8.2 372.7L29.2 361.5" stroke="#111" stroke-width="1.1" fill="none" />
<circle cx="15.1" cy="368.7" r="2.0" fill="#f00"/>
<path d="M6.2 368.4L10.1 366.6" stroke="#111" stroke-width="1.5" fill="none" /><path d="M13.0 365.2L10.9 368.3L9.3 364.8Z" fill="#111"/>
<path d="M16.4 381.9Q16.4 371 28.9 369.7" stroke="#111" stroke-width="1.1" fill="none" />
<circle cx="18.9" cy="373.9" r="2.0" fill="#f00"/>
<path d="M20.6 382.0L21.4 379.5" stroke="#111" stroke-width="1.5" fill="none" /><path d="M22.3 376.4L23.2 380.0L19.6 378.9Z" fill="#111"/>
<path d="M49.6 368.7L63.7 361.3" stroke="#222" stroke-width="1.0" fill="none" stroke-dasharray="2.4 1.8"/>
<circle cx="49.6" cy="368.7" r="2.0" fill="#f00"/>
<path d="M41.3 369.1L44.5 367.5" stroke="#111" stroke-width="1.5" fill="none" /><path d="M47.4 366.1L45.4 369.2L43.7 365.8Z" fill="#111"/>
<path d="M41.4 371.2L44.4 369.8" stroke="#111" stroke-width="1.2" fill="none" />
<circle cx="42.6" cy="372.9" r="1.2" fill="#111"/>
<circle cx="63.7" cy="361.3" r="1.2" fill="#111"/>
<text x="41.60" y="384.30" font-size="11.8" fill="#111" stroke="#111" stroke-width="0.22" >1</text>
<text x="60.80" y="374.70" font-size="11.4" fill="#111" stroke="#111" stroke-width="0.22" >2</text>
<rect x="1.50" y="398.90" width="33.7" height="33.4" fill="url(#lbg)" stroke="#8f8f8f" stroke-width="1.05"/><path d="M2.1 399.8h32.4" stroke="#fdfdfd" stroke-width="0.9"/>
<rect x="36.50" y="398.90" width="33.7" height="33.4" fill="url(#lbg)" stroke="#8f8f8f" stroke-width="1.05"/><path d="M37.1 399.8h32.4" stroke="#fdfdfd" stroke-width="0.9"/>
<path d="M5.6 412.2L30.0 419.9" stroke="#111" stroke-width="1.1" fill="none" />
<path d="M24.1 403.0L18.7 427.3" stroke="#111" stroke-width="1.1" fill="none" />
<circle cx="20.9" cy="417.6" r="1.9" fill="#f00"/>
<path d="M42.8 416.5L53.6 419.9" stroke="#111" stroke-width="1.1" fill="none" />
<path d="M62.6 406.4L60.4 416.0" stroke="#111" stroke-width="1.1" fill="none" />
<circle cx="58.6" cy="421.7" r="1.9" fill="#f00"/>
<rect x="1.7" y="442.0" width="33.6" height="33.4" rx="4" fill="#b9b9b9" stroke="#a4a4a4" stroke-width="1"/>
<text x="7.40" y="462.20" font-size="11" fill="#222" stroke="#222" stroke-width="0.22" textLength="22.60" lengthAdjust="spacingAndGlyphs" >Auto</text>
<rect x="1.50" y="484.90" width="33.7" height="33.4" fill="url(#lbg)" stroke="#8f8f8f" stroke-width="1.05"/><path d="M2.1 485.8h32.4" stroke="#fdfdfd" stroke-width="0.9"/>
<rect x="36.50" y="484.90" width="33.7" height="33.4" fill="url(#lbg)" stroke="#8f8f8f" stroke-width="1.05"/><path d="M37.1 485.8h32.4" stroke="#fdfdfd" stroke-width="0.9"/>
<path d="M14.6 489.8V504.9H30.4" stroke="#333" stroke-width="1.2" fill="none" />
<circle cx="27.9" cy="491.0" r="1.9" fill="#f00"/>
<text x="6.80" y="494.60" font-size="11" fill="#222" stroke="#222" stroke-width="0.22" >y</text>
<text x="24.60" y="512.80" font-size="11" fill="#222" stroke="#222" stroke-width="0.22" >x</text>
<path d="M57.7 493.4L41.2 510.1H65.3Q65 499 57.7 493.4" stroke="#333" stroke-width="1.2" fill="none" />
<circle cx="57.7" cy="493.4" r="1.8" fill="#f00"/>
<text x="44.60" y="500.60" font-size="10.5" fill="#222" stroke="#222" stroke-width="0.22" >r</text>
<text x="55.00" y="507.80" font-size="11" fill="#222" stroke="#222" stroke-width="0.22" >α</text>
<rect x="1.50" y="527.90" width="33.7" height="33.4" fill="url(#lbg)" stroke="#8f8f8f" stroke-width="1.05"/><path d="M2.1 528.8h32.4" stroke="#fdfdfd" stroke-width="0.9"/>
<rect x="36.50" y="527.90" width="33.7" height="33.4" fill="url(#lbg)" stroke="#8f8f8f" stroke-width="1.05"/><path d="M37.1 528.8h32.4" stroke="#fdfdfd" stroke-width="0.9"/>
<path d="M26.4 535.8H9.7V552.2" stroke="#b4b4b4" stroke-width="0.9" fill="none" />
<circle cx="9.7" cy="535.8" r="2.4" fill="#f00"/>
<circle cx="26.4" cy="535.8" r="1.2" fill="#111"/>
<circle cx="9.7" cy="552.2" r="1.2" fill="#111"/>
<text x="23.80" y="546.60" font-size="10.5" fill="#222" stroke="#222" stroke-width="0.22" >2</text>
<text x="13.80" y="555.20" font-size="10.5" fill="#222" stroke="#222" stroke-width="0.22" >1</text>
<path d="M44.4 552.2H60.8V535.8" stroke="#b4b4b4" stroke-width="0.9" fill="none" />
<circle cx="60.8" cy="552.2" r="2.4" fill="#f00"/>
<circle cx="60.8" cy="535.8" r="1.2" fill="#111"/>
<circle cx="44.4" cy="552.2" r="1.2" fill="#111"/>
<text x="53.40" y="541.00" font-size="10.5" fill="#222" stroke="#222" stroke-width="0.22" >2</text>
<text x="42.60" y="549.20" font-size="10.5" fill="#222" stroke="#222" stroke-width="0.22" >1</text>
<rect x="1.50" y="570.90" width="33.7" height="33.4" fill="url(#lbg)" stroke="#8f8f8f" stroke-width="1.05"/><path d="M2.1 571.8h32.4" stroke="#fdfdfd" stroke-width="0.9"/>
<g stroke="#f4a0a0" stroke-width="0.7" fill="none"><path d="M8.2 577.8H27Q29.4 577.8 29.4 580.2V594Q29.4 596.4 27 596.4H17L14 593.6H10.6Q8.2 593.6 8.2 591.2Z"/><circle cx="14.4" cy="584.4" r="3.4"/><path d="M17.4 592.2L24.6 584.4V592.2Z"/></g>
<circle cx="18.0" cy="586.7" r="1.7" fill="#f00"/>
<rect x="1.8" y="614.0" width="33" height="33" rx="4" fill="#b9b9b9" stroke="#a4a4a4" stroke-width="1"/>
<rect x="36.50" y="613.90" width="33.7" height="33.4" fill="url(#lbg)" stroke="#8f8f8f" stroke-width="1.05"/><path d="M37.1 614.8h32.4" stroke="#fdfdfd" stroke-width="0.9"/>
<path d="M14.4 630.4h7.2M18 626.8v7.2" stroke="#333" stroke-width="1"/>
<path d="M41.0 629.5L64.2 629.5" stroke="#111" stroke-width="1.1" fill="none" />
<path d="M52.5 617.6L52.5 641.3" stroke="#111" stroke-width="1.1" fill="none" />
<circle cx="52.5" cy="629.5" r="3.2" fill="none" stroke="#f00" stroke-width="0.9"/><path d="M49.3 629.5h6.4M52.5 626.3v6.4" stroke="#f00" stroke-width="0.8"/>
<rect x="1.50" y="648.90" width="33.7" height="33.4" fill="url(#lbg)" stroke="#8f8f8f" stroke-width="1.05"/><path d="M2.1 649.8h32.4" stroke="#fdfdfd" stroke-width="0.9"/>
<rect x="36.50" y="648.90" width="33.7" height="33.4" fill="url(#lbg)" stroke="#8f8f8f" stroke-width="1.05"/><path d="M37.1 649.8h32.4" stroke="#fdfdfd" stroke-width="0.9"/>
<path d="M5.3 664.2L29.5 664.2" stroke="#111" stroke-width="1.1" fill="none" />
<circle cx="16.9" cy="664.2" r="3.2" fill="none" stroke="#f00" stroke-width="0.9"/><path d="M13.7 664.2h6.4M16.9 661.0v6.4" stroke="#f00" stroke-width="0.8"/>
<path d="M52.4 652.6L52.4 676.3" stroke="#111" stroke-width="1.1" fill="none" />
<circle cx="52.4" cy="664.2" r="3.2" fill="none" stroke="#f00" stroke-width="0.9"/><path d="M49.2 664.2h6.4M52.4 661.0v6.4" stroke="#f00" stroke-width="0.8"/>
<rect x="1.50" y="683.90" width="33.7" height="33.4" fill="url(#lbg)" stroke="#8f8f8f" stroke-width="1.05"/><path d="M2.1 684.8h32.4" stroke="#fdfdfd" stroke-width="0.9"/>
<path d="M25.3 709.4L29.7 709.4" stroke="#9a9a9a" stroke-width="0.9" fill="none" />
<path d="M24.7 705.1L29.0 704.0" stroke="#9a9a9a" stroke-width="0.9" fill="none" />
<path d="M20.4 697.7L23.5 694.6" stroke="#9a9a9a" stroke-width="0.9" fill="none" />
<path d="M17.0 695.0L19.2 691.2" stroke="#9a9a9a" stroke-width="0.9" fill="none" />
<path d="M13.0 693.4L14.1 689.1" stroke="#9a9a9a" stroke-width="0.9" fill="none" />
<path d="M8.7 692.8L8.7 688.4" stroke="#9a9a9a" stroke-width="0.9" fill="none" />
<path d="M8.7 709.4L27.0 698.7" stroke="#111" stroke-width="1.2" fill="none" />
<circle cx="8.7" cy="709.4" r="3.4" fill="none" stroke="#f00" stroke-width="0.9"/><path d="M5.3 709.4h6.8M8.7 706.0v6.8" stroke="#f00" stroke-width="0.8"/>
<rect x="1.50" y="726.90" width="33.7" height="33.4" fill="url(#lbg)" stroke="#8f8f8f" stroke-width="1.05"/><path d="M2.1 727.8h32.4" stroke="#fdfdfd" stroke-width="0.9"/>
<rect x="36.50" y="726.90" width="33.7" height="33.4" fill="url(#lbg)" stroke="#8f8f8f" stroke-width="1.05"/><path d="M37.1 727.8h32.4" stroke="#fdfdfd" stroke-width="0.9"/>
<circle cx="15.0" cy="737.4" r="3.4" fill="none" stroke="#f00" stroke-width="0.9"/><path d="M11.6 737.4h6.8M15.0 734.0v6.8" stroke="#f00" stroke-width="0.8"/>
<path d="M16.4 739.2L16.4 749.8L18.8 747.6L20.8 752L22.6 751.2L20.6 746.8L23.8 746.4Z" fill="#f2f2f2" stroke="#666" stroke-width="0.9"/>
<ellipse cx="45.9" cy="738.4" rx="2.3" ry="3.6" fill="none" stroke="#111" stroke-width="1.4"/><rect x="48.5" y="735.9" width="13.2" height="2.4" fill="#111"/><rect x="55.3" y="738.2" width="6.4" height="3.6" fill="#111"/><rect x="57.5" y="740.1" width="1.1" height="1.8" fill="#eee"/>
<circle cx="52.4" cy="750.7" r="3.4" fill="none" stroke="#f00" stroke-width="0.9"/><path d="M49.0 750.7h6.8M52.4 747.3v6.8" stroke="#f00" stroke-width="0.8"/>
<rect x="1.50" y="769.90" width="33.7" height="33.4" fill="url(#lbg)" stroke="#8f8f8f" stroke-width="1.05"/><path d="M2.1 770.8h32.4" stroke="#fdfdfd" stroke-width="0.9"/>
<ellipse cx="10.9" cy="785.7" rx="2.3" ry="3.6" fill="none" stroke="#111" stroke-width="1.4"/><rect x="13.5" y="783.2" width="13.2" height="2.4" fill="#111"/><rect x="20.3" y="785.5" width="6.4" height="3.6" fill="#111"/><rect x="22.5" y="787.4" width="1.1" height="1.8" fill="#eee"/>
</g></svg>
<svg id="right" style="left:1155px;top:108px" width="345" height="690" viewBox="1155 108 345 690">
<defs><linearGradient id="rbg" x1="0" y1="0" x2="0" y2="1"><stop offset="0" stop-color="#f6f6f6"/><stop offset="1" stop-color="#e9e9e9"/></linearGradient></defs>
<circle cx="1164" cy="118" r="6.9" fill="#6f6f6f"/><path d="M1160.8 114.8l6.4 6.4M1167.2 114.8l-6.4 6.4" stroke="#f2f2f2" stroke-width="1.9"/>
<circle cx="1182" cy="118" r="6.9" fill="#6f6f6f"/><rect x="1180.4" y="114.6" width="5.4" height="4.4" rx="0.8" fill="none" stroke="#f2f2f2" stroke-width="1"/><rect x="1178.2" y="117" width="5.4" height="4.4" rx="0.8" fill="#6f6f6f" stroke="#f2f2f2" stroke-width="1"/>
<text x="1296.80" y="123.00" font-size="12" fill="#1c1c1c" stroke="#1c1c1c" stroke-width="0.3" textLength="50.70" lengthAdjust="spacingAndGlyphs" >Layerliste</text>
<rect x="1155" y="130.2" width="300" height="26.3" fill="#a6a6a6"/>
<rect x="1155.8" y="131.4" width="58.5" height="23.4" fill="url(#rbg)"/>
<rect x="1215.8" y="131.4" width="58.5" height="23.4" fill="url(#rbg)"/>
<rect x="1275.8" y="131.4" width="58.5" height="23.4" fill="url(#rbg)"/>
<rect x="1335.8" y="131.4" width="58.5" height="23.4" fill="url(#rbg)"/>
<rect x="1395.8" y="131.4" width="58.5" height="23.4" fill="url(#rbg)"/>
<g transform="translate(1184.8 142.8)" opacity="1.0"><path d="M-7.6 0.3C-5.2 -4 -2 -5.7 0.4 -5.7C3.4 -5.7 6 -3.8 7.7 0.1C5.8 3.8 3.2 5.6 0.2 5.6C-2.8 5.6 -5.6 3.8 -7.6 0.3Z" fill="#000"/><path d="M-5.3 0.4C-3.6 -2.2 -1.6 -3.3 0.4 -3.3C2.6 -3.3 4.2 -2.2 5.5 0.1C4.2 2.6 2.4 3.7 0.2 3.7C-2 3.7 -3.8 2.6 -5.3 0.4Z" fill="#fff"/><circle cx="0.2" cy="0.1" r="3.2" fill="#000"/><circle cx="-0.6" cy="-1.3" r="0.8" fill="#ddd"/></g>
<g transform="translate(1244.8 142.8)" opacity="0.75"><path d="M-7.6 0.3C-5.2 -4 -2 -5.7 0.4 -5.7C3.4 -5.7 6 -3.8 7.7 0.1C5.8 3.8 3.2 5.6 0.2 5.6C-2.8 5.6 -5.6 3.8 -7.6 0.3Z" fill="#8a8a8a"/><path d="M-5.3 0.4C-3.6 -2.2 -1.6 -3.3 0.4 -3.3C2.6 -3.3 4.2 -2.2 5.5 0.1C4.2 2.6 2.4 3.7 0.2 3.7C-2 3.7 -3.8 2.6 -5.3 0.4Z" fill="#fff"/><circle cx="0.2" cy="0.1" r="3.2" fill="#8a8a8a"/><circle cx="-0.6" cy="-1.3" r="0.8" fill="#ddd"/></g>
<path d="M1299.2 143.2h11.6M1305 137.4v11.6" stroke="#8c0000" stroke-width="3.6"/><path d="M1299.6 143.2h10.8M1305 137.8v10.8" stroke="#ff1010" stroke-width="2.6"/>
<path d="M1359.2 143.2h11.6" stroke="#8c0000" stroke-width="3.6"/><path d="M1359.6 143.2h10.8" stroke="#ff1010" stroke-width="2.6"/>
<g transform="translate(1424.8 142.8) scale(1.05) rotate(-45)"><path d="M-9 0L-5.4 -1.9L7 -1.9L7 1.9L-5.4 1.9Z" fill="#e8a23a" stroke="#a86a10" stroke-width="0.5"/><path d="M-5.4 -0.6H7" stroke="#f6c878" stroke-width="1"/><path d="M-9 0L-5.4 -1.9L-5.4 1.9Z" fill="#e8cfa4" stroke="#8a6a3a" stroke-width="0.4"/><path d="M-9 0L-7.6 -0.7L-7.6 0.7Z" fill="#333"/><rect x="7" y="-1.9" width="2.6" height="3.8" fill="#e0402c" stroke="#a02818" stroke-width="0.4"/></g>
<rect x="1161.5" y="163.5" width="15.5" height="8" fill="#fff" stroke="#000" stroke-width="1"/>
<text x="1183.60" y="171.30" font-size="13" fill="#1c1c1c" stroke="#1c1c1c" stroke-width="0.3" >0</text>
<rect x="1161.5" y="183.5" width="15.5" height="8" fill="#f00" stroke="#000" stroke-width="1"/>
<text x="1183.40" y="191.30" font-size="13" fill="#1c1c1c" stroke="#1c1c1c" stroke-width="0.3" textLength="43.40" lengthAdjust="spacingAndGlyphs" >Versatz</text>
<g transform="translate(1423.2 167.3)" opacity="1.0"><path d="M-7.6 0.3C-5.2 -4 -2 -5.7 0.4 -5.7C3.4 -5.7 6 -3.8 7.7 0.1C5.8 3.8 3.2 5.6 0.2 5.6C-2.8 5.6 -5.6 3.8 -7.6 0.3Z" fill="#000"/><path d="M-5.3 0.4C-3.6 -2.2 -1.6 -3.3 0.4 -3.3C2.6 -3.3 4.2 -2.2 5.5 0.1C4.2 2.6 2.4 3.7 0.2 3.7C-2 3.7 -3.8 2.6 -5.3 0.4Z" fill="#fff"/><circle cx="0.2" cy="0.1" r="3.2" fill="#000"/><circle cx="-0.6" cy="-1.3" r="0.8" fill="#ddd"/></g>
<g transform="translate(1444.9 167.0)"><path d="M-3 0V-2.6A3 3 0 0 1 3 -2.6V0" fill="none" stroke="#bcbcbc" stroke-width="1.5"/><rect x="-4.9" y="-0.4" width="9.8" height="7.6" rx="0.6" fill="#bdbdbd"/></g>
<g transform="translate(1401.3 186.8) scale(0.95) rotate(-45)"><path d="M-9 0L-5.4 -1.9L7 -1.9L7 1.9L-5.4 1.9Z" fill="#e8a23a" stroke="#a86a10" stroke-width="0.5"/><path d="M-5.4 -0.6H7" stroke="#f6c878" stroke-width="1"/><path d="M-9 0L-5.4 -1.9L-5.4 1.9Z" fill="#e8cfa4" stroke="#8a6a3a" stroke-width="0.4"/><path d="M-9 0L-7.6 -0.7L-7.6 0.7Z" fill="#333"/><rect x="7" y="-1.9" width="2.6" height="3.8" fill="#e0402c" stroke="#a02818" stroke-width="0.4"/></g>
<g transform="translate(1423.2 187.3)" opacity="1.0"><path d="M-7.6 0.3C-5.2 -4 -2 -5.7 0.4 -5.7C3.4 -5.7 6 -3.8 7.7 0.1C5.8 3.8 3.2 5.6 0.2 5.6C-2.8 5.6 -5.6 3.8 -7.6 0.3Z" fill="#000"/><path d="M-5.3 0.4C-3.6 -2.2 -1.6 -3.3 0.4 -3.3C2.6 -3.3 4.2 -2.2 5.5 0.1C4.2 2.6 2.4 3.7 0.2 3.7C-2 3.7 -3.8 2.6 -5.3 0.4Z" fill="#fff"/><circle cx="0.2" cy="0.1" r="3.2" fill="#000"/><circle cx="-0.6" cy="-1.3" r="0.8" fill="#ddd"/></g>
<g transform="translate(1444.9 187.0)"><path d="M-3 0V-2.6A3 3 0 0 1 3 -2.6V0" fill="none" stroke="#bcbcbc" stroke-width="1.5"/><rect x="-4.9" y="-0.4" width="9.8" height="7.6" rx="0.6" fill="#bdbdbd"/></g>
<rect x="1462" y="116" width="2" height="2" fill="#a2a2a2"/><rect x="1468" y="116" width="2" height="2" fill="#a2a2a2"/><rect x="1474" y="116" width="2" height="2" fill="#a2a2a2"/><rect x="1480" y="116" width="2" height="2" fill="#a2a2a2"/><rect x="1486" y="116" width="2" height="2" fill="#a2a2a2"/>
<rect x="1456.2" y="120.3" width="50" height="42.3" rx="5" fill="#b4b4b4"/>
<rect x="1456.2" y="417.3" width="50" height="42.3" rx="5" fill="#b4b4b4"/>
<path d="M1458 261.5H1500M1458 409.5H1500" stroke="#5a5a5a" stroke-width="1" stroke-dasharray="1 2"/>
<rect x="1463.5" y="127.5" width="27" height="27" fill="#fff" stroke="#222" stroke-width="1"/><rect x="1463.5" y="127.5" width="27" height="4.4" fill="#000"/><rect x="1464.4" y="128.2" width="2.8" height="2.8" fill="#fff"/>
<rect x="1463.5" y="174.5" width="27" height="27" fill="#fff" stroke="#222" stroke-width="1"/><rect x="1463.5" y="174.5" width="27" height="4.4" fill="#000"/><rect x="1464.4" y="175.2" width="2.8" height="2.8" fill="#fff"/>
<rect x="1463.5" y="220.5" width="27" height="27" fill="#fff" stroke="#222" stroke-width="1"/><rect x="1463.5" y="220.5" width="27" height="4.4" fill="#000"/><rect x="1464.4" y="221.2" width="2.8" height="2.8" fill="#fff"/>
<rect x="1463.5" y="276.5" width="27" height="27" fill="#fff" stroke="#222" stroke-width="1"/><rect x="1463.5" y="276.5" width="27" height="4.4" fill="#000"/><rect x="1464.4" y="277.2" width="2.8" height="2.8" fill="#fff"/>
<rect x="1463.5" y="322.5" width="27" height="27" fill="#fff" stroke="#222" stroke-width="1"/><rect x="1463.5" y="322.5" width="27" height="4.4" fill="#000"/><rect x="1464.4" y="323.2" width="2.8" height="2.8" fill="#fff"/>
<rect x="1463.5" y="369.0" width="27" height="27" fill="#fff" stroke="#222" stroke-width="1"/><rect x="1463.5" y="369.0" width="27" height="4.4" fill="#000"/><rect x="1464.4" y="369.7" width="2.8" height="2.8" fill="#fff"/>
<rect x="1463.5" y="425.0" width="27" height="27" fill="#fff" stroke="#222" stroke-width="1"/><rect x="1463.5" y="425.0" width="27" height="4.4" fill="#000"/><rect x="1464.4" y="425.7" width="2.8" height="2.8" fill="#fff"/>
<rect x="1463.5" y="471.5" width="27" height="27" fill="#fff" stroke="#222" stroke-width="1"/><rect x="1463.5" y="471.5" width="27" height="4.4" fill="#000"/><rect x="1464.4" y="472.2" width="2.8" height="2.8" fill="#fff"/>
<path d="M1469.6 139.2L1473 136.4V147L1469.6 149.8Z" fill="#888" stroke="#555" stroke-width="0.5"/>
<path d="M1471.6 138L1475 135.2V145.8L1471.6 148.6Z" fill="#aaa" stroke="#555" stroke-width="0.5"/>
<path d="M1473.4 137.6L1484.4 133.8V145L1473.4 148.8Z" fill="#fff" stroke="#555" stroke-width="0.6"/>
<path d="M1476 146L1482.6 137.2V144Z" fill="none" stroke="#f05050" stroke-width="0.8"/>
<rect x="1470.4" y="184.6" width="10.6" height="7.6" fill="#f6ecb4" stroke="#6a6a4a" stroke-width="0.7"/>
<circle cx="1480" cy="191.6" r="4.3" fill="#f6ecb4" fill-opacity="0.85" stroke="#6a6a4a" stroke-width="0.7"/>
<rect x="1468.6" y="231.2" width="16.8" height="10.6" rx="2.4" fill="#f1f2f4" stroke="#b9cde6" stroke-width="0.9"/>
<rect x="1466.2" y="284.6" width="4.6" height="3.4" fill="#000"/>
<rect x="1473.6" y="285.0" width="13.6" height="2.6" fill="#fff" stroke="#222" stroke-width="0.7"/>
<rect x="1466.2" y="290.5" width="4.6" height="3.4" fill="#000"/>
<rect x="1473.6" y="290.9" width="13.6" height="2.6" fill="#fff" stroke="#222" stroke-width="0.7"/>
<rect x="1466.2" y="296.4" width="4.6" height="3.4" fill="#000"/>
<rect x="1473.6" y="296.8" width="13.6" height="2.6" fill="#fff" stroke="#222" stroke-width="0.7"/>
<defs><linearGradient id="fun" x1="0" y1="0" x2="1" y2="0"><stop offset="0" stop-color="#777"/><stop offset="0.5" stop-color="#bbb"/><stop offset="1" stop-color="#666"/></linearGradient></defs>
<path d="M1469.6 331.6H1484.6L1478.8 338.4V344.6L1475.6 343.4V338.4Z" fill="url(#fun)" stroke="#555" stroke-width="0.5"/>
<ellipse cx="1477.1" cy="331.6" rx="7.5" ry="1.3" fill="#999" stroke="#555" stroke-width="0.4"/>
<path d="M1469.4 378L1473.4 380.6V389.4L1469.4 392Z" fill="#fff" stroke="#444" stroke-width="0.8"/>
<rect x="1473.6" y="381" width="11" height="8" rx="1" fill="#8c8c8c" stroke="#555" stroke-width="0.5"/>
<path d="M1476 381V389M1478.4 381V389M1480.8 381V389M1483.2 381V389" stroke="#666" stroke-width="0.6"/>
<path d="M1467 385H1488" stroke="#f09a9a" stroke-width="0.7" stroke-dasharray="2 1"/>
<rect x="1465.6" y="432.6" width="9.4" height="1.2" fill="#8a8a8a"/>
<rect x="1465.6" y="435.7" width="8.2" height="1.2" fill="#8a8a8a"/>
<rect x="1465.6" y="438.8" width="11.0" height="1.2" fill="#8a8a8a"/>
<rect x="1465.6" y="441.9" width="10.4" height="1.2" fill="#8a8a8a"/>
<path d="M1463.5 447.2H1490.5" stroke="#333" stroke-width="0.7"/>
<text x="1466.00" y="451.20" font-size="4" fill="#222" >c</text>
<text x="1472.40" y="450.90" font-size="3.6" fill="#111" textLength="15.20" lengthAdjust="spacingAndGlyphs" >command</text>
<rect x="1470.2" y="478.4" width="13.6" height="14.8" rx="1" fill="#b87a24" stroke="#946012" stroke-width="0.6"/>
<path d="M1472 480.2H1482V488.6L1479.4 491.4H1472Z" fill="#f4f4f4"/>
<path d="M1482 488.6H1479.4V491.4Z" fill="#999"/>
<path d="M1473.4 483h7M1473.4 485h7M1473.4 487h5" stroke="#c4c4c4" stroke-width="0.7"/>
<path d="M1474 480.4V478.8H1475.6V477.4H1478.6V478.8H1480.2V480.4Z" fill="#a4a49c" stroke="#77776e" stroke-width="0.5"/>
</svg>
<svg id="bottom" style="left:0;top:728px" width="1500" height="116" viewBox="0 728 1500 116">
<text x="1119.30" y="745.00" font-size="13" fill="#222" stroke="#222" stroke-width="0.3" textLength="33.70" lengthAdjust="spacingAndGlyphs" >1 &lt; 10</text>
<text x="77.30" y="762.20" font-size="13" fill="#0808cc" stroke="#0808cc" stroke-width="0.3" font-style="italic" textLength="70.00" lengthAdjust="spacingAndGlyphs" >Kommando:</text>
<text x="152.00" y="762.20" font-size="13" fill="#0808cc" stroke="#0808cc" stroke-width="0.3" textLength="80.69" lengthAdjust="spacingAndGlyphs" >offsetthrough</text>
<text x="73.30" y="790.00" font-size="13" fill="#1c1c1c" stroke="#1c1c1c" stroke-width="0.3" textLength="92.70" lengthAdjust="spacingAndGlyphs" >Punkt angeben:</text>
<rect x="1133.6" y="780.6" width="13" height="8.8" fill="#ebebeb" stroke="#5a5a5a" stroke-width="0.8"/><rect x="1133.2" y="780.2" width="13.8" height="2.4" fill="#111"/><circle cx="1143.6" cy="781.4" r="0.5" fill="#aaa"/>
<text x="2.40" y="815.70" font-size="9.7" fill="#1e1e1e" stroke="#1e1e1e" stroke-width="0.22" textLength="23.29" lengthAdjust="spacingAndGlyphs" >70,12</text>
<text x="2.40" y="835.70" font-size="9.7" fill="#1e1e1e" stroke="#1e1e1e" stroke-width="0.22" textLength="31.90" lengthAdjust="spacingAndGlyphs" >@70,12</text>
<rect x="253" y="802" width="1" height="40" fill="#9c9c9c"/>
<text x="256.20" y="815.70" font-size="9.7" fill="#1e1e1e" stroke="#1e1e1e" stroke-width="0.22" textLength="53.80" lengthAdjust="spacingAndGlyphs" >71.0211&lt;10°</text>
<text x="256.20" y="835.70" font-size="9.7" fill="#1e1e1e" stroke="#1e1e1e" stroke-width="0.22" textLength="62.10" lengthAdjust="spacingAndGlyphs" >@71.0211&lt;10°</text>
<circle cx="509.3" cy="821.8" r="3" fill="#c6c6c6"/>
<circle cx="942.7" cy="821.8" r="3" fill="#c6c6c6"/>
<circle cx="1272.3" cy="821.8" r="3" fill="#c6c6c6"/>
<text x="631.00" y="825.70" font-size="9.7" fill="#1e1e1e" stroke="#1e1e1e" stroke-width="0.22" textLength="68.01" lengthAdjust="spacingAndGlyphs" >Punkt angeben</text>
<text x="754.30" y="825.70" font-size="9.7" fill="#1e1e1e" stroke="#1e1e1e" stroke-width="0.22" textLength="30.98" lengthAdjust="spacingAndGlyphs" >Zurück</text>
<text x="949.30" y="825.70" font-size="9.7" fill="#1e1e1e" stroke="#1e1e1e" stroke-width="0.22" textLength="111.40" lengthAdjust="spacingAndGlyphs" >Keine Objekte selektiert.</text>
<rect x="717.2" y="806.4" width="17.4" height="29.4" rx="8.6" fill="#fdfdfd" stroke="#2a2a2a" stroke-width="0.9"/>
<path d="M717.4 819.4Q726 816.6 734.4 819.4" fill="none" stroke="#2a2a2a" stroke-width="0.8"/>
<path d="M726 806.6V809.2M726 815.4V818" stroke="#2a2a2a" stroke-width="0.8"/>
<rect x="724.4" y="809" width="3.2" height="6.6" rx="1.6" fill="#fff" stroke="#2a2a2a" stroke-width="0.8"/>
</svg>
</body></html>
